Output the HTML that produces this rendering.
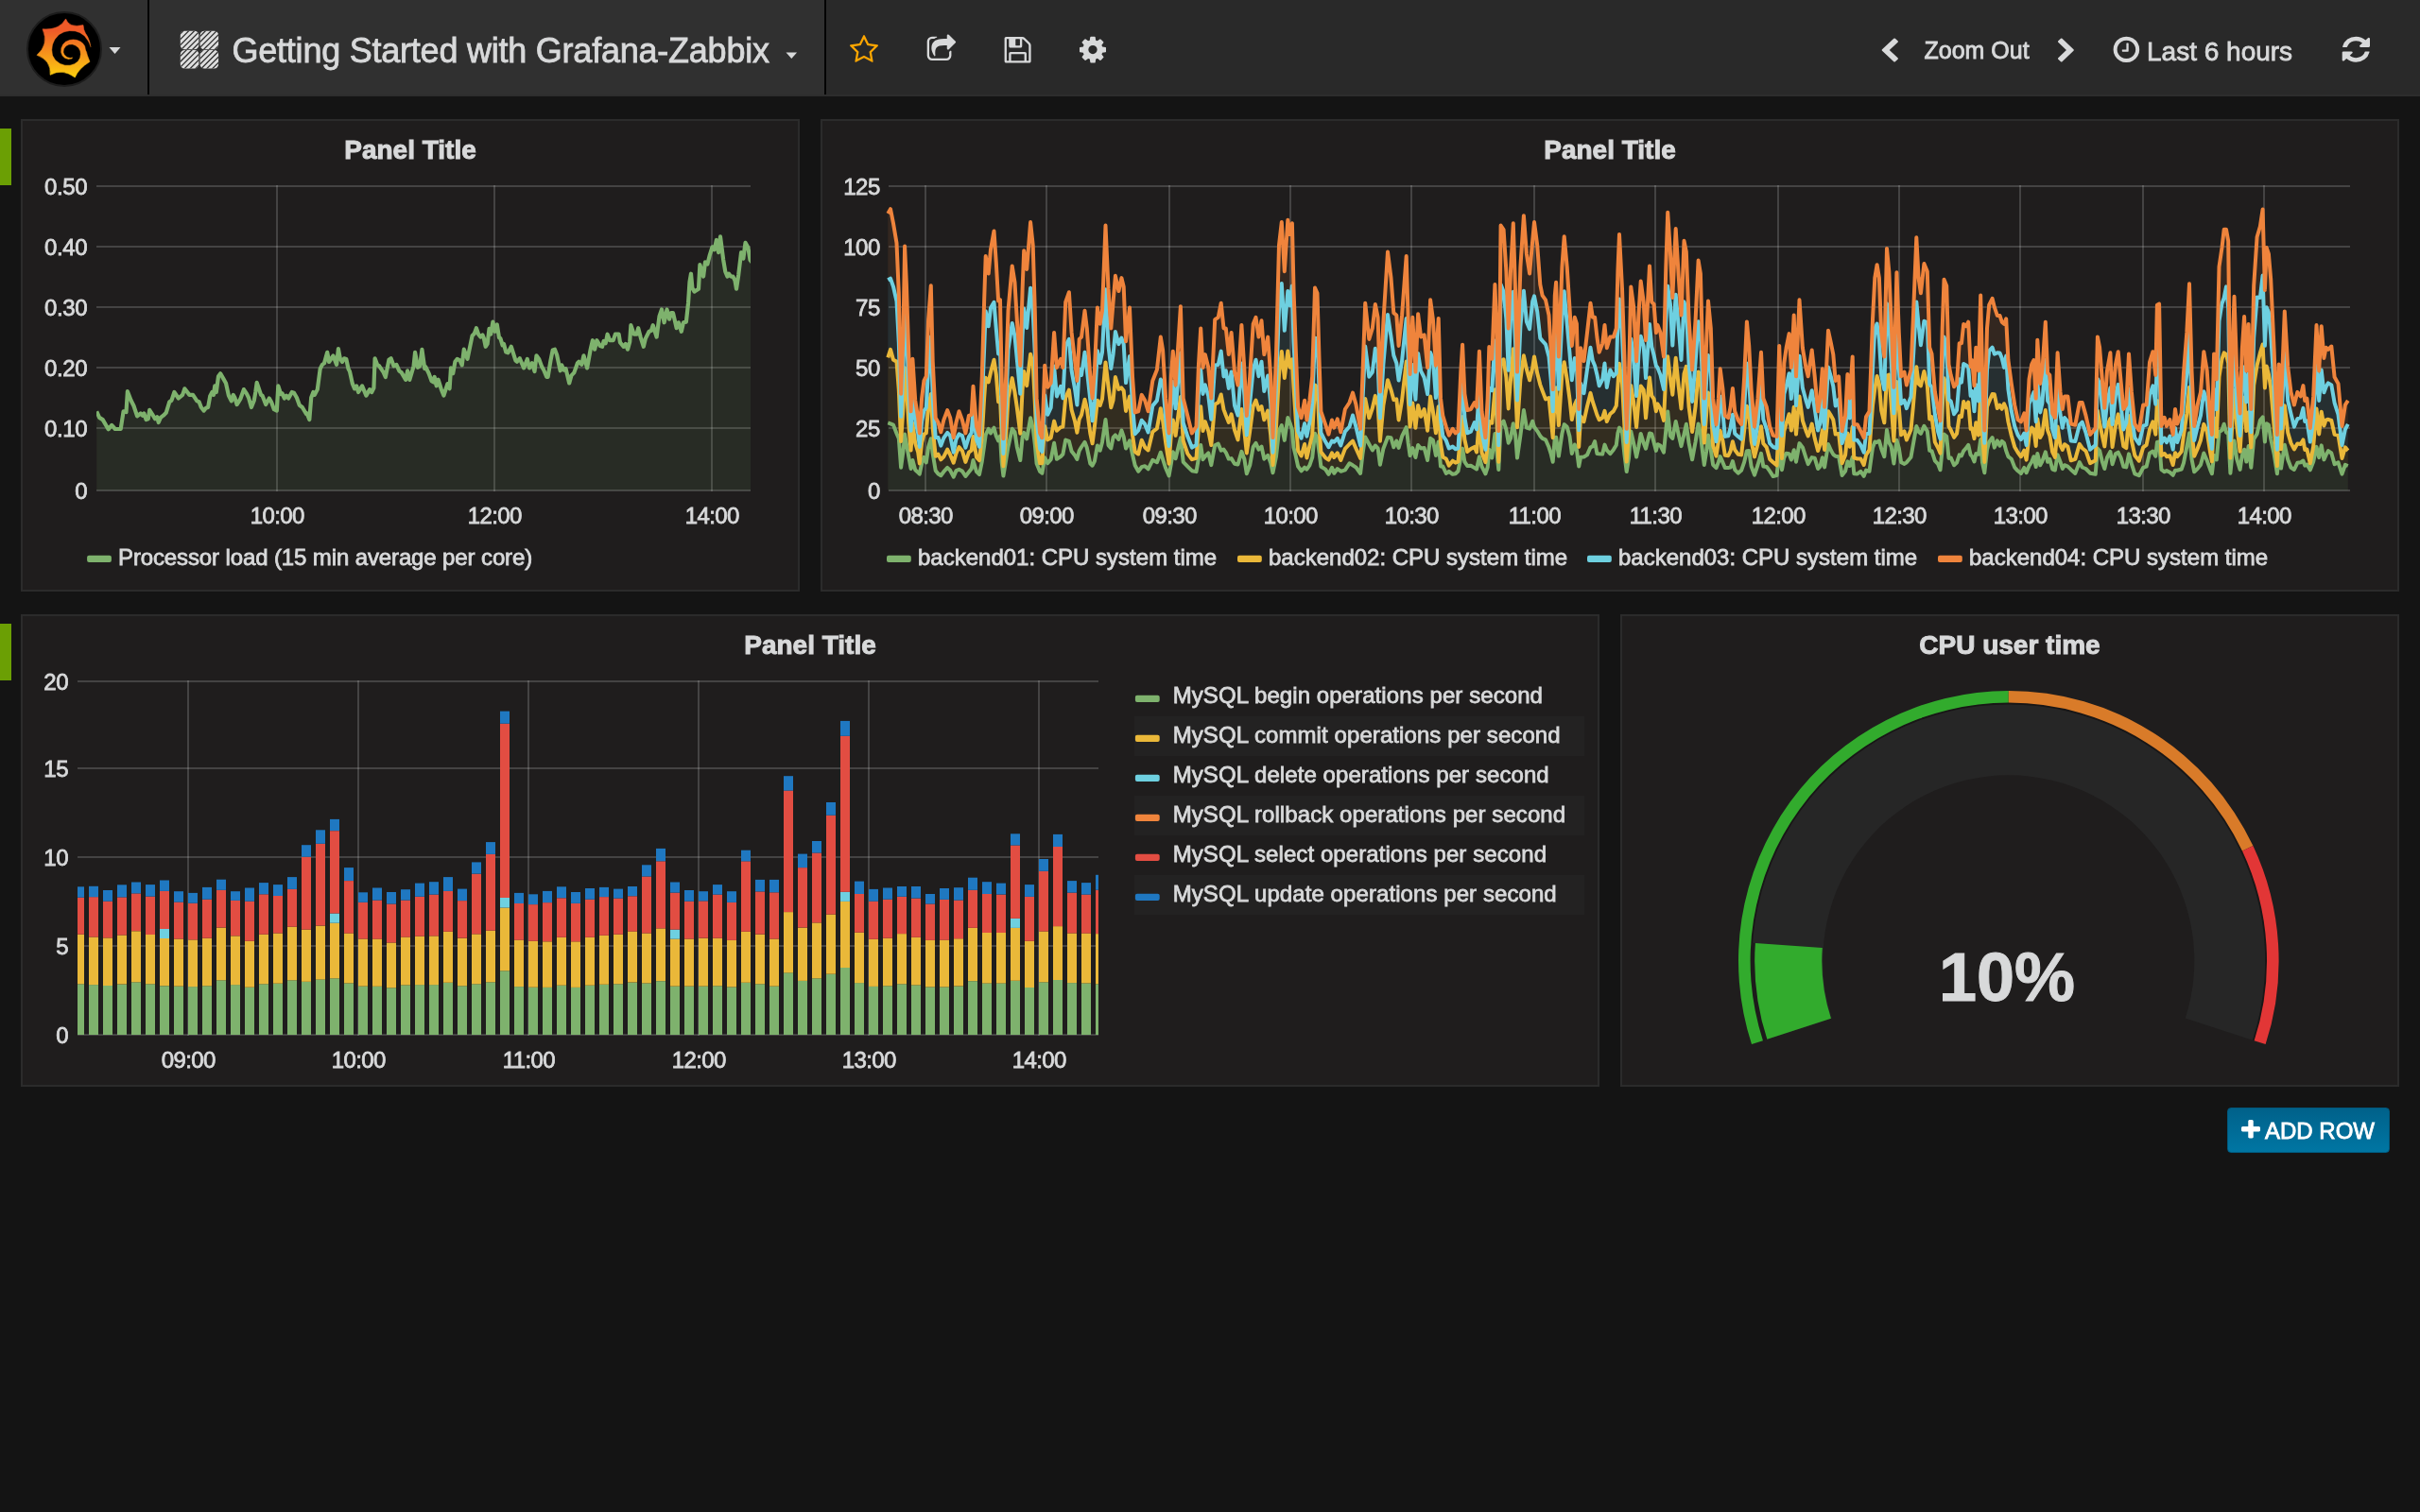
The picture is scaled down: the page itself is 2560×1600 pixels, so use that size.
<!DOCTYPE html><html lang="en"><head><meta charset="utf-8"><title>Grafana - Getting Started with Grafana-Zabbix</title>
<style>
html,body{margin:0;padding:0}
body{width:2560px;height:1600px;background:#141414;overflow:hidden;position:relative;font-family:"Liberation Sans", sans-serif;color:#d8d9da}
.t{position:absolute;white-space:nowrap;line-height:1em;-webkit-text-stroke:0.8px}
#txt{position:absolute;left:0;top:0;width:2560px;height:1600px;will-change:transform}
.ic,.gfx{position:absolute;left:0;top:0;pointer-events:none}
.nav{position:absolute;left:0;top:0;width:2560px;height:100px;background:#292929;border-bottom:2px solid #2d2d2d}
.nav .sec{position:absolute;top:0;height:100px;background:#303030}
.nav .div{position:absolute;top:0;width:2px;height:100px;background:#030303}
.panel{position:absolute;box-sizing:border-box;background:#1f1d1d;border:2px solid #2b2b2b}
.handle{position:absolute;left:0;width:12px;height:60px;background:#6b9f04}
.lrow{position:absolute;left:1200px;width:476px;height:42px}
.lrow.alt{background:#232222}
.btn{position:absolute;left:2356px;top:1172px;width:172px;height:48px;box-sizing:border-box;border-radius:4px;background:linear-gradient(#00618a,#0076a3);border:1px solid #00587c}

</style></head><body>
<div class="nav"><div class="sec" style="left:0;width:156px"></div><div class="div" style="left:156px"></div><div class="sec" style="left:158px;width:714px"></div><div class="div" style="left:872px"></div></div>
<svg class="gfx" width="2560" height="110" viewBox="0 0 2560 110"><defs><linearGradient id="lg" x1="0" y1="0" x2="0" y2="1"><stop offset="0.2" stop-color="#f05a28"/><stop offset="1" stop-color="#fcd00f"/></linearGradient></defs>
<circle cx="68" cy="52" r="39" fill="#000" stroke="#1c1c1c" stroke-width="2"/>
<g transform="translate(24 8) scale(0.05820)">
<path d="M783 205Q838 374 1100 320L1112 400Q1135 470 1180 530Q1225 620 1237 722L1150 762Q1160 850 1220 985Q1015 1112 950 1270Q725 1102 500 1225Q525 965 258 865Q482 672 362 392Q668 418 783 205Z" fill="url(#lg)" stroke="url(#lg)" stroke-width="10" stroke-linejoin="round"/>
<polygon points="1232,722 1205,650 1180,600 1120,520 1040,465 950,435 850,430 750,450 660,500 590,580 550,670 535,770 550,870 600,955 680,1015 770,1045 860,1045 940,1020 1000,975 1035,915 1047,850 1040,790 1010,735 960,695 900,675 840,680 790,705 755,750 745,810 765,860 805,895 860,910 910,900 915,910 890,935 830,945 765,925 715,875 690,810 695,740 725,670 780,615 850,585 920,575 990,585 1050,610 1100,650 1135,700 1150,770 1160,795 1242,738" fill="#000" stroke="#000" stroke-width="6" stroke-linejoin="round"/>
</g>
<path d="M115.5 50 h12 l-6 7 z" fill="#d8d9da"/>
<clipPath id="dsq"><rect x="190.8" y="32.7" width="19.5" height="19.5" rx="4.5"/><rect x="211.6" y="32.7" width="19.5" height="19.5" rx="4.5"/><rect x="190.8" y="53" width="19.5" height="19.5" rx="4.5"/><rect x="211.6" y="53" width="19.5" height="19.5" rx="4.5"/></clipPath>
<g clip-path="url(#dsq)"><rect x="190" y="32" width="42" height="42" fill="#dedede"/>
<path d="M182.90 20L122.90 80" stroke="#2c2c2c" stroke-width="1.25"/>
<path d="M188.80 20L128.80 80" stroke="#2c2c2c" stroke-width="1.25"/>
<path d="M194.70 20L134.70 80" stroke="#2c2c2c" stroke-width="1.25"/>
<path d="M200.60 20L140.60 80" stroke="#2c2c2c" stroke-width="1.25"/>
<path d="M206.50 20L146.50 80" stroke="#2c2c2c" stroke-width="1.25"/>
<path d="M212.40 20L152.40 80" stroke="#2c2c2c" stroke-width="1.25"/>
<path d="M218.30 20L158.30 80" stroke="#2c2c2c" stroke-width="1.25"/>
<path d="M224.20 20L164.20 80" stroke="#2c2c2c" stroke-width="1.25"/>
<path d="M230.10 20L170.10 80" stroke="#2c2c2c" stroke-width="1.25"/>
<path d="M236.00 20L176.00 80" stroke="#2c2c2c" stroke-width="1.25"/>
<path d="M241.90 20L181.90 80" stroke="#2c2c2c" stroke-width="1.25"/>
<path d="M247.80 20L187.80 80" stroke="#2c2c2c" stroke-width="1.25"/>
<path d="M253.70 20L193.70 80" stroke="#2c2c2c" stroke-width="1.25"/>
<path d="M259.60 20L199.60 80" stroke="#2c2c2c" stroke-width="1.25"/>
<path d="M265.50 20L205.50 80" stroke="#2c2c2c" stroke-width="1.25"/>
<path d="M271.40 20L211.40 80" stroke="#2c2c2c" stroke-width="1.25"/>
<path d="M277.30 20L217.30 80" stroke="#2c2c2c" stroke-width="1.25"/>
<path d="M283.20 20L223.20 80" stroke="#2c2c2c" stroke-width="1.25"/>
<path d="M289.10 20L229.10 80" stroke="#2c2c2c" stroke-width="1.25"/>
</g>
<path d="M831.5 55.6 h11.6 l-5.8 6.4 z" fill="#d8d9da"/>
<path fill="#fca600" transform="matrix(0.01803 0 0 -0.01815 899.00 64.29)" d="M1137 532l306 297l-422 62l-189 382l-189 -382l-422 -62l306 -297l-73 -421l378 199l377 -199zM1664 889q0 -22 -26 -48l-363 -354l86 -500q1 -7 1 -20q0 -50 -41 -50q-19 0 -40 12l-449 236l-449 -236q-22 -12 -40 -12q-21 0 -31.500 14.500t-10.500 35.500q0 6 2 20l86 500l-364 354q-25 27 -25 48q0 37 56 46l502 73l225 455q19 41 49 41t49 -41l225 -455l502 -73q56 -9 56 -46z"/>
<path fill="#d8d9da" transform="matrix(0.01827 0 0 -0.01797 980.70 64.00)" d="M1408 547v-259q0 -119 -84.500 -203.500t-203.500 -84.500h-832q-119 0 -203.500 84.500t-84.500 203.500v832q0 119 84.500 203.500t203.500 84.500h255q13 0 22.500 -9.500t9.500 -22.500q0 -27 -26 -32q-77 -26 -133 -60q-10 -4 -16 -4h-112q-66 0 -113 -47t-47 -113v-832q0 -66 47 -113t113 -47h832q66 0 113 47t47 113v214q0 19 18 29q28 13 54 37q16 16 35 8q21 -9 21 -29zM1645 1043l-384 -384q-18 -19 -45 -19q-12 0 -25 5q-39 17 -39 59v192h-160q-323 0 -438 -131q-119 -137 -74 -473q3 -23 -20 -34q-8 -2 -12 -2q-16 0 -26 13q-10 14 -21 31t-39.500 68.500t-49.500 99.500t-38.500 114t-17.500 122q0 49 3.500 91t14 90t28 88t47 81.500t68.500 74t94.500 61.500t124.500 48.500t159.500 30.500t196.500 11h160v192q0 42 39 59q13 5 25 5q26 0 45 -19l384 -384q19 -19 19 -45t-19 -45z"/>
<path fill="#d8d9da" transform="matrix(0.01823 0 0 -0.01790 1062.60 64.21)" d="M384 0h768v384h-768v-384zM1280 0h128v896q0 14 -10 38.500t-20 34.500l-281 281q-10 10 -34 20t-39 10v-416q0 -40 -28 -68t-68 -28h-576q-40 0 -68 28t-28 68v416h-128v-1280h128v416q0 40 28 68t68 28h832q40 0 68 -28t28 -68v-416zM896 928v320q0 13 -9.500 22.500t-22.500 9.500h-192q-13 0 -22.500 -9.500t-9.500 -22.500v-320q0 -13 9.500 -22.500t22.500 -9.500h192q13 0 22.500 9.500t9.500 22.500zM1536 896v-928q0 -40 -28 -68t-68 -28h-1344q-40 0 -68 28t-28 68v1344q0 40 28 68t68 28h928q40 0 88 -20t76 -48l280 -280q28 -28 48 -76t20 -88z"/>
<path fill="#d8d9da" transform="matrix(0.01823 0 0 -0.01797 1142.00 64.10)" d="M1024 640q0 106 -75 181t-181 75t-181 -75t-75 -181t75 -181t181 -75t181 75t75 181zM1536 749v-222q0 -12 -8 -23t-20 -13l-185 -28q-19 -54 -39 -91q35 -50 107 -138q10 -12 10 -25t-9 -23q-27 -37 -99 -108t-94 -71q-12 0 -26 9l-138 108q-44 -23 -91 -38q-16 -136 -29 -186q-7 -28 -36 -28h-222q-14 0 -24.500 8.500t-11.500 21.500l-28 184q-49 16 -90 37l-141 -107q-10 -9 -25 -9q-14 0 -25 11q-126 114 -165 168q-7 10 -7 23q0 12 8 23q15 21 51 66.500t54 70.500q-27 50 -41 99l-183 27q-13 2 -21 12.500t-8 23.500v222q0 12 8 23t19 13l186 28q14 46 39 92q-40 57 -107 138q-10 12 -10 24q0 10 9 23q26 36 98.500 107.500t94.500 71.500q13 0 26 -10l138 -107q44 23 91 38q16 136 29 186q7 28 36 28h222q14 0 24.500 -8.500t11.500 -21.500l28 -184q49 -16 90 -37l142 107q9 9 24 9q13 0 25 -10q129 -119 165 -170q7 -8 7 -22q0 -12 -8 -23q-15 -21 -51 -66.500t-54 -70.500q26 -50 41 -98l183 -28q13 -2 21 -12.500t8 -23.500z"/>
<path fill="#d8d9da" transform="matrix(0.01660 0 0 -0.01563 1988.14 64.01)" d="M1171 1235l-531 -531l531 -531q19 -19 19 -45t-19 -45l-166 -166q-19 -19 -45 -19t-45 19l-742 742q-19 19 -19 45t19 45l742 742q19 19 45 19t45 -19l166 -166q19 -19 19 -45t-19 -45z"/>
<path fill="#d8d9da" transform="matrix(0.01622 0 0 -0.01563 2175.54 64.01)" d="M1107 659l-742 -742q-19 -19 -45 -19t-45 19l-166 166q-19 19 -19 45t19 45l531 531l-531 531q-19 19 -19 45t19 45l166 166q19 19 45 19t45 -19l742 -742q19 -19 19 -45t-19 -45z"/>
<path fill="#d8d9da" transform="matrix(0.01797 0 0 -0.01784 2235.60 63.82)" d="M896 992v-448q0 -14 -9 -23t-23 -9h-320q-14 0 -23 9t-9 23v64q0 14 9 23t23 9h224v352q0 14 9 23t23 9h64q14 0 23 -9t9 -23zM1312 640q0 148 -73 273t-198 198t-273 73t-273 -73t-198 -198t-73 -273t73 -273t198 -198t273 -73t273 73t198 198t73 273zM1536 640q0 -209 -103 -385.500t-279.500 -279.500t-385.500 -103t-385.500 103t-279.500 279.500t-103 385.500t103 385.500t279.500 279.500t385.500 103t385.500 -103t279.500 -279.500t103 -385.500z"/>
<path fill="#d8d9da" transform="matrix(0.01908 0 0 -0.01758 2477.70 63.45)" d="M1511 480q0 -5 -1 -7q-64 -268 -268 -434.500t-478 -166.500q-146 0 -282.500 55t-243.500 157l-129 -129q-19 -19 -45 -19t-45 19t-19 45v448q0 26 19 45t45 19h448q26 0 45 -19t19 -45t-19 -45l-137 -137q71 -66 161 -102t187 -36q134 0 250 65t186 179q11 17 53 117q8 23 30 23h192q13 0 22.500 -9.500t9.500 -22.500zM1536 1280v-448q0 -26 -19 -45t-45 -19h-448q-26 0 -45 19t-19 45t19 45l138 138q-148 137 -349 137q-134 0 -250 -65t-186 -179q-11 -17 -53 -117q-8 -23 -30 -23h-199q-13 0 -22.500 9.500t-9.500 22.500v7q65 268 270 434.500t480 166.500q146 0 284 -55.500t245 -156.500l130 129q19 19 45 19t45 -19t19 -45z"/>
</svg>
<div class="handle" style="top:136px"></div><div class="handle" style="top:660px"></div>
<div class="panel" style="left:22px;top:126px;width:824px;height:500px"></div>
<div class="panel" style="left:868px;top:126px;width:1670px;height:500px"></div>
<div class="panel" style="left:22px;top:650px;width:1670px;height:500px"></div>
<div class="panel" style="left:1714px;top:650px;width:824px;height:500px"></div>
<div class="lrow" style="top:716px"></div>
<div class="lrow alt" style="top:758px"></div>
<div class="lrow" style="top:800px"></div>
<div class="lrow alt" style="top:842px"></div>
<div class="lrow" style="top:884px"></div>
<div class="lrow alt" style="top:926px"></div>
<svg class="gfx" width="2560" height="1600" viewBox="0 0 2560 1600">
<rect x="102" y="196" width="692" height="2" fill="rgba(255,255,255,0.17)"/><rect x="102" y="260" width="692" height="2" fill="rgba(255,255,255,0.17)"/><rect x="102" y="324" width="692" height="2" fill="rgba(255,255,255,0.17)"/><rect x="102" y="388" width="692" height="2" fill="rgba(255,255,255,0.17)"/><rect x="102" y="452" width="692" height="2" fill="rgba(255,255,255,0.17)"/><rect x="102" y="518" width="692" height="2" fill="rgba(255,255,255,0.17)"/><rect x="292" y="196" width="2" height="324" fill="rgba(255,255,255,0.17)"/><rect x="522" y="196" width="2" height="324" fill="rgba(255,255,255,0.17)"/><rect x="752" y="196" width="2" height="324" fill="rgba(255,255,255,0.17)"/>
<clipPath id="c1"><rect x="102" y="177" width="692" height="342"/></clipPath><g clip-path="url(#c1)">
<path d="M102.2 435.3L105.1 441.9L108.7 444.1L114.6 454.3L118.2 449.9L121.8 454.0L127.7 454.0L130.6 435.3L133.5 436.1L134.9 414.2L138.6 423.7L141.5 429.5L145.1 440.4L148.8 437.5L150.9 439.7L152.4 437.5L154.6 444.1L156.8 443.3L158.2 433.9L161.1 438.3L164.0 443.3L166.2 441.2L167.7 447.0L169.9 441.9L172.8 439.7L175.7 436.8L179.3 425.2L181.5 423.7L184.4 415.0L188.8 421.5L193.1 417.9L195.3 411.3L200.4 417.9L204.1 417.9L208.4 424.4L210.6 425.2L212.8 431.0L215.7 434.6L217.9 431.7L220.1 431.0L222.2 419.3L224.4 415.0L225.9 417.9L227.3 408.4L228.8 415.0L231.0 398.2L233.2 395.3L236.1 400.4L239.0 405.5L241.9 418.6L244.8 424.4L246.7 417.9L248.4 420.8L250.6 428.1L254.3 422.2L257.9 412.1L260.8 416.4L263.0 420.8L265.9 431.0L268.8 423.7L270.3 415.0L271.7 404.8L276.1 417.9L277.5 418.6L281.2 428.1L284.8 421.5L287.0 425.2L289.9 433.2L292.8 434.6L294.3 408.4L297.2 417.2L298.6 416.4L300.8 421.5L303.0 418.6L305.2 421.5L308.8 415.0L311.0 415.7L313.9 420.8L316.8 428.8L319.8 431.0L324.1 438.3L324.8 437.5L327.3 444.1L329.2 420.8L331.4 415.0L332.8 417.9L335.8 412.1L338.7 390.2L340.9 385.9L343.0 384.4L346.2 372.8L348.1 383.0L352.5 376.4L356.1 385.9L357.9 369.1L359.8 379.3L362.0 383.0L364.1 379.3L366.3 380.0L368.5 390.2L370.0 393.1L372.9 406.2L375.1 411.3L377.2 408.4L379.1 415.0L383.1 408.4L387.4 418.6L391.1 412.1L393.2 415.0L395.4 410.6L396.6 379.3L399.1 385.9L401.2 387.3L405.6 393.9L407.8 399.0L411.4 380.8L413.6 379.3L416.5 387.3L419.4 385.9L422.3 392.4L424.5 393.9L429.2 401.9L431.1 392.4L433.3 401.9L437.6 387.3L439.1 372.8L442.0 388.8L444.2 387.3L446.4 369.9L449.3 390.2L450.1 387.9L453.7 395.2L456.6 403.2L458.8 404.6L459.6 398.8L461.7 408.3L463.6 401.7L466.8 411.9L469.4 418.5L473.4 406.1L475.6 411.2L477.0 389.4L479.2 395.2L481.4 382.8L483.6 379.9L486.5 381.4L488.7 386.4L490.8 369.7L494.5 379.9L499.6 355.2L501.8 353.0L503.9 347.2L506.1 353.7L508.3 356.6L510.5 354.4L511.9 358.1L513.7 366.8L515.6 363.9L517.5 347.9L519.2 353.7L521.4 340.6L523.6 350.8L525.8 343.5L528.0 357.3L529.4 358.1L531.6 365.3L533.0 363.9L535.2 372.6L537.4 373.3L540.8 366.8L545.4 381.4L546.9 382.8L549.8 379.2L554.1 389.4L557.8 379.9L560.0 389.4L562.9 384.3L565.5 393.0L567.5 376.3L570.2 379.9L573.1 387.9L575.2 391.5L578.2 398.8L579.6 398.8L582.5 381.4L584.7 370.4L586.9 369.7L589.1 375.5L592.7 392.3L594.2 386.4L596.4 391.5L598.5 390.1L602.2 405.4L604.4 397.4L607.3 394.4L610.9 384.3L612.4 382.8L615.3 385.7L617.5 376.3L621.1 389.4L624.7 369.7L626.9 360.2L629.1 369.7L631.3 360.2L634.9 366.1L637.1 366.8L638.6 361.0L640.7 363.2L642.6 353.7L645.1 360.2L648.7 360.2L650.9 353.7L654.6 353.7L656.0 362.4L659.7 366.8L661.8 363.9L664.0 369.7L666.2 361.7L667.4 344.2L670.6 353.7L673.5 353.7L675.2 347.2L677.8 357.3L680.8 366.8L682.9 358.1L686.6 350.8L688.8 350.1L690.7 344.2L694.6 356.6L697.5 334.8L700.0 327.5L702.6 341.3L705.5 327.5L708.1 337.7L709.9 331.1L712.0 331.1L715.7 347.2L717.9 341.3L720.8 350.8L723.0 341.3L725.9 340.6L728.1 320.2L729.5 298.4L731.0 289.7L732.4 304.9L734.6 308.6L739.0 305.7L740.4 280.2L744.1 292.6L746.0 277.3L748.4 279.5L750.6 270.7L753.5 261.3L755.7 264.2L757.9 254.0L760.1 267.1L762.0 250.4L765.2 275.1L767.3 287.5L769.5 292.6L771.0 289.7L773.2 292.6L775.4 292.6L777.5 296.9L779.0 305.7L781.2 291.1L784.1 267.1L786.3 273.7L788.5 256.9L791.4 262.0L793.5 275.1L796.0 278.1L796.0 519L102.2 519Z" fill="#7EB26D" fill-opacity="0.1"/>
<path d="M102.2 435.3L105.1 441.9L108.7 444.1L114.6 454.3L118.2 449.9L121.8 454.0L127.7 454.0L130.6 435.3L133.5 436.1L134.9 414.2L138.6 423.7L141.5 429.5L145.1 440.4L148.8 437.5L150.9 439.7L152.4 437.5L154.6 444.1L156.8 443.3L158.2 433.9L161.1 438.3L164.0 443.3L166.2 441.2L167.7 447.0L169.9 441.9L172.8 439.7L175.7 436.8L179.3 425.2L181.5 423.7L184.4 415.0L188.8 421.5L193.1 417.9L195.3 411.3L200.4 417.9L204.1 417.9L208.4 424.4L210.6 425.2L212.8 431.0L215.7 434.6L217.9 431.7L220.1 431.0L222.2 419.3L224.4 415.0L225.9 417.9L227.3 408.4L228.8 415.0L231.0 398.2L233.2 395.3L236.1 400.4L239.0 405.5L241.9 418.6L244.8 424.4L246.7 417.9L248.4 420.8L250.6 428.1L254.3 422.2L257.9 412.1L260.8 416.4L263.0 420.8L265.9 431.0L268.8 423.7L270.3 415.0L271.7 404.8L276.1 417.9L277.5 418.6L281.2 428.1L284.8 421.5L287.0 425.2L289.9 433.2L292.8 434.6L294.3 408.4L297.2 417.2L298.6 416.4L300.8 421.5L303.0 418.6L305.2 421.5L308.8 415.0L311.0 415.7L313.9 420.8L316.8 428.8L319.8 431.0L324.1 438.3L324.8 437.5L327.3 444.1L329.2 420.8L331.4 415.0L332.8 417.9L335.8 412.1L338.7 390.2L340.9 385.9L343.0 384.4L346.2 372.8L348.1 383.0L352.5 376.4L356.1 385.9L357.9 369.1L359.8 379.3L362.0 383.0L364.1 379.3L366.3 380.0L368.5 390.2L370.0 393.1L372.9 406.2L375.1 411.3L377.2 408.4L379.1 415.0L383.1 408.4L387.4 418.6L391.1 412.1L393.2 415.0L395.4 410.6L396.6 379.3L399.1 385.9L401.2 387.3L405.6 393.9L407.8 399.0L411.4 380.8L413.6 379.3L416.5 387.3L419.4 385.9L422.3 392.4L424.5 393.9L429.2 401.9L431.1 392.4L433.3 401.9L437.6 387.3L439.1 372.8L442.0 388.8L444.2 387.3L446.4 369.9L449.3 390.2L450.1 387.9L453.7 395.2L456.6 403.2L458.8 404.6L459.6 398.8L461.7 408.3L463.6 401.7L466.8 411.9L469.4 418.5L473.4 406.1L475.6 411.2L477.0 389.4L479.2 395.2L481.4 382.8L483.6 379.9L486.5 381.4L488.7 386.4L490.8 369.7L494.5 379.9L499.6 355.2L501.8 353.0L503.9 347.2L506.1 353.7L508.3 356.6L510.5 354.4L511.9 358.1L513.7 366.8L515.6 363.9L517.5 347.9L519.2 353.7L521.4 340.6L523.6 350.8L525.8 343.5L528.0 357.3L529.4 358.1L531.6 365.3L533.0 363.9L535.2 372.6L537.4 373.3L540.8 366.8L545.4 381.4L546.9 382.8L549.8 379.2L554.1 389.4L557.8 379.9L560.0 389.4L562.9 384.3L565.5 393.0L567.5 376.3L570.2 379.9L573.1 387.9L575.2 391.5L578.2 398.8L579.6 398.8L582.5 381.4L584.7 370.4L586.9 369.7L589.1 375.5L592.7 392.3L594.2 386.4L596.4 391.5L598.5 390.1L602.2 405.4L604.4 397.4L607.3 394.4L610.9 384.3L612.4 382.8L615.3 385.7L617.5 376.3L621.1 389.4L624.7 369.7L626.9 360.2L629.1 369.7L631.3 360.2L634.9 366.1L637.1 366.8L638.6 361.0L640.7 363.2L642.6 353.7L645.1 360.2L648.7 360.2L650.9 353.7L654.6 353.7L656.0 362.4L659.7 366.8L661.8 363.9L664.0 369.7L666.2 361.7L667.4 344.2L670.6 353.7L673.5 353.7L675.2 347.2L677.8 357.3L680.8 366.8L682.9 358.1L686.6 350.8L688.8 350.1L690.7 344.2L694.6 356.6L697.5 334.8L700.0 327.5L702.6 341.3L705.5 327.5L708.1 337.7L709.9 331.1L712.0 331.1L715.7 347.2L717.9 341.3L720.8 350.8L723.0 341.3L725.9 340.6L728.1 320.2L729.5 298.4L731.0 289.7L732.4 304.9L734.6 308.6L739.0 305.7L740.4 280.2L744.1 292.6L746.0 277.3L748.4 279.5L750.6 270.7L753.5 261.3L755.7 264.2L757.9 254.0L760.1 267.1L762.0 250.4L765.2 275.1L767.3 287.5L769.5 292.6L771.0 289.7L773.2 292.6L775.4 292.6L777.5 296.9L779.0 305.7L781.2 291.1L784.1 267.1L786.3 273.7L788.5 256.9L791.4 262.0L793.5 275.1L796.0 278.1" fill="none" stroke="#7EB26D" stroke-width="4.2" stroke-linejoin="round"/>
</g>
<rect x="940" y="196" width="1546" height="2" fill="rgba(255,255,255,0.17)"/><rect x="940" y="260" width="1546" height="2" fill="rgba(255,255,255,0.17)"/><rect x="940" y="324" width="1546" height="2" fill="rgba(255,255,255,0.17)"/><rect x="940" y="388" width="1546" height="2" fill="rgba(255,255,255,0.17)"/><rect x="940" y="452" width="1546" height="2" fill="rgba(255,255,255,0.17)"/><rect x="940" y="518" width="1546" height="2" fill="rgba(255,255,255,0.17)"/><rect x="978" y="196" width="2" height="324" fill="rgba(255,255,255,0.17)"/><rect x="1106" y="196" width="2" height="324" fill="rgba(255,255,255,0.17)"/><rect x="1236" y="196" width="2" height="324" fill="rgba(255,255,255,0.17)"/><rect x="1364" y="196" width="2" height="324" fill="rgba(255,255,255,0.17)"/><rect x="1492" y="196" width="2" height="324" fill="rgba(255,255,255,0.17)"/><rect x="1622" y="196" width="2" height="324" fill="rgba(255,255,255,0.17)"/><rect x="1750" y="196" width="2" height="324" fill="rgba(255,255,255,0.17)"/><rect x="1880" y="196" width="2" height="324" fill="rgba(255,255,255,0.17)"/><rect x="2008" y="196" width="2" height="324" fill="rgba(255,255,255,0.17)"/><rect x="2136" y="196" width="2" height="324" fill="rgba(255,255,255,0.17)"/><rect x="2266" y="196" width="2" height="324" fill="rgba(255,255,255,0.17)"/><rect x="2394" y="196" width="2" height="324" fill="rgba(255,255,255,0.17)"/>
<path d="M939.3 447.4L942.0 448.3L945.0 449.6L948.5 458.8L950.8 463.9L953.1 494.7L955.5 476.9L957.1 459.6L958.9 469.6L961.2 483.0L963.6 496.0L965.4 487.0L968.2 497.2L971.2 499.9L972.8 501.7L975.1 490.4L977.4 483.9L979.8 489.5L982.1 473.1L984.8 464.2L986.7 480.0L989.7 498.0L992.5 501.6L995.3 503.2L998.3 499.2L1002.2 494.9L1005.2 497.8L1008.7 504.7L1011.5 498.1L1014.5 496.7L1017.9 498.6L1021.4 504.0L1024.9 499.5L1027.7 496.0L1029.5 487.0L1033.0 499.2L1036.0 502.2L1038.8 488.3L1041.1 472.0L1042.7 460.2L1045.7 453.8L1048.0 458.4L1051.5 452.7L1053.8 461.4L1056.1 466.3L1058.0 461.6L1059.6 488.5L1061.4 503.6L1064.2 486.9L1066.5 472.8L1070.7 453.8L1073.5 457.2L1075.8 472.9L1079.3 487.0L1081.6 462.6L1083.2 457.9L1086.2 464.3L1090.1 442.3L1092.7 453.1L1094.8 470.3L1096.6 490.6L1100.1 499.0L1102.4 500.7L1105.2 484.2L1108.2 490.1L1111.7 486.2L1115.1 468.8L1117.9 485.8L1122.1 483.1L1124.4 480.6L1127.2 465.5L1130.9 466.9L1133.6 477.4L1137.1 481.9L1139.4 485.9L1141.7 477.0L1144.0 473.0L1147.5 467.8L1149.8 473.8L1153.3 490.5L1155.6 492.7L1157.9 488.1L1160.9 471.4L1163.7 476.7L1166.0 467.9L1169.5 444.0L1172.5 471.1L1175.3 474.4L1177.6 462.8L1179.9 460.4L1183.4 464.9L1186.4 455.5L1188.7 462.2L1191.0 474.5L1195.0 466.3L1198.0 481.0L1200.7 492.5L1204.2 498.8L1207.7 494.2L1211.2 493.2L1214.6 496.3L1219.3 486.8L1223.9 489.2L1227.8 478.7L1230.1 486.0L1233.1 495.3L1236.6 503.4L1238.9 490.5L1240.8 478.2L1243.6 485.3L1248.9 463.4L1251.7 488.8L1256.3 493.6L1260.9 498.2L1265.5 499.1L1267.9 485.1L1270.2 470.9L1272.5 486.2L1274.8 483.0L1278.3 479.4L1281.3 492.1L1285.2 471.2L1288.7 469.6L1291.7 476.7L1294.5 475.6L1296.8 478.8L1299.8 485.6L1302.6 485.1L1306.0 490.7L1309.5 491.5L1313.4 477.8L1316.4 486.0L1318.8 501.3L1322.2 492.3L1325.7 472.8L1328.5 468.9L1331.5 475.7L1334.5 472.5L1337.3 485.7L1341.2 481.8L1344.2 489.7L1346.5 500.2L1350.0 483.0L1353.0 455.8L1355.8 450.1L1358.8 465.9L1362.3 442.0L1364.6 447.7L1366.9 455.0L1368.5 473.6L1370.8 482.8L1373.1 493.5L1376.6 498.3L1380.1 494.7L1382.4 496.6L1385.4 492.4L1388.2 484.2L1391.0 458.7L1393.5 463.9L1395.6 479.0L1397.4 493.7L1402.1 496.6L1405.5 501.9L1409.0 494.8L1411.3 500.8L1414.8 496.0L1418.3 498.8L1422.9 497.4L1427.5 490.3L1431.0 492.3L1434.5 494.6L1439.1 501.0L1441.4 480.9L1444.2 462.4L1448.3 470.0L1451.8 476.4L1454.8 471.5L1457.6 474.3L1459.9 491.8L1463.4 474.7L1468.0 462.8L1471.5 463.2L1474.3 473.3L1477.3 466.5L1479.6 473.9L1483.1 461.7L1487.7 452.2L1489.7 469.0L1491.6 482.1L1494.3 474.1L1497.4 484.0L1500.1 471.0L1503.1 474.5L1506.6 474.0L1510.1 487.0L1513.1 463.7L1515.9 465.9L1518.9 482.0L1521.7 467.4L1524.0 493.6L1526.3 493.5L1529.8 501.0L1532.8 498.8L1536.7 501.8L1539.7 501.2L1542.5 498.5L1545.3 484.1L1547.1 474.6L1549.4 488.7L1552.2 493.0L1555.9 492.8L1559.8 495.1L1562.1 496.5L1564.9 483.2L1567.5 493.7L1571.4 501.3L1573.7 494.3L1575.3 475.7L1578.3 484.5L1581.4 458.9L1583.4 477.7L1585.3 497.1L1587.6 448.9L1590.6 445.6L1593.4 454.6L1595.7 468.7L1598.0 463.9L1600.8 448.2L1603.1 460.5L1605.0 484.5L1608.4 460.6L1611.9 434.1L1614.9 452.6L1618.1 453.6L1621.2 445.7L1623.0 451.8L1626.2 456.1L1629.3 461.3L1631.6 463.9L1635.0 465.3L1638.5 473.3L1640.8 480.7L1642.7 488.7L1644.8 463.1L1646.1 462.7L1648.9 482.6L1652.4 458.9L1654.7 449.1L1657.7 451.8L1660.5 461.9L1662.8 480.0L1665.8 470.5L1667.9 475.9L1670.2 493.6L1672.1 483.8L1675.5 483.5L1679.0 481.4L1682.5 473.3L1684.8 472.4L1687.1 467.1L1689.4 480.0L1691.7 480.3L1695.2 480.5L1697.5 470.6L1699.8 476.4L1703.3 480.2L1706.8 475.9L1709.8 471.0L1711.4 458.3L1713.0 452.6L1716.0 457.4L1718.3 479.9L1720.7 499.1L1723.0 484.9L1725.3 456.4L1728.1 468.6L1731.1 483.5L1733.4 472.9L1735.7 458.9L1738.7 468.8L1741.0 474.7L1745.0 458.5L1747.3 459.2L1749.6 468.2L1751.9 476.9L1753.5 470.2L1756.5 471.5L1760.0 478.6L1762.3 455.3L1764.2 435.4L1766.9 461.1L1769.3 463.9L1772.7 446.0L1775.7 460.0L1778.5 472.1L1781.5 459.4L1783.8 448.8L1786.6 468.9L1790.1 486.3L1793.6 467.5L1796.6 448.4L1798.9 458.8L1800.5 473.8L1802.8 491.9L1805.1 477.7L1807.0 460.5L1809.8 476.4L1812.1 491.8L1815.5 495.2L1817.9 488.9L1819.7 483.1L1822.5 489.4L1824.8 495.1L1828.3 495.0L1830.6 494.6L1832.9 488.1L1835.2 497.1L1838.7 500.6L1842.1 497.8L1845.2 488.9L1847.9 477.3L1850.2 477.0L1852.6 493.5L1856.0 502.6L1859.5 492.0L1863.0 479.8L1865.3 493.4L1868.8 493.9L1872.2 498.7L1875.7 504.1L1879.6 503.1L1882.2 477.6L1885.0 497.2L1887.3 484.2L1889.6 479.8L1892.6 480.3L1894.9 486.5L1897.7 476.2L1900.0 488.7L1903.5 469.1L1906.9 473.4L1910.4 484.3L1912.7 491.1L1916.7 484.1L1919.7 484.6L1923.1 496.0L1925.5 493.6L1927.8 484.3L1930.1 494.4L1934.0 470.0L1937.0 476.7L1939.3 480.9L1941.7 482.8L1945.1 483.2L1948.6 503.0L1952.1 498.5L1954.4 488.4L1956.7 493.0L1959.7 483.9L1961.3 501.3L1964.8 501.5L1968.3 498.8L1971.7 503.8L1974.0 497.6L1977.5 498.8L1981.0 473.8L1983.3 467.6L1985.6 467.9L1987.9 466.5L1990.2 475.0L1993.3 483.2L1996.0 455.0L1998.3 468.2L2000.7 472.7L2003.4 490.5L2006.4 465.7L2008.8 474.4L2011.1 489.3L2014.5 490.9L2016.9 489.3L2021.5 483.7L2023.8 470.6L2027.3 450.9L2029.6 456.7L2031.9 458.9L2035.4 450.9L2038.8 456.3L2041.2 476.8L2043.5 477.2L2046.9 487.7L2050.2 491.2L2052.5 497.3L2054.7 474.7L2056.5 459.5L2059.2 461.7L2061.5 484.9L2063.7 484.4L2067.1 492.3L2070.0 489.6L2072.7 481.3L2075.0 482.3L2077.2 477.1L2079.9 474.2L2082.2 470.8L2084.6 481.4L2086.2 482.9L2088.5 488.5L2090.3 480.1L2093.0 480.8L2095.2 465.1L2097.0 489.4L2099.3 500.2L2102.0 476.0L2104.2 467.7L2107.6 463.0L2109.8 473.6L2112.8 466.4L2115.5 471.7L2117.7 466.8L2120.0 468.7L2122.2 477.0L2124.4 483.1L2127.8 485.8L2131.2 494.6L2134.6 498.3L2137.9 500.9L2141.3 494.9L2143.6 500.2L2146.5 493.0L2149.2 488.7L2151.4 483.2L2153.7 494.0L2155.3 480.0L2158.2 492.2L2160.4 488.2L2163.8 478.3L2166.1 488.7L2168.3 485.8L2171.2 496.5L2173.9 497.5L2176.6 481.2L2179.5 488.7L2181.8 496.0L2184.0 492.2L2187.4 493.6L2190.8 496.9L2195.3 500.9L2199.8 489.1L2202.7 494.5L2206.5 496.0L2211.0 500.7L2216.7 501.8L2218.9 474.6L2221.1 476.8L2223.8 488.3L2226.3 496.0L2229.0 484.3L2232.4 477.9L2234.6 491.2L2238.0 480.2L2240.7 478.6L2243.6 484.4L2246.3 493.7L2249.3 494.4L2252.0 480.4L2254.9 490.9L2258.3 501.3L2262.8 503.2L2267.2 494.8L2270.6 493.7L2274.0 479.6L2277.4 477.5L2280.3 482.8L2281.9 468.0L2284.1 467.3L2286.4 496.8L2289.7 499.3L2292.0 498.1L2295.4 499.8L2298.7 502.8L2301.0 497.7L2303.2 497.7L2307.7 496.5L2310.0 489.9L2313.3 472.8L2316.0 458.3L2318.5 485.9L2321.2 499.3L2324.6 496.1L2328.0 491.7L2331.3 479.5L2334.7 487.3L2338.1 496.9L2339.9 501.2L2342.1 481.9L2344.8 486.5L2347.5 457.1L2350.5 455.2L2352.7 448.7L2355.0 457.6L2357.2 458.6L2359.4 500.7L2361.7 478.3L2363.5 466.6L2366.2 485.7L2369.6 496.9L2371.8 481.7L2374.1 475.7L2376.3 488.6L2378.6 472.1L2381.3 494.8L2384.2 464.6L2387.6 459.2L2390.9 444.7L2393.6 441.4L2395.9 467.5L2397.7 448.2L2399.9 449.7L2402.2 464.6L2405.6 480.2L2408.9 501.3L2410.7 480.6L2413.0 495.6L2416.8 470.7L2420.2 486.3L2423.5 494.8L2426.9 497.0L2430.3 489.8L2433.7 489.3L2436.4 487.5L2438.2 492.6L2440.4 491.6L2443.8 497.3L2447.2 488.5L2450.5 472.9L2453.2 484.1L2455.7 471.4L2458.4 486.4L2460.6 481.4L2462.9 477.1L2466.3 479.5L2469.6 491.3L2473.5 489.4L2477.5 501.6L2480.9 491.9L2483.8 493.0L2483.8 519.0L2480.9 519.0L2477.5 519.0L2473.5 519.0L2469.6 519.0L2466.3 519.0L2462.9 519.0L2460.6 519.0L2458.4 519.0L2455.7 519.0L2453.2 519.0L2450.5 519.0L2447.2 519.0L2443.8 519.0L2440.4 519.0L2438.2 519.0L2436.4 519.0L2433.7 519.0L2430.3 519.0L2426.9 519.0L2423.5 519.0L2420.2 519.0L2416.8 519.0L2413.0 519.0L2410.7 519.0L2408.9 519.0L2405.6 519.0L2402.2 519.0L2399.9 519.0L2397.7 519.0L2395.9 519.0L2393.6 519.0L2390.9 519.0L2387.6 519.0L2384.2 519.0L2381.3 519.0L2378.6 519.0L2376.3 519.0L2374.1 519.0L2371.8 519.0L2369.6 519.0L2366.2 519.0L2363.5 519.0L2361.7 519.0L2359.4 519.0L2357.2 519.0L2355.0 519.0L2352.7 519.0L2350.5 519.0L2347.5 519.0L2344.8 519.0L2342.1 519.0L2339.9 519.0L2338.1 519.0L2334.7 519.0L2331.3 519.0L2328.0 519.0L2324.6 519.0L2321.2 519.0L2318.5 519.0L2316.0 519.0L2313.3 519.0L2310.0 519.0L2307.7 519.0L2303.2 519.0L2301.0 519.0L2298.7 519.0L2295.4 519.0L2292.0 519.0L2289.7 519.0L2286.4 519.0L2284.1 519.0L2281.9 519.0L2280.3 519.0L2277.4 519.0L2274.0 519.0L2270.6 519.0L2267.2 519.0L2262.8 519.0L2258.3 519.0L2254.9 519.0L2252.0 519.0L2249.3 519.0L2246.3 519.0L2243.6 519.0L2240.7 519.0L2238.0 519.0L2234.6 519.0L2232.4 519.0L2229.0 519.0L2226.3 519.0L2223.8 519.0L2221.1 519.0L2218.9 519.0L2216.7 519.0L2211.0 519.0L2206.5 519.0L2202.7 519.0L2199.8 519.0L2195.3 519.0L2190.8 519.0L2187.4 519.0L2184.0 519.0L2181.8 519.0L2179.5 519.0L2176.6 519.0L2173.9 519.0L2171.2 519.0L2168.3 519.0L2166.1 519.0L2163.8 519.0L2160.4 519.0L2158.2 519.0L2155.3 519.0L2153.7 519.0L2151.4 519.0L2149.2 519.0L2146.5 519.0L2143.6 519.0L2141.3 519.0L2137.9 519.0L2134.6 519.0L2131.2 519.0L2127.8 519.0L2124.4 519.0L2122.2 519.0L2120.0 519.0L2117.7 519.0L2115.5 519.0L2112.8 519.0L2109.8 519.0L2107.6 519.0L2104.2 519.0L2102.0 519.0L2099.3 519.0L2097.0 519.0L2095.2 519.0L2093.0 519.0L2090.3 519.0L2088.5 519.0L2086.2 519.0L2084.6 519.0L2082.2 519.0L2079.9 519.0L2077.2 519.0L2075.0 519.0L2072.7 519.0L2070.0 519.0L2067.1 519.0L2063.7 519.0L2061.5 519.0L2059.2 519.0L2056.5 519.0L2054.7 519.0L2052.5 519.0L2050.2 519.0L2046.9 519.0L2043.5 519.0L2041.2 519.0L2038.8 519.0L2035.4 519.0L2031.9 519.0L2029.6 519.0L2027.3 519.0L2023.8 519.0L2021.5 519.0L2016.9 519.0L2014.5 519.0L2011.1 519.0L2008.8 519.0L2006.4 519.0L2003.4 519.0L2000.7 519.0L1998.3 519.0L1996.0 519.0L1993.3 519.0L1990.2 519.0L1987.9 519.0L1985.6 519.0L1983.3 519.0L1981.0 519.0L1977.5 519.0L1974.0 519.0L1971.7 519.0L1968.3 519.0L1964.8 519.0L1961.3 519.0L1959.7 519.0L1956.7 519.0L1954.4 519.0L1952.1 519.0L1948.6 519.0L1945.1 519.0L1941.7 519.0L1939.3 519.0L1937.0 519.0L1934.0 519.0L1930.1 519.0L1927.8 519.0L1925.5 519.0L1923.1 519.0L1919.7 519.0L1916.7 519.0L1912.7 519.0L1910.4 519.0L1906.9 519.0L1903.5 519.0L1900.0 519.0L1897.7 519.0L1894.9 519.0L1892.6 519.0L1889.6 519.0L1887.3 519.0L1885.0 519.0L1882.2 519.0L1879.6 519.0L1875.7 519.0L1872.2 519.0L1868.8 519.0L1865.3 519.0L1863.0 519.0L1859.5 519.0L1856.0 519.0L1852.6 519.0L1850.2 519.0L1847.9 519.0L1845.2 519.0L1842.1 519.0L1838.7 519.0L1835.2 519.0L1832.9 519.0L1830.6 519.0L1828.3 519.0L1824.8 519.0L1822.5 519.0L1819.7 519.0L1817.9 519.0L1815.5 519.0L1812.1 519.0L1809.8 519.0L1807.0 519.0L1805.1 519.0L1802.8 519.0L1800.5 519.0L1798.9 519.0L1796.6 519.0L1793.6 519.0L1790.1 519.0L1786.6 519.0L1783.8 519.0L1781.5 519.0L1778.5 519.0L1775.7 519.0L1772.7 519.0L1769.3 519.0L1766.9 519.0L1764.2 519.0L1762.3 519.0L1760.0 519.0L1756.5 519.0L1753.5 519.0L1751.9 519.0L1749.6 519.0L1747.3 519.0L1745.0 519.0L1741.0 519.0L1738.7 519.0L1735.7 519.0L1733.4 519.0L1731.1 519.0L1728.1 519.0L1725.3 519.0L1723.0 519.0L1720.7 519.0L1718.3 519.0L1716.0 519.0L1713.0 519.0L1711.4 519.0L1709.8 519.0L1706.8 519.0L1703.3 519.0L1699.8 519.0L1697.5 519.0L1695.2 519.0L1691.7 519.0L1689.4 519.0L1687.1 519.0L1684.8 519.0L1682.5 519.0L1679.0 519.0L1675.5 519.0L1672.1 519.0L1670.2 519.0L1667.9 519.0L1665.8 519.0L1662.8 519.0L1660.5 519.0L1657.7 519.0L1654.7 519.0L1652.4 519.0L1648.9 519.0L1646.1 519.0L1644.8 519.0L1642.7 519.0L1640.8 519.0L1638.5 519.0L1635.0 519.0L1631.6 519.0L1629.3 519.0L1626.2 519.0L1623.0 519.0L1621.2 519.0L1618.1 519.0L1614.9 519.0L1611.9 519.0L1608.4 519.0L1605.0 519.0L1603.1 519.0L1600.8 519.0L1598.0 519.0L1595.7 519.0L1593.4 519.0L1590.6 519.0L1587.6 519.0L1585.3 519.0L1583.4 519.0L1581.4 519.0L1578.3 519.0L1575.3 519.0L1573.7 519.0L1571.4 519.0L1567.5 519.0L1564.9 519.0L1562.1 519.0L1559.8 519.0L1555.9 519.0L1552.2 519.0L1549.4 519.0L1547.1 519.0L1545.3 519.0L1542.5 519.0L1539.7 519.0L1536.7 519.0L1532.8 519.0L1529.8 519.0L1526.3 519.0L1524.0 519.0L1521.7 519.0L1518.9 519.0L1515.9 519.0L1513.1 519.0L1510.1 519.0L1506.6 519.0L1503.1 519.0L1500.1 519.0L1497.4 519.0L1494.3 519.0L1491.6 519.0L1489.7 519.0L1487.7 519.0L1483.1 519.0L1479.6 519.0L1477.3 519.0L1474.3 519.0L1471.5 519.0L1468.0 519.0L1463.4 519.0L1459.9 519.0L1457.6 519.0L1454.8 519.0L1451.8 519.0L1448.3 519.0L1444.2 519.0L1441.4 519.0L1439.1 519.0L1434.5 519.0L1431.0 519.0L1427.5 519.0L1422.9 519.0L1418.3 519.0L1414.8 519.0L1411.3 519.0L1409.0 519.0L1405.5 519.0L1402.1 519.0L1397.4 519.0L1395.6 519.0L1393.5 519.0L1391.0 519.0L1388.2 519.0L1385.4 519.0L1382.4 519.0L1380.1 519.0L1376.6 519.0L1373.1 519.0L1370.8 519.0L1368.5 519.0L1366.9 519.0L1364.6 519.0L1362.3 519.0L1358.8 519.0L1355.8 519.0L1353.0 519.0L1350.0 519.0L1346.5 519.0L1344.2 519.0L1341.2 519.0L1337.3 519.0L1334.5 519.0L1331.5 519.0L1328.5 519.0L1325.7 519.0L1322.2 519.0L1318.8 519.0L1316.4 519.0L1313.4 519.0L1309.5 519.0L1306.0 519.0L1302.6 519.0L1299.8 519.0L1296.8 519.0L1294.5 519.0L1291.7 519.0L1288.7 519.0L1285.2 519.0L1281.3 519.0L1278.3 519.0L1274.8 519.0L1272.5 519.0L1270.2 519.0L1267.9 519.0L1265.5 519.0L1260.9 519.0L1256.3 519.0L1251.7 519.0L1248.9 519.0L1243.6 519.0L1240.8 519.0L1238.9 519.0L1236.6 519.0L1233.1 519.0L1230.1 519.0L1227.8 519.0L1223.9 519.0L1219.3 519.0L1214.6 519.0L1211.2 519.0L1207.7 519.0L1204.2 519.0L1200.7 519.0L1198.0 519.0L1195.0 519.0L1191.0 519.0L1188.7 519.0L1186.4 519.0L1183.4 519.0L1179.9 519.0L1177.6 519.0L1175.3 519.0L1172.5 519.0L1169.5 519.0L1166.0 519.0L1163.7 519.0L1160.9 519.0L1157.9 519.0L1155.6 519.0L1153.3 519.0L1149.8 519.0L1147.5 519.0L1144.0 519.0L1141.7 519.0L1139.4 519.0L1137.1 519.0L1133.6 519.0L1130.9 519.0L1127.2 519.0L1124.4 519.0L1122.1 519.0L1117.9 519.0L1115.1 519.0L1111.7 519.0L1108.2 519.0L1105.2 519.0L1102.4 519.0L1100.1 519.0L1096.6 519.0L1094.8 519.0L1092.7 519.0L1090.1 519.0L1086.2 519.0L1083.2 519.0L1081.6 519.0L1079.3 519.0L1075.8 519.0L1073.5 519.0L1070.7 519.0L1066.5 519.0L1064.2 519.0L1061.4 519.0L1059.6 519.0L1058.0 519.0L1056.1 519.0L1053.8 519.0L1051.5 519.0L1048.0 519.0L1045.7 519.0L1042.7 519.0L1041.1 519.0L1038.8 519.0L1036.0 519.0L1033.0 519.0L1029.5 519.0L1027.7 519.0L1024.9 519.0L1021.4 519.0L1017.9 519.0L1014.5 519.0L1011.5 519.0L1008.7 519.0L1005.2 519.0L1002.2 519.0L998.3 519.0L995.3 519.0L992.5 519.0L989.7 519.0L986.7 519.0L984.8 519.0L982.1 519.0L979.8 519.0L977.4 519.0L975.1 519.0L972.8 519.0L971.2 519.0L968.2 519.0L965.4 519.0L963.6 519.0L961.2 519.0L958.9 519.0L957.1 519.0L955.5 519.0L953.1 519.0L950.8 519.0L948.5 519.0L945.0 519.0L942.0 519.0L939.3 519.0Z" fill="#7EB26D" fill-opacity="0.1"/>
<path d="M939.3 378.4L942.0 369.9L945.0 380.8L948.5 382.6L950.8 412.4L953.1 467.1L955.5 430.5L957.1 389.2L958.9 409.7L961.2 447.8L963.6 476.6L965.4 447.7L968.2 469.0L971.2 478.7L972.8 490.4L975.1 468.6L977.4 459.5L979.8 458.3L982.1 430.4L984.8 417.0L986.7 453.1L989.7 482.8L992.5 480.7L995.3 486.3L998.3 483.3L1002.2 475.6L1005.2 481.3L1008.7 489.6L1011.5 479.7L1014.5 473.1L1017.9 477.0L1021.4 488.9L1024.9 478.6L1027.7 476.7L1029.5 462.0L1033.0 483.9L1036.0 487.3L1038.8 461.4L1041.1 421.9L1042.7 399.8L1045.7 404.4L1048.0 394.1L1051.5 380.8L1053.8 396.2L1056.1 425.2L1058.0 420.9L1059.6 457.7L1061.4 493.3L1064.2 460.9L1066.5 421.0L1070.7 400.1L1073.5 415.1L1075.8 431.3L1079.3 458.7L1081.6 412.0L1083.2 393.0L1086.2 408.1L1090.1 374.8L1092.7 385.0L1094.8 426.0L1096.6 469.2L1100.1 490.3L1102.4 490.2L1105.2 450.9L1108.2 465.4L1111.7 463.2L1115.1 445.6L1117.9 455.7L1122.1 452.1L1124.4 451.6L1127.2 420.6L1130.9 412.7L1133.6 433.7L1137.1 446.0L1139.4 457.8L1141.7 443.6L1144.0 439.1L1147.5 422.8L1149.8 432.3L1153.3 458.5L1155.6 469.3L1157.9 451.6L1160.9 423.7L1163.7 429.0L1166.0 422.1L1169.5 383.4L1172.5 409.0L1175.3 431.2L1177.6 423.4L1179.9 398.9L1183.4 411.9L1186.4 410.4L1188.7 413.5L1191.0 434.9L1195.0 419.5L1198.0 460.2L1200.7 478.0L1204.2 480.5L1207.7 465.7L1211.2 473.4L1214.6 476.5L1219.3 457.0L1223.9 453.4L1227.8 432.2L1230.1 445.2L1233.1 468.3L1236.6 490.7L1238.9 459.1L1240.8 444.4L1243.6 460.9L1248.9 420.0L1251.7 466.4L1256.3 480.1L1260.9 486.2L1265.5 484.8L1267.9 453.2L1270.2 430.2L1272.5 456.0L1274.8 446.1L1278.3 456.2L1281.3 471.0L1285.2 427.7L1288.7 426.0L1291.7 417.5L1294.5 433.4L1296.8 439.5L1299.8 446.9L1302.6 438.3L1306.0 455.0L1309.5 465.4L1313.4 433.0L1316.4 456.9L1318.8 479.4L1322.2 456.3L1325.7 429.8L1328.5 423.5L1331.5 433.6L1334.5 430.1L1337.3 444.3L1341.2 434.6L1344.2 460.6L1346.5 492.1L1350.0 451.6L1353.0 396.3L1355.8 372.0L1358.8 400.0L1362.3 371.6L1364.6 388.7L1366.9 380.2L1368.5 410.0L1370.8 444.6L1373.1 476.7L1376.6 482.5L1380.1 470.0L1382.4 484.5L1385.4 471.6L1388.2 460.2L1391.0 407.4L1393.5 410.1L1395.6 452.7L1397.4 478.3L1402.1 484.3L1405.5 486.7L1409.0 479.4L1411.3 484.0L1414.8 479.3L1418.3 487.0L1422.9 474.9L1427.5 470.0L1431.0 466.6L1434.5 474.8L1439.1 485.0L1441.4 460.5L1444.2 421.9L1448.3 442.3L1451.8 432.0L1454.8 418.9L1457.6 429.4L1459.9 466.7L1463.4 428.8L1468.0 402.2L1471.5 412.6L1474.3 423.1L1477.3 422.4L1479.6 444.4L1483.1 423.4L1487.7 382.6L1489.7 421.8L1491.6 451.6L1494.3 426.6L1497.4 452.8L1500.1 429.1L1503.1 440.8L1506.6 433.1L1510.1 455.7L1513.1 419.4L1515.9 435.4L1518.9 458.2L1521.7 430.2L1524.0 469.0L1526.3 483.7L1529.8 485.5L1532.8 492.6L1536.7 487.7L1539.7 489.7L1542.5 488.5L1545.3 456.9L1547.1 441.1L1549.4 465.3L1552.2 478.0L1555.9 475.0L1559.8 472.9L1562.1 478.5L1564.9 442.5L1567.5 479.1L1571.4 489.1L1573.7 471.4L1575.3 445.9L1578.3 447.7L1581.4 412.3L1583.4 443.5L1585.3 488.7L1587.6 382.1L1590.6 380.3L1593.4 399.5L1595.7 432.4L1598.0 402.0L1600.8 369.3L1603.1 410.6L1605.0 452.3L1608.4 401.4L1611.9 376.3L1614.9 390.6L1618.1 402.3L1621.2 389.4L1623.0 377.4L1626.2 394.8L1629.3 407.1L1631.6 413.4L1635.0 422.4L1638.5 421.1L1640.8 443.7L1642.7 463.2L1644.8 417.9L1646.1 410.2L1648.9 450.1L1652.4 394.9L1654.7 383.2L1657.7 401.6L1660.5 422.4L1662.8 444.1L1665.8 428.3L1667.9 423.6L1670.2 472.9L1672.1 440.6L1675.5 446.2L1679.0 430.0L1682.5 415.9L1684.8 424.9L1687.1 431.8L1689.4 439.0L1691.7 444.2L1695.2 442.1L1697.5 434.8L1699.8 446.0L1703.3 438.0L1706.8 435.1L1709.8 429.4L1711.4 408.1L1713.0 384.8L1716.0 405.5L1718.3 448.7L1720.7 488.6L1723.0 459.1L1725.3 407.9L1728.1 425.0L1731.1 452.1L1733.4 424.3L1735.7 408.5L1738.7 412.7L1741.0 442.3L1745.0 399.5L1747.3 418.9L1749.6 422.2L1751.9 435.2L1753.5 427.4L1756.5 432.5L1760.0 444.9L1762.3 396.1L1764.2 377.2L1766.9 400.5L1769.3 417.7L1772.7 378.8L1775.7 408.7L1778.5 432.4L1781.5 395.6L1783.8 387.9L1786.6 430.6L1790.1 457.0L1793.6 430.1L1796.6 393.5L1798.9 396.5L1800.5 436.6L1802.8 468.6L1805.1 438.7L1807.0 415.6L1809.8 428.4L1812.1 471.4L1815.5 482.7L1817.9 467.1L1819.7 455.7L1822.5 466.7L1824.8 481.8L1828.3 482.2L1830.6 477.4L1832.9 467.3L1835.2 476.0L1838.7 480.7L1842.1 481.4L1845.2 455.0L1847.9 429.8L1850.2 437.4L1852.6 466.5L1856.0 483.4L1859.5 469.6L1863.0 451.2L1865.3 469.3L1868.8 473.4L1872.2 486.1L1875.7 489.3L1879.6 492.5L1882.2 441.3L1885.0 485.1L1887.3 456.3L1889.6 448.1L1892.6 438.2L1894.9 455.4L1897.7 430.8L1900.0 459.6L1903.5 419.5L1906.9 445.1L1910.4 455.7L1912.7 461.5L1916.7 448.6L1919.7 463.8L1923.1 477.0L1925.5 470.1L1927.8 455.2L1930.1 476.1L1934.0 435.2L1937.0 439.9L1939.3 444.3L1941.7 459.6L1945.1 458.9L1948.6 490.3L1952.1 481.5L1954.4 458.5L1956.7 472.8L1959.7 451.6L1961.3 484.3L1964.8 485.5L1968.3 485.4L1971.7 492.0L1974.0 481.5L1977.5 476.2L1981.0 429.3L1983.3 411.6L1985.6 397.9L1987.9 406.4L1990.2 434.4L1993.3 447.3L1996.0 397.7L1998.3 396.7L2000.7 428.4L2003.4 466.6L2006.4 404.1L2008.8 431.0L2011.1 460.3L2014.5 456.4L2016.9 465.5L2021.5 454.7L2023.8 430.6L2027.3 388.2L2029.6 406.1L2031.9 408.3L2035.4 393.0L2038.8 407.6L2041.2 443.4L2043.5 441.1L2046.9 467.9L2050.2 474.1L2052.5 479.6L2054.7 432.5L2056.5 400.3L2059.2 407.8L2061.5 451.3L2063.7 455.1L2067.1 462.8L2070.0 458.9L2072.7 440.2L2075.0 441.0L2077.2 425.1L2079.9 431.3L2082.2 425.5L2084.6 453.8L2086.2 453.4L2088.5 464.1L2090.3 447.2L2093.0 460.5L2095.2 414.2L2097.0 460.0L2099.3 488.9L2102.0 430.6L2104.2 424.9L2107.6 417.0L2109.8 417.3L2112.8 432.0L2115.5 428.7L2117.7 432.8L2120.0 427.2L2122.2 432.2L2124.4 446.4L2127.8 461.0L2131.2 472.9L2134.6 478.7L2137.9 483.2L2141.3 476.7L2143.6 486.6L2146.5 462.3L2149.2 452.5L2151.4 454.6L2153.7 471.9L2155.3 443.3L2158.2 463.1L2160.4 459.0L2163.8 434.0L2166.1 455.2L2168.3 461.0L2171.2 478.4L2173.9 483.9L2176.6 451.4L2179.5 471.3L2181.8 475.9L2184.0 470.2L2187.4 472.7L2190.8 487.3L2195.3 485.9L2199.8 469.9L2202.7 474.2L2206.5 477.2L2211.0 490.1L2216.7 487.2L2218.9 434.5L2221.1 447.4L2223.8 460.8L2226.3 472.4L2229.0 450.6L2232.4 443.0L2234.6 473.0L2238.0 449.8L2240.7 438.4L2243.6 454.9L2246.3 472.2L2249.3 474.2L2252.0 440.1L2254.9 466.0L2258.3 481.9L2262.8 487.7L2267.2 473.3L2270.6 470.8L2274.0 454.5L2277.4 446.3L2280.3 459.6L2281.9 424.1L2284.1 424.6L2286.4 482.0L2289.7 480.0L2292.0 483.2L2295.4 482.3L2298.7 492.0L2301.0 479.2L2303.2 483.2L2307.7 477.7L2310.0 460.6L2313.3 438.0L2316.0 409.8L2318.5 454.9L2321.2 482.8L2324.6 475.0L2328.0 465.7L2331.3 448.9L2334.7 456.6L2338.1 478.7L2339.9 488.4L2342.1 442.2L2344.8 462.3L2347.5 398.6L2350.5 379.8L2352.7 373.4L2355.0 375.1L2357.2 384.4L2359.4 484.6L2361.7 440.8L2363.5 413.0L2366.2 450.5L2369.6 477.8L2371.8 442.8L2374.1 420.4L2376.3 456.1L2378.6 436.3L2381.3 473.5L2384.2 407.8L2387.6 386.6L2390.9 373.4L2393.6 364.5L2395.9 410.5L2397.7 387.5L2399.9 395.9L2402.2 410.3L2405.6 451.2L2408.9 493.1L2410.7 451.4L2413.0 475.3L2416.8 429.3L2420.2 457.6L2423.5 468.9L2426.9 475.4L2430.3 469.6L2433.7 470.1L2436.4 465.4L2438.2 476.0L2440.4 475.5L2443.8 490.3L2447.2 472.4L2450.5 432.5L2453.2 459.4L2455.7 435.7L2458.4 450.5L2460.6 444.4L2462.9 443.8L2466.3 445.0L2469.6 459.9L2473.5 460.6L2477.5 485.0L2480.9 473.4L2483.8 476.9L2483.8 493.0L2480.9 491.9L2477.5 501.6L2473.5 489.4L2469.6 491.3L2466.3 479.5L2462.9 477.1L2460.6 481.4L2458.4 486.4L2455.7 471.4L2453.2 484.1L2450.5 472.9L2447.2 488.5L2443.8 497.3L2440.4 491.6L2438.2 492.6L2436.4 487.5L2433.7 489.3L2430.3 489.8L2426.9 497.0L2423.5 494.8L2420.2 486.3L2416.8 470.7L2413.0 495.6L2410.7 480.6L2408.9 501.3L2405.6 480.2L2402.2 464.6L2399.9 449.7L2397.7 448.2L2395.9 467.5L2393.6 441.4L2390.9 444.7L2387.6 459.2L2384.2 464.6L2381.3 494.8L2378.6 472.1L2376.3 488.6L2374.1 475.7L2371.8 481.7L2369.6 496.9L2366.2 485.7L2363.5 466.6L2361.7 478.3L2359.4 500.7L2357.2 458.6L2355.0 457.6L2352.7 448.7L2350.5 455.2L2347.5 457.1L2344.8 486.5L2342.1 481.9L2339.9 501.2L2338.1 496.9L2334.7 487.3L2331.3 479.5L2328.0 491.7L2324.6 496.1L2321.2 499.3L2318.5 485.9L2316.0 458.3L2313.3 472.8L2310.0 489.9L2307.7 496.5L2303.2 497.7L2301.0 497.7L2298.7 502.8L2295.4 499.8L2292.0 498.1L2289.7 499.3L2286.4 496.8L2284.1 467.3L2281.9 468.0L2280.3 482.8L2277.4 477.5L2274.0 479.6L2270.6 493.7L2267.2 494.8L2262.8 503.2L2258.3 501.3L2254.9 490.9L2252.0 480.4L2249.3 494.4L2246.3 493.7L2243.6 484.4L2240.7 478.6L2238.0 480.2L2234.6 491.2L2232.4 477.9L2229.0 484.3L2226.3 496.0L2223.8 488.3L2221.1 476.8L2218.9 474.6L2216.7 501.8L2211.0 500.7L2206.5 496.0L2202.7 494.5L2199.8 489.1L2195.3 500.9L2190.8 496.9L2187.4 493.6L2184.0 492.2L2181.8 496.0L2179.5 488.7L2176.6 481.2L2173.9 497.5L2171.2 496.5L2168.3 485.8L2166.1 488.7L2163.8 478.3L2160.4 488.2L2158.2 492.2L2155.3 480.0L2153.7 494.0L2151.4 483.2L2149.2 488.7L2146.5 493.0L2143.6 500.2L2141.3 494.9L2137.9 500.9L2134.6 498.3L2131.2 494.6L2127.8 485.8L2124.4 483.1L2122.2 477.0L2120.0 468.7L2117.7 466.8L2115.5 471.7L2112.8 466.4L2109.8 473.6L2107.6 463.0L2104.2 467.7L2102.0 476.0L2099.3 500.2L2097.0 489.4L2095.2 465.1L2093.0 480.8L2090.3 480.1L2088.5 488.5L2086.2 482.9L2084.6 481.4L2082.2 470.8L2079.9 474.2L2077.2 477.1L2075.0 482.3L2072.7 481.3L2070.0 489.6L2067.1 492.3L2063.7 484.4L2061.5 484.9L2059.2 461.7L2056.5 459.5L2054.7 474.7L2052.5 497.3L2050.2 491.2L2046.9 487.7L2043.5 477.2L2041.2 476.8L2038.8 456.3L2035.4 450.9L2031.9 458.9L2029.6 456.7L2027.3 450.9L2023.8 470.6L2021.5 483.7L2016.9 489.3L2014.5 490.9L2011.1 489.3L2008.8 474.4L2006.4 465.7L2003.4 490.5L2000.7 472.7L1998.3 468.2L1996.0 455.0L1993.3 483.2L1990.2 475.0L1987.9 466.5L1985.6 467.9L1983.3 467.6L1981.0 473.8L1977.5 498.8L1974.0 497.6L1971.7 503.8L1968.3 498.8L1964.8 501.5L1961.3 501.3L1959.7 483.9L1956.7 493.0L1954.4 488.4L1952.1 498.5L1948.6 503.0L1945.1 483.2L1941.7 482.8L1939.3 480.9L1937.0 476.7L1934.0 470.0L1930.1 494.4L1927.8 484.3L1925.5 493.6L1923.1 496.0L1919.7 484.6L1916.7 484.1L1912.7 491.1L1910.4 484.3L1906.9 473.4L1903.5 469.1L1900.0 488.7L1897.7 476.2L1894.9 486.5L1892.6 480.3L1889.6 479.8L1887.3 484.2L1885.0 497.2L1882.2 477.6L1879.6 503.1L1875.7 504.1L1872.2 498.7L1868.8 493.9L1865.3 493.4L1863.0 479.8L1859.5 492.0L1856.0 502.6L1852.6 493.5L1850.2 477.0L1847.9 477.3L1845.2 488.9L1842.1 497.8L1838.7 500.6L1835.2 497.1L1832.9 488.1L1830.6 494.6L1828.3 495.0L1824.8 495.1L1822.5 489.4L1819.7 483.1L1817.9 488.9L1815.5 495.2L1812.1 491.8L1809.8 476.4L1807.0 460.5L1805.1 477.7L1802.8 491.9L1800.5 473.8L1798.9 458.8L1796.6 448.4L1793.6 467.5L1790.1 486.3L1786.6 468.9L1783.8 448.8L1781.5 459.4L1778.5 472.1L1775.7 460.0L1772.7 446.0L1769.3 463.9L1766.9 461.1L1764.2 435.4L1762.3 455.3L1760.0 478.6L1756.5 471.5L1753.5 470.2L1751.9 476.9L1749.6 468.2L1747.3 459.2L1745.0 458.5L1741.0 474.7L1738.7 468.8L1735.7 458.9L1733.4 472.9L1731.1 483.5L1728.1 468.6L1725.3 456.4L1723.0 484.9L1720.7 499.1L1718.3 479.9L1716.0 457.4L1713.0 452.6L1711.4 458.3L1709.8 471.0L1706.8 475.9L1703.3 480.2L1699.8 476.4L1697.5 470.6L1695.2 480.5L1691.7 480.3L1689.4 480.0L1687.1 467.1L1684.8 472.4L1682.5 473.3L1679.0 481.4L1675.5 483.5L1672.1 483.8L1670.2 493.6L1667.9 475.9L1665.8 470.5L1662.8 480.0L1660.5 461.9L1657.7 451.8L1654.7 449.1L1652.4 458.9L1648.9 482.6L1646.1 462.7L1644.8 463.1L1642.7 488.7L1640.8 480.7L1638.5 473.3L1635.0 465.3L1631.6 463.9L1629.3 461.3L1626.2 456.1L1623.0 451.8L1621.2 445.7L1618.1 453.6L1614.9 452.6L1611.9 434.1L1608.4 460.6L1605.0 484.5L1603.1 460.5L1600.8 448.2L1598.0 463.9L1595.7 468.7L1593.4 454.6L1590.6 445.6L1587.6 448.9L1585.3 497.1L1583.4 477.7L1581.4 458.9L1578.3 484.5L1575.3 475.7L1573.7 494.3L1571.4 501.3L1567.5 493.7L1564.9 483.2L1562.1 496.5L1559.8 495.1L1555.9 492.8L1552.2 493.0L1549.4 488.7L1547.1 474.6L1545.3 484.1L1542.5 498.5L1539.7 501.2L1536.7 501.8L1532.8 498.8L1529.8 501.0L1526.3 493.5L1524.0 493.6L1521.7 467.4L1518.9 482.0L1515.9 465.9L1513.1 463.7L1510.1 487.0L1506.6 474.0L1503.1 474.5L1500.1 471.0L1497.4 484.0L1494.3 474.1L1491.6 482.1L1489.7 469.0L1487.7 452.2L1483.1 461.7L1479.6 473.9L1477.3 466.5L1474.3 473.3L1471.5 463.2L1468.0 462.8L1463.4 474.7L1459.9 491.8L1457.6 474.3L1454.8 471.5L1451.8 476.4L1448.3 470.0L1444.2 462.4L1441.4 480.9L1439.1 501.0L1434.5 494.6L1431.0 492.3L1427.5 490.3L1422.9 497.4L1418.3 498.8L1414.8 496.0L1411.3 500.8L1409.0 494.8L1405.5 501.9L1402.1 496.6L1397.4 493.7L1395.6 479.0L1393.5 463.9L1391.0 458.7L1388.2 484.2L1385.4 492.4L1382.4 496.6L1380.1 494.7L1376.6 498.3L1373.1 493.5L1370.8 482.8L1368.5 473.6L1366.9 455.0L1364.6 447.7L1362.3 442.0L1358.8 465.9L1355.8 450.1L1353.0 455.8L1350.0 483.0L1346.5 500.2L1344.2 489.7L1341.2 481.8L1337.3 485.7L1334.5 472.5L1331.5 475.7L1328.5 468.9L1325.7 472.8L1322.2 492.3L1318.8 501.3L1316.4 486.0L1313.4 477.8L1309.5 491.5L1306.0 490.7L1302.6 485.1L1299.8 485.6L1296.8 478.8L1294.5 475.6L1291.7 476.7L1288.7 469.6L1285.2 471.2L1281.3 492.1L1278.3 479.4L1274.8 483.0L1272.5 486.2L1270.2 470.9L1267.9 485.1L1265.5 499.1L1260.9 498.2L1256.3 493.6L1251.7 488.8L1248.9 463.4L1243.6 485.3L1240.8 478.2L1238.9 490.5L1236.6 503.4L1233.1 495.3L1230.1 486.0L1227.8 478.7L1223.9 489.2L1219.3 486.8L1214.6 496.3L1211.2 493.2L1207.7 494.2L1204.2 498.8L1200.7 492.5L1198.0 481.0L1195.0 466.3L1191.0 474.5L1188.7 462.2L1186.4 455.5L1183.4 464.9L1179.9 460.4L1177.6 462.8L1175.3 474.4L1172.5 471.1L1169.5 444.0L1166.0 467.9L1163.7 476.7L1160.9 471.4L1157.9 488.1L1155.6 492.7L1153.3 490.5L1149.8 473.8L1147.5 467.8L1144.0 473.0L1141.7 477.0L1139.4 485.9L1137.1 481.9L1133.6 477.4L1130.9 466.9L1127.2 465.5L1124.4 480.6L1122.1 483.1L1117.9 485.8L1115.1 468.8L1111.7 486.2L1108.2 490.1L1105.2 484.2L1102.4 500.7L1100.1 499.0L1096.6 490.6L1094.8 470.3L1092.7 453.1L1090.1 442.3L1086.2 464.3L1083.2 457.9L1081.6 462.6L1079.3 487.0L1075.8 472.9L1073.5 457.2L1070.7 453.8L1066.5 472.8L1064.2 486.9L1061.4 503.6L1059.6 488.5L1058.0 461.6L1056.1 466.3L1053.8 461.4L1051.5 452.7L1048.0 458.4L1045.7 453.8L1042.7 460.2L1041.1 472.0L1038.8 488.3L1036.0 502.2L1033.0 499.2L1029.5 487.0L1027.7 496.0L1024.9 499.5L1021.4 504.0L1017.9 498.6L1014.5 496.7L1011.5 498.1L1008.7 504.7L1005.2 497.8L1002.2 494.9L998.3 499.2L995.3 503.2L992.5 501.6L989.7 498.0L986.7 480.0L984.8 464.2L982.1 473.1L979.8 489.5L977.4 483.9L975.1 490.4L972.8 501.7L971.2 499.9L968.2 497.2L965.4 487.0L963.6 496.0L961.2 483.0L958.9 469.6L957.1 459.6L955.5 476.9L953.1 494.7L950.8 463.9L948.5 458.8L945.0 449.6L942.0 448.3L939.3 447.4Z" fill="#EAB839" fill-opacity="0.1"/>
<path d="M939.3 296.3L942.0 294.7L945.0 303.3L948.5 318.7L950.8 362.3L953.1 440.8L955.5 390.4L957.1 329.9L958.9 352.2L961.2 407.9L963.6 455.7L965.4 411.9L968.2 444.9L971.2 458.6L972.8 472.9L975.1 446.1L977.4 434.6L979.8 431.5L982.1 390.4L984.8 356.2L986.7 421.5L989.7 462.9L992.5 462.9L995.3 471.6L998.3 463.5L1002.2 457.9L1005.2 461.1L1008.7 478.6L1011.5 464.7L1014.5 459.4L1017.9 461.1L1021.4 473.7L1024.9 462.4L1027.7 458.0L1029.5 434.4L1033.0 465.3L1036.0 472.8L1038.8 425.2L1041.1 370.3L1042.7 329.3L1045.7 345.3L1048.0 325.8L1051.5 319.8L1053.8 348.0L1056.1 374.4L1058.0 367.8L1059.6 431.2L1061.4 480.0L1064.2 429.0L1066.5 369.9L1070.7 342.0L1073.5 355.7L1075.8 379.9L1079.3 416.7L1081.6 355.4L1083.2 326.5L1086.2 347.0L1090.1 304.8L1092.7 330.1L1094.8 374.0L1096.6 445.1L1100.1 475.0L1102.4 477.9L1105.2 418.3L1108.2 438.8L1111.7 431.3L1115.1 387.6L1117.9 419.4L1122.1 408.8L1124.4 421.4L1127.2 366.0L1130.9 358.8L1133.6 392.3L1137.1 412.0L1139.4 428.6L1141.7 390.7L1144.0 397.0L1147.5 372.8L1149.8 391.1L1153.3 423.0L1155.6 445.2L1157.9 424.4L1160.9 371.2L1163.7 384.2L1166.0 372.9L1169.5 306.3L1172.5 366.1L1175.3 389.9L1177.6 375.0L1179.9 351.0L1183.4 364.1L1186.4 357.6L1188.7 364.2L1191.0 405.1L1195.0 376.9L1198.0 428.9L1200.7 459.2L1204.2 455.5L1207.7 444.7L1211.2 448.9L1214.6 457.4L1219.3 429.4L1223.9 423.9L1227.8 401.5L1230.1 405.1L1233.1 442.5L1236.6 472.0L1238.9 429.8L1240.8 404.1L1243.6 432.3L1248.9 373.6L1251.7 447.3L1256.3 461.8L1260.9 473.6L1265.5 471.0L1267.9 416.7L1270.2 391.3L1272.5 416.9L1274.8 407.2L1278.3 418.9L1281.3 443.8L1285.2 386.4L1288.7 385.9L1291.7 371.6L1294.5 398.4L1296.8 392.2L1299.8 410.9L1302.6 393.5L1306.0 429.0L1309.5 439.5L1313.4 384.5L1316.4 418.5L1318.8 460.3L1322.2 426.2L1325.7 391.1L1328.5 380.7L1331.5 398.2L1334.5 382.7L1337.3 414.1L1341.2 397.5L1344.2 427.2L1346.5 478.7L1350.0 407.6L1353.0 327.2L1355.8 300.0L1358.8 349.8L1362.3 307.9L1364.6 323.3L1366.9 302.5L1368.5 361.6L1370.8 408.9L1373.1 456.2L1376.6 463.7L1380.1 448.1L1382.4 461.7L1385.4 446.9L1388.2 426.4L1391.0 357.7L1393.5 358.2L1395.6 414.1L1397.4 458.0L1402.1 467.3L1405.5 473.2L1409.0 466.5L1411.3 467.8L1414.8 463.8L1418.3 471.4L1422.9 456.7L1427.5 451.5L1431.0 439.5L1434.5 452.0L1439.1 471.6L1441.4 425.7L1444.2 366.4L1448.3 398.7L1451.8 393.8L1454.8 368.8L1457.6 385.2L1459.9 442.5L1463.4 385.2L1468.0 333.0L1471.5 356.2L1474.3 376.0L1477.3 384.3L1479.6 402.6L1483.1 381.7L1487.7 336.9L1489.7 378.6L1491.6 428.1L1494.3 386.1L1497.4 422.8L1500.1 373.9L1503.1 392.7L1506.6 399.5L1510.1 417.1L1513.1 373.1L1515.9 380.2L1518.9 421.1L1521.7 376.3L1524.0 443.6L1526.3 461.0L1529.8 466.2L1532.8 474.5L1536.7 472.6L1539.7 475.3L1542.5 474.4L1545.3 428.5L1547.1 399.4L1549.4 441.9L1552.2 458.3L1555.9 456.7L1559.8 447.1L1562.1 454.3L1564.9 409.8L1567.5 457.8L1571.4 475.8L1573.7 443.0L1575.3 410.6L1578.3 413.1L1581.4 360.5L1583.4 390.2L1585.3 471.1L1587.6 300.9L1590.6 308.7L1593.4 337.9L1595.7 391.8L1598.0 338.3L1600.8 308.8L1603.1 363.8L1605.0 423.4L1608.4 345.3L1611.9 307.7L1614.9 340.5L1618.1 348.1L1621.2 318.8L1623.0 313.3L1626.2 329.6L1629.3 357.9L1631.6 360.6L1635.0 364.3L1638.5 377.4L1640.8 402.9L1642.7 435.3L1644.8 363.4L1646.1 349.6L1648.9 411.7L1652.4 337.9L1654.7 308.2L1657.7 342.2L1660.5 373.8L1662.8 402.2L1665.8 379.1L1667.9 385.1L1670.2 455.1L1672.1 405.8L1675.5 416.2L1679.0 390.8L1682.5 367.8L1684.8 381.5L1687.1 387.0L1689.4 396.4L1691.7 408.2L1695.2 401.5L1697.5 384.6L1699.8 410.0L1703.3 391.5L1706.8 398.2L1709.8 394.6L1711.4 341.1L1713.0 316.4L1716.0 356.2L1718.3 407.2L1720.7 468.0L1723.0 424.4L1725.3 358.4L1728.1 376.0L1731.1 419.0L1733.4 375.5L1735.7 355.7L1738.7 366.2L1741.0 400.1L1745.0 343.0L1747.3 367.0L1749.6 376.0L1751.9 387.1L1753.5 389.1L1756.5 396.9L1760.0 412.0L1762.3 339.8L1764.2 302.8L1766.9 321.7L1769.3 365.6L1772.7 311.7L1775.7 345.4L1778.5 380.9L1781.5 319.2L1783.8 327.5L1786.6 384.5L1790.1 424.9L1793.6 383.0L1796.6 340.2L1798.9 352.0L1800.5 393.6L1802.8 448.9L1805.1 403.2L1807.0 376.0L1809.8 392.5L1812.1 449.0L1815.5 467.2L1817.9 445.4L1819.7 419.6L1822.5 436.7L1824.8 461.9L1828.3 461.2L1830.6 452.4L1832.9 438.7L1835.2 458.7L1838.7 461.9L1842.1 464.6L1845.2 431.1L1847.9 384.4L1850.2 405.2L1852.6 439.6L1856.0 469.9L1859.5 447.7L1863.0 404.1L1865.3 443.7L1868.8 453.8L1872.2 469.2L1875.7 473.0L1879.6 474.3L1882.2 400.9L1885.0 461.0L1887.3 416.9L1889.6 409.2L1892.6 395.2L1894.9 422.0L1897.7 375.9L1900.0 429.1L1903.5 376.8L1906.9 410.6L1910.4 423.6L1912.7 430.9L1916.7 413.3L1919.7 432.8L1923.1 455.4L1925.5 447.6L1927.8 422.2L1930.1 453.4L1934.0 388.6L1937.0 399.2L1939.3 408.7L1941.7 429.5L1945.1 422.7L1948.6 469.1L1952.1 458.9L1954.4 421.5L1956.7 442.6L1959.7 413.3L1961.3 465.6L1964.8 465.8L1968.3 470.8L1971.7 478.8L1974.0 459.2L1977.5 458.8L1981.0 390.3L1983.3 348.0L1985.6 342.6L1987.9 359.1L1990.2 397.1L1993.3 412.1L1996.0 321.2L1998.3 342.5L2000.7 382.7L2003.4 437.3L2006.4 338.8L2008.8 389.5L2011.1 427.2L2014.5 423.6L2016.9 432.1L2021.5 419.6L2023.8 381.0L2027.3 319.4L2029.6 344.0L2031.9 365.3L2035.4 339.8L2038.8 341.4L2041.2 406.6L2043.5 409.6L2046.9 438.7L2050.2 457.1L2052.5 464.5L2054.7 395.1L2056.5 356.6L2059.2 365.4L2061.5 422.8L2063.7 424.6L2067.1 438.2L2070.0 434.1L2072.7 401.3L2075.0 404.6L2077.2 384.9L2079.9 386.4L2082.2 388.5L2084.6 418.8L2086.2 413.9L2088.5 435.3L2090.3 407.3L2093.0 424.5L2095.2 368.1L2097.0 423.5L2099.3 468.8L2102.0 391.8L2104.2 371.3L2107.6 367.6L2109.8 374.7L2112.8 373.2L2115.5 373.5L2117.7 379.1L2120.0 388.9L2122.2 376.5L2124.4 411.9L2127.8 435.2L2131.2 451.0L2134.6 460.4L2137.9 465.1L2141.3 458.5L2143.6 471.1L2146.5 427.2L2149.2 421.2L2151.4 415.1L2153.7 446.2L2155.3 404.2L2158.2 436.4L2160.4 426.5L2163.8 380.7L2166.1 424.1L2168.3 427.3L2171.2 454.5L2173.9 463.2L2176.6 406.4L2179.5 438.4L2181.8 452.8L2184.0 442.0L2187.4 446.0L2190.8 466.4L2195.3 466.9L2199.8 449.6L2202.7 446.6L2206.5 457.8L2211.0 475.8L2216.7 471.0L2218.9 400.9L2221.1 405.5L2223.8 430.0L2226.3 451.6L2229.0 426.1L2232.4 410.3L2234.6 449.1L2238.0 417.7L2240.7 406.9L2243.6 428.6L2246.3 454.5L2249.3 447.1L2252.0 411.2L2254.9 439.3L2258.3 463.2L2262.8 469.7L2267.2 450.6L2270.6 449.6L2274.0 417.9L2277.4 408.3L2280.3 427.7L2281.9 376.6L2284.1 369.4L2286.4 469.1L2289.7 463.5L2292.0 468.1L2295.4 461.6L2298.7 475.6L2301.0 452.9L2303.2 468.0L2307.7 455.1L2310.0 425.3L2313.3 396.1L2316.0 351.4L2318.5 427.3L2321.2 466.0L2324.6 451.8L2328.0 439.5L2331.3 414.2L2334.7 425.2L2338.1 465.0L2339.9 475.0L2342.1 412.1L2344.8 433.2L2347.5 339.6L2350.5 321.3L2352.7 315.2L2355.0 303.4L2357.2 325.7L2359.4 466.0L2361.7 402.7L2363.5 358.3L2366.2 425.8L2369.6 461.1L2371.8 409.8L2374.1 388.3L2376.3 425.4L2378.6 395.6L2381.3 457.3L2384.2 357.4L2387.6 314.6L2390.9 315.0L2393.6 291.6L2395.9 365.8L2397.7 325.2L2399.9 330.4L2402.2 354.6L2405.6 408.8L2408.9 475.7L2410.7 416.3L2413.0 453.6L2416.8 373.3L2420.2 423.7L2423.5 437.9L2426.9 451.6L2430.3 443.2L2433.7 442.2L2436.4 431.9L2438.2 446.1L2440.4 445.2L2443.8 467.6L2447.2 444.8L2450.5 383.6L2453.2 423.9L2455.7 391.6L2458.4 415.3L2460.6 409.2L2462.9 405.4L2466.3 407.4L2469.6 426.3L2473.5 438.7L2477.5 471.0L2480.9 454.2L2483.8 448.9L2483.8 476.9L2480.9 473.4L2477.5 485.0L2473.5 460.6L2469.6 459.9L2466.3 445.0L2462.9 443.8L2460.6 444.4L2458.4 450.5L2455.7 435.7L2453.2 459.4L2450.5 432.5L2447.2 472.4L2443.8 490.3L2440.4 475.5L2438.2 476.0L2436.4 465.4L2433.7 470.1L2430.3 469.6L2426.9 475.4L2423.5 468.9L2420.2 457.6L2416.8 429.3L2413.0 475.3L2410.7 451.4L2408.9 493.1L2405.6 451.2L2402.2 410.3L2399.9 395.9L2397.7 387.5L2395.9 410.5L2393.6 364.5L2390.9 373.4L2387.6 386.6L2384.2 407.8L2381.3 473.5L2378.6 436.3L2376.3 456.1L2374.1 420.4L2371.8 442.8L2369.6 477.8L2366.2 450.5L2363.5 413.0L2361.7 440.8L2359.4 484.6L2357.2 384.4L2355.0 375.1L2352.7 373.4L2350.5 379.8L2347.5 398.6L2344.8 462.3L2342.1 442.2L2339.9 488.4L2338.1 478.7L2334.7 456.6L2331.3 448.9L2328.0 465.7L2324.6 475.0L2321.2 482.8L2318.5 454.9L2316.0 409.8L2313.3 438.0L2310.0 460.6L2307.7 477.7L2303.2 483.2L2301.0 479.2L2298.7 492.0L2295.4 482.3L2292.0 483.2L2289.7 480.0L2286.4 482.0L2284.1 424.6L2281.9 424.1L2280.3 459.6L2277.4 446.3L2274.0 454.5L2270.6 470.8L2267.2 473.3L2262.8 487.7L2258.3 481.9L2254.9 466.0L2252.0 440.1L2249.3 474.2L2246.3 472.2L2243.6 454.9L2240.7 438.4L2238.0 449.8L2234.6 473.0L2232.4 443.0L2229.0 450.6L2226.3 472.4L2223.8 460.8L2221.1 447.4L2218.9 434.5L2216.7 487.2L2211.0 490.1L2206.5 477.2L2202.7 474.2L2199.8 469.9L2195.3 485.9L2190.8 487.3L2187.4 472.7L2184.0 470.2L2181.8 475.9L2179.5 471.3L2176.6 451.4L2173.9 483.9L2171.2 478.4L2168.3 461.0L2166.1 455.2L2163.8 434.0L2160.4 459.0L2158.2 463.1L2155.3 443.3L2153.7 471.9L2151.4 454.6L2149.2 452.5L2146.5 462.3L2143.6 486.6L2141.3 476.7L2137.9 483.2L2134.6 478.7L2131.2 472.9L2127.8 461.0L2124.4 446.4L2122.2 432.2L2120.0 427.2L2117.7 432.8L2115.5 428.7L2112.8 432.0L2109.8 417.3L2107.6 417.0L2104.2 424.9L2102.0 430.6L2099.3 488.9L2097.0 460.0L2095.2 414.2L2093.0 460.5L2090.3 447.2L2088.5 464.1L2086.2 453.4L2084.6 453.8L2082.2 425.5L2079.9 431.3L2077.2 425.1L2075.0 441.0L2072.7 440.2L2070.0 458.9L2067.1 462.8L2063.7 455.1L2061.5 451.3L2059.2 407.8L2056.5 400.3L2054.7 432.5L2052.5 479.6L2050.2 474.1L2046.9 467.9L2043.5 441.1L2041.2 443.4L2038.8 407.6L2035.4 393.0L2031.9 408.3L2029.6 406.1L2027.3 388.2L2023.8 430.6L2021.5 454.7L2016.9 465.5L2014.5 456.4L2011.1 460.3L2008.8 431.0L2006.4 404.1L2003.4 466.6L2000.7 428.4L1998.3 396.7L1996.0 397.7L1993.3 447.3L1990.2 434.4L1987.9 406.4L1985.6 397.9L1983.3 411.6L1981.0 429.3L1977.5 476.2L1974.0 481.5L1971.7 492.0L1968.3 485.4L1964.8 485.5L1961.3 484.3L1959.7 451.6L1956.7 472.8L1954.4 458.5L1952.1 481.5L1948.6 490.3L1945.1 458.9L1941.7 459.6L1939.3 444.3L1937.0 439.9L1934.0 435.2L1930.1 476.1L1927.8 455.2L1925.5 470.1L1923.1 477.0L1919.7 463.8L1916.7 448.6L1912.7 461.5L1910.4 455.7L1906.9 445.1L1903.5 419.5L1900.0 459.6L1897.7 430.8L1894.9 455.4L1892.6 438.2L1889.6 448.1L1887.3 456.3L1885.0 485.1L1882.2 441.3L1879.6 492.5L1875.7 489.3L1872.2 486.1L1868.8 473.4L1865.3 469.3L1863.0 451.2L1859.5 469.6L1856.0 483.4L1852.6 466.5L1850.2 437.4L1847.9 429.8L1845.2 455.0L1842.1 481.4L1838.7 480.7L1835.2 476.0L1832.9 467.3L1830.6 477.4L1828.3 482.2L1824.8 481.8L1822.5 466.7L1819.7 455.7L1817.9 467.1L1815.5 482.7L1812.1 471.4L1809.8 428.4L1807.0 415.6L1805.1 438.7L1802.8 468.6L1800.5 436.6L1798.9 396.5L1796.6 393.5L1793.6 430.1L1790.1 457.0L1786.6 430.6L1783.8 387.9L1781.5 395.6L1778.5 432.4L1775.7 408.7L1772.7 378.8L1769.3 417.7L1766.9 400.5L1764.2 377.2L1762.3 396.1L1760.0 444.9L1756.5 432.5L1753.5 427.4L1751.9 435.2L1749.6 422.2L1747.3 418.9L1745.0 399.5L1741.0 442.3L1738.7 412.7L1735.7 408.5L1733.4 424.3L1731.1 452.1L1728.1 425.0L1725.3 407.9L1723.0 459.1L1720.7 488.6L1718.3 448.7L1716.0 405.5L1713.0 384.8L1711.4 408.1L1709.8 429.4L1706.8 435.1L1703.3 438.0L1699.8 446.0L1697.5 434.8L1695.2 442.1L1691.7 444.2L1689.4 439.0L1687.1 431.8L1684.8 424.9L1682.5 415.9L1679.0 430.0L1675.5 446.2L1672.1 440.6L1670.2 472.9L1667.9 423.6L1665.8 428.3L1662.8 444.1L1660.5 422.4L1657.7 401.6L1654.7 383.2L1652.4 394.9L1648.9 450.1L1646.1 410.2L1644.8 417.9L1642.7 463.2L1640.8 443.7L1638.5 421.1L1635.0 422.4L1631.6 413.4L1629.3 407.1L1626.2 394.8L1623.0 377.4L1621.2 389.4L1618.1 402.3L1614.9 390.6L1611.9 376.3L1608.4 401.4L1605.0 452.3L1603.1 410.6L1600.8 369.3L1598.0 402.0L1595.7 432.4L1593.4 399.5L1590.6 380.3L1587.6 382.1L1585.3 488.7L1583.4 443.5L1581.4 412.3L1578.3 447.7L1575.3 445.9L1573.7 471.4L1571.4 489.1L1567.5 479.1L1564.9 442.5L1562.1 478.5L1559.8 472.9L1555.9 475.0L1552.2 478.0L1549.4 465.3L1547.1 441.1L1545.3 456.9L1542.5 488.5L1539.7 489.7L1536.7 487.7L1532.8 492.6L1529.8 485.5L1526.3 483.7L1524.0 469.0L1521.7 430.2L1518.9 458.2L1515.9 435.4L1513.1 419.4L1510.1 455.7L1506.6 433.1L1503.1 440.8L1500.1 429.1L1497.4 452.8L1494.3 426.6L1491.6 451.6L1489.7 421.8L1487.7 382.6L1483.1 423.4L1479.6 444.4L1477.3 422.4L1474.3 423.1L1471.5 412.6L1468.0 402.2L1463.4 428.8L1459.9 466.7L1457.6 429.4L1454.8 418.9L1451.8 432.0L1448.3 442.3L1444.2 421.9L1441.4 460.5L1439.1 485.0L1434.5 474.8L1431.0 466.6L1427.5 470.0L1422.9 474.9L1418.3 487.0L1414.8 479.3L1411.3 484.0L1409.0 479.4L1405.5 486.7L1402.1 484.3L1397.4 478.3L1395.6 452.7L1393.5 410.1L1391.0 407.4L1388.2 460.2L1385.4 471.6L1382.4 484.5L1380.1 470.0L1376.6 482.5L1373.1 476.7L1370.8 444.6L1368.5 410.0L1366.9 380.2L1364.6 388.7L1362.3 371.6L1358.8 400.0L1355.8 372.0L1353.0 396.3L1350.0 451.6L1346.5 492.1L1344.2 460.6L1341.2 434.6L1337.3 444.3L1334.5 430.1L1331.5 433.6L1328.5 423.5L1325.7 429.8L1322.2 456.3L1318.8 479.4L1316.4 456.9L1313.4 433.0L1309.5 465.4L1306.0 455.0L1302.6 438.3L1299.8 446.9L1296.8 439.5L1294.5 433.4L1291.7 417.5L1288.7 426.0L1285.2 427.7L1281.3 471.0L1278.3 456.2L1274.8 446.1L1272.5 456.0L1270.2 430.2L1267.9 453.2L1265.5 484.8L1260.9 486.2L1256.3 480.1L1251.7 466.4L1248.9 420.0L1243.6 460.9L1240.8 444.4L1238.9 459.1L1236.6 490.7L1233.1 468.3L1230.1 445.2L1227.8 432.2L1223.9 453.4L1219.3 457.0L1214.6 476.5L1211.2 473.4L1207.7 465.7L1204.2 480.5L1200.7 478.0L1198.0 460.2L1195.0 419.5L1191.0 434.9L1188.7 413.5L1186.4 410.4L1183.4 411.9L1179.9 398.9L1177.6 423.4L1175.3 431.2L1172.5 409.0L1169.5 383.4L1166.0 422.1L1163.7 429.0L1160.9 423.7L1157.9 451.6L1155.6 469.3L1153.3 458.5L1149.8 432.3L1147.5 422.8L1144.0 439.1L1141.7 443.6L1139.4 457.8L1137.1 446.0L1133.6 433.7L1130.9 412.7L1127.2 420.6L1124.4 451.6L1122.1 452.1L1117.9 455.7L1115.1 445.6L1111.7 463.2L1108.2 465.4L1105.2 450.9L1102.4 490.2L1100.1 490.3L1096.6 469.2L1094.8 426.0L1092.7 385.0L1090.1 374.8L1086.2 408.1L1083.2 393.0L1081.6 412.0L1079.3 458.7L1075.8 431.3L1073.5 415.1L1070.7 400.1L1066.5 421.0L1064.2 460.9L1061.4 493.3L1059.6 457.7L1058.0 420.9L1056.1 425.2L1053.8 396.2L1051.5 380.8L1048.0 394.1L1045.7 404.4L1042.7 399.8L1041.1 421.9L1038.8 461.4L1036.0 487.3L1033.0 483.9L1029.5 462.0L1027.7 476.7L1024.9 478.6L1021.4 488.9L1017.9 477.0L1014.5 473.1L1011.5 479.7L1008.7 489.6L1005.2 481.3L1002.2 475.6L998.3 483.3L995.3 486.3L992.5 480.7L989.7 482.8L986.7 453.1L984.8 417.0L982.1 430.4L979.8 458.3L977.4 459.5L975.1 468.6L972.8 490.4L971.2 478.7L968.2 469.0L965.4 447.7L963.6 476.6L961.2 447.8L958.9 409.7L957.1 389.2L955.5 430.5L953.1 467.1L950.8 412.4L948.5 382.6L945.0 380.8L942.0 369.9L939.3 378.4Z" fill="#6ED0E0" fill-opacity="0.1"/>
<path d="M939.3 225.9L942.0 221.2L945.0 236.3L948.5 257.1L950.8 310.3L953.1 416.8L955.5 352.0L957.1 260.6L958.9 301.1L961.2 372.8L963.6 435.3L965.4 379.8L968.2 423.7L971.2 442.2L972.8 458.4L975.1 421.4L977.4 402.9L979.8 398.3L982.1 338.1L984.8 302.2L986.7 382.1L989.7 442.2L992.5 446.9L995.3 457.3L998.3 444.5L1002.2 434.1L1005.2 442.2L1008.7 463.1L1011.5 446.9L1014.5 435.3L1017.9 444.5L1021.4 458.4L1024.9 439.9L1027.7 438.8L1029.5 408.7L1033.0 451.5L1036.0 460.7L1038.8 398.3L1041.1 319.6L1042.7 271.0L1045.7 289.5L1048.0 264.0L1051.5 244.4L1053.8 277.9L1056.1 318.4L1058.0 317.3L1059.6 398.3L1061.4 464.2L1064.2 398.3L1066.5 328.8L1070.7 281.4L1073.5 298.8L1075.8 338.1L1079.3 386.7L1081.6 305.7L1083.2 265.2L1086.2 284.9L1090.1 235.1L1092.7 259.4L1094.8 328.8L1096.6 421.4L1100.1 458.4L1102.4 463.1L1105.2 386.7L1108.2 409.8L1111.7 405.2L1115.1 352.0L1117.9 389.0L1122.1 379.8L1124.4 389.0L1127.2 319.6L1130.9 309.2L1133.6 352.0L1137.1 382.1L1139.4 402.9L1141.7 358.9L1144.0 356.6L1147.5 328.8L1149.8 347.4L1153.3 398.3L1155.6 421.4L1157.9 391.3L1160.9 325.4L1163.7 342.7L1166.0 328.8L1169.5 238.6L1172.5 305.7L1175.3 347.4L1177.6 319.6L1179.9 291.8L1183.4 308.0L1186.4 294.1L1188.7 303.4L1191.0 361.2L1195.0 325.4L1198.0 398.3L1200.7 436.4L1204.2 435.3L1207.7 417.9L1211.2 423.7L1214.6 435.3L1219.3 402.9L1223.9 391.3L1227.8 356.6L1230.1 370.5L1233.1 421.4L1236.6 458.4L1238.9 398.3L1240.8 371.7L1243.6 407.5L1248.9 324.2L1251.7 421.4L1256.3 439.9L1260.9 458.4L1265.5 451.5L1267.9 386.7L1270.2 347.4L1272.5 389.0L1274.8 375.1L1278.3 389.0L1281.3 421.4L1285.2 338.1L1288.7 335.8L1291.7 320.7L1294.5 347.4L1296.8 347.4L1299.8 375.1L1302.6 352.0L1306.0 393.6L1309.5 407.5L1313.4 343.9L1316.4 391.3L1318.8 439.9L1322.2 398.3L1325.7 342.7L1328.5 335.8L1331.5 356.6L1334.5 339.3L1337.3 375.1L1341.2 356.6L1344.2 398.3L1346.5 463.1L1350.0 375.1L1353.0 259.4L1355.8 235.1L1358.8 287.2L1362.3 232.8L1364.6 247.9L1366.9 236.3L1368.5 305.7L1370.8 370.5L1373.1 430.7L1376.6 442.2L1380.1 423.7L1382.4 444.5L1385.4 423.7L1388.2 398.3L1391.0 304.5L1393.5 310.3L1395.6 382.1L1397.4 435.3L1402.1 449.2L1405.5 459.6L1409.0 444.5L1411.3 452.6L1414.8 443.4L1418.3 457.3L1422.9 433.0L1427.5 426.0L1431.0 415.6L1434.5 428.3L1439.1 453.8L1441.4 398.3L1444.2 320.7L1448.3 358.9L1451.8 347.4L1454.8 321.9L1457.6 335.8L1459.9 414.5L1463.4 340.4L1468.0 266.4L1471.5 294.1L1474.3 331.2L1477.3 333.5L1479.6 365.9L1483.1 333.5L1487.7 271.0L1489.7 338.1L1491.6 396.0L1494.3 335.8L1497.4 393.6L1500.1 332.3L1503.1 356.6L1506.6 354.3L1510.1 389.0L1513.1 317.3L1515.9 338.1L1518.9 386.7L1521.7 336.9L1524.0 421.4L1526.3 439.9L1529.8 451.5L1532.8 460.7L1536.7 453.8L1539.7 458.4L1542.5 456.1L1545.3 393.6L1547.1 364.7L1549.4 416.8L1552.2 434.1L1555.9 433.0L1559.8 426.0L1562.1 430.7L1564.9 371.7L1567.5 435.3L1571.4 463.1L1573.7 421.4L1575.3 367.0L1578.3 379.8L1581.4 301.1L1583.4 352.0L1585.3 456.1L1587.6 238.6L1590.6 243.2L1593.4 287.2L1595.7 347.4L1598.0 287.2L1600.8 236.3L1603.1 310.3L1605.0 393.6L1608.4 282.6L1611.9 228.2L1614.9 268.7L1618.1 289.5L1621.2 254.8L1623.0 235.1L1626.2 259.4L1629.3 301.1L1631.6 312.6L1635.0 317.3L1638.5 333.5L1640.8 370.5L1642.7 412.1L1644.8 312.6L1646.1 298.8L1648.9 377.4L1652.4 282.6L1654.7 250.2L1657.7 282.6L1660.5 326.5L1662.8 365.9L1665.8 335.8L1667.9 342.7L1670.2 433.0L1672.1 368.2L1675.5 382.1L1679.0 352.0L1682.5 320.7L1684.8 335.8L1687.1 335.8L1689.4 356.6L1691.7 372.8L1695.2 363.6L1697.5 343.9L1699.8 368.2L1703.3 356.6L1706.8 356.6L1709.8 347.4L1711.4 287.2L1713.0 247.9L1716.0 305.7L1718.3 375.1L1720.7 453.8L1723.0 398.3L1725.3 303.4L1728.1 324.2L1731.1 382.1L1733.4 333.5L1735.7 297.6L1738.7 319.6L1741.0 360.1L1745.0 281.4L1747.3 319.6L1749.6 321.9L1751.9 352.0L1753.5 343.9L1756.5 352.0L1760.0 377.4L1762.3 282.6L1764.2 224.7L1766.9 266.4L1769.3 315.0L1772.7 242.1L1775.7 291.8L1778.5 333.5L1781.5 254.8L1783.8 266.4L1786.6 338.1L1790.1 391.3L1793.6 338.1L1796.6 275.6L1798.9 289.5L1800.5 352.0L1802.8 421.4L1805.1 363.6L1807.0 318.4L1809.8 347.4L1812.1 421.4L1815.5 449.2L1817.9 421.4L1819.7 390.2L1822.5 412.1L1824.8 439.9L1828.3 442.2L1830.6 430.7L1832.9 411.0L1835.2 435.3L1838.7 444.5L1842.1 449.2L1845.2 398.3L1847.9 340.4L1850.2 365.9L1852.6 412.1L1856.0 451.5L1859.5 421.4L1863.0 372.8L1865.3 421.4L1868.8 430.7L1872.2 451.5L1875.7 460.7L1879.6 461.9L1882.2 365.9L1885.0 444.5L1887.3 384.4L1889.6 368.2L1892.6 353.1L1894.9 389.0L1897.7 333.5L1900.0 398.3L1903.5 317.3L1906.9 368.2L1910.4 389.0L1912.7 398.3L1916.7 370.5L1919.7 398.3L1923.1 435.3L1925.5 421.4L1927.8 390.2L1930.1 430.7L1934.0 349.7L1937.0 363.6L1939.3 375.1L1941.7 402.9L1945.1 398.3L1948.6 456.1L1952.1 439.9L1954.4 396.0L1956.7 421.4L1959.7 377.4L1961.3 449.2L1964.8 449.2L1968.3 456.1L1971.7 463.1L1974.0 441.1L1977.5 435.3L1981.0 338.1L1983.3 294.1L1985.6 280.2L1987.9 294.1L1990.2 352.0L1993.3 377.4L1996.0 262.9L1998.3 287.2L2000.7 340.4L2003.4 409.8L2006.4 288.3L2008.8 352.0L2011.1 398.3L2014.5 393.6L2016.9 407.5L2021.5 391.3L2023.8 338.1L2027.3 251.3L2029.6 294.1L2031.9 310.3L2035.4 279.1L2038.8 287.2L2041.2 367.7L2043.5 374.4L2046.9 414.9L2050.2 432.9L2052.5 445.2L2054.7 347.4L2056.5 295.7L2059.2 302.4L2061.5 385.6L2063.7 396.9L2067.1 409.3L2070.0 405.9L2072.7 363.2L2075.0 363.2L2077.2 342.9L2079.9 345.2L2082.2 340.7L2084.6 387.9L2086.2 381.1L2088.5 408.1L2090.3 367.7L2093.0 392.4L2095.2 312.6L2097.0 392.4L2099.3 455.4L2102.0 347.4L2104.2 322.7L2107.6 315.9L2109.8 324.9L2112.8 333.9L2115.5 333.9L2117.7 340.7L2120.0 342.9L2122.2 337.3L2124.4 381.1L2127.8 405.9L2131.2 428.4L2134.6 444.1L2137.9 446.4L2141.3 437.4L2143.6 455.4L2146.5 401.4L2149.2 385.6L2151.4 381.1L2153.7 421.6L2155.3 359.8L2158.2 405.9L2160.4 392.4L2163.8 340.7L2166.1 394.6L2168.3 396.9L2171.2 437.4L2173.9 441.9L2176.6 373.3L2179.5 414.9L2181.8 432.9L2184.0 419.4L2187.4 419.4L2190.8 448.6L2195.3 449.7L2199.8 426.1L2202.7 426.1L2206.5 439.6L2211.0 459.9L2216.7 453.1L2218.9 356.4L2221.1 367.7L2223.8 401.4L2226.3 431.7L2229.0 392.4L2232.4 373.3L2234.6 426.1L2238.0 385.6L2240.7 372.2L2243.6 403.6L2246.3 432.9L2249.3 428.4L2252.0 374.4L2254.9 414.9L2258.3 448.6L2262.8 455.4L2267.2 428.4L2270.6 428.4L2274.0 383.4L2277.4 372.2L2280.3 396.9L2281.9 322.7L2284.1 321.6L2286.4 450.9L2289.7 441.9L2292.0 450.9L2295.4 444.1L2298.7 459.9L2301.0 432.9L2303.2 448.6L2307.7 437.4L2310.0 394.6L2313.3 351.9L2316.0 300.2L2318.5 392.4L2321.2 450.9L2324.6 428.4L2328.0 414.9L2331.3 372.2L2334.7 392.4L2338.1 444.1L2339.9 459.9L2342.1 374.4L2344.8 401.4L2347.5 282.2L2350.5 262.0L2352.7 242.8L2355.0 242.8L2357.2 255.2L2359.4 450.9L2361.7 369.9L2363.5 313.7L2366.2 392.4L2369.6 437.4L2371.8 369.9L2374.1 335.0L2376.3 392.4L2378.6 342.9L2381.3 432.9L2384.2 302.4L2387.6 250.7L2390.9 239.5L2393.6 221.5L2395.9 306.9L2397.7 262.0L2399.9 268.7L2402.2 295.7L2405.6 369.9L2408.9 459.9L2410.7 385.6L2413.0 428.4L2416.8 329.4L2420.2 387.9L2423.5 414.9L2426.9 428.4L2430.3 414.9L2433.7 419.4L2436.4 408.1L2438.2 423.9L2440.4 421.6L2443.8 453.1L2447.2 419.4L2450.5 344.0L2453.2 392.4L2455.7 345.2L2458.4 378.9L2460.6 367.7L2462.9 369.9L2466.3 366.5L2469.6 399.1L2473.5 405.9L2477.5 450.9L2480.9 428.4L2483.8 423.9L2483.8 448.9L2480.9 454.2L2477.5 471.0L2473.5 438.7L2469.6 426.3L2466.3 407.4L2462.9 405.4L2460.6 409.2L2458.4 415.3L2455.7 391.6L2453.2 423.9L2450.5 383.6L2447.2 444.8L2443.8 467.6L2440.4 445.2L2438.2 446.1L2436.4 431.9L2433.7 442.2L2430.3 443.2L2426.9 451.6L2423.5 437.9L2420.2 423.7L2416.8 373.3L2413.0 453.6L2410.7 416.3L2408.9 475.7L2405.6 408.8L2402.2 354.6L2399.9 330.4L2397.7 325.2L2395.9 365.8L2393.6 291.6L2390.9 315.0L2387.6 314.6L2384.2 357.4L2381.3 457.3L2378.6 395.6L2376.3 425.4L2374.1 388.3L2371.8 409.8L2369.6 461.1L2366.2 425.8L2363.5 358.3L2361.7 402.7L2359.4 466.0L2357.2 325.7L2355.0 303.4L2352.7 315.2L2350.5 321.3L2347.5 339.6L2344.8 433.2L2342.1 412.1L2339.9 475.0L2338.1 465.0L2334.7 425.2L2331.3 414.2L2328.0 439.5L2324.6 451.8L2321.2 466.0L2318.5 427.3L2316.0 351.4L2313.3 396.1L2310.0 425.3L2307.7 455.1L2303.2 468.0L2301.0 452.9L2298.7 475.6L2295.4 461.6L2292.0 468.1L2289.7 463.5L2286.4 469.1L2284.1 369.4L2281.9 376.6L2280.3 427.7L2277.4 408.3L2274.0 417.9L2270.6 449.6L2267.2 450.6L2262.8 469.7L2258.3 463.2L2254.9 439.3L2252.0 411.2L2249.3 447.1L2246.3 454.5L2243.6 428.6L2240.7 406.9L2238.0 417.7L2234.6 449.1L2232.4 410.3L2229.0 426.1L2226.3 451.6L2223.8 430.0L2221.1 405.5L2218.9 400.9L2216.7 471.0L2211.0 475.8L2206.5 457.8L2202.7 446.6L2199.8 449.6L2195.3 466.9L2190.8 466.4L2187.4 446.0L2184.0 442.0L2181.8 452.8L2179.5 438.4L2176.6 406.4L2173.9 463.2L2171.2 454.5L2168.3 427.3L2166.1 424.1L2163.8 380.7L2160.4 426.5L2158.2 436.4L2155.3 404.2L2153.7 446.2L2151.4 415.1L2149.2 421.2L2146.5 427.2L2143.6 471.1L2141.3 458.5L2137.9 465.1L2134.6 460.4L2131.2 451.0L2127.8 435.2L2124.4 411.9L2122.2 376.5L2120.0 388.9L2117.7 379.1L2115.5 373.5L2112.8 373.2L2109.8 374.7L2107.6 367.6L2104.2 371.3L2102.0 391.8L2099.3 468.8L2097.0 423.5L2095.2 368.1L2093.0 424.5L2090.3 407.3L2088.5 435.3L2086.2 413.9L2084.6 418.8L2082.2 388.5L2079.9 386.4L2077.2 384.9L2075.0 404.6L2072.7 401.3L2070.0 434.1L2067.1 438.2L2063.7 424.6L2061.5 422.8L2059.2 365.4L2056.5 356.6L2054.7 395.1L2052.5 464.5L2050.2 457.1L2046.9 438.7L2043.5 409.6L2041.2 406.6L2038.8 341.4L2035.4 339.8L2031.9 365.3L2029.6 344.0L2027.3 319.4L2023.8 381.0L2021.5 419.6L2016.9 432.1L2014.5 423.6L2011.1 427.2L2008.8 389.5L2006.4 338.8L2003.4 437.3L2000.7 382.7L1998.3 342.5L1996.0 321.2L1993.3 412.1L1990.2 397.1L1987.9 359.1L1985.6 342.6L1983.3 348.0L1981.0 390.3L1977.5 458.8L1974.0 459.2L1971.7 478.8L1968.3 470.8L1964.8 465.8L1961.3 465.6L1959.7 413.3L1956.7 442.6L1954.4 421.5L1952.1 458.9L1948.6 469.1L1945.1 422.7L1941.7 429.5L1939.3 408.7L1937.0 399.2L1934.0 388.6L1930.1 453.4L1927.8 422.2L1925.5 447.6L1923.1 455.4L1919.7 432.8L1916.7 413.3L1912.7 430.9L1910.4 423.6L1906.9 410.6L1903.5 376.8L1900.0 429.1L1897.7 375.9L1894.9 422.0L1892.6 395.2L1889.6 409.2L1887.3 416.9L1885.0 461.0L1882.2 400.9L1879.6 474.3L1875.7 473.0L1872.2 469.2L1868.8 453.8L1865.3 443.7L1863.0 404.1L1859.5 447.7L1856.0 469.9L1852.6 439.6L1850.2 405.2L1847.9 384.4L1845.2 431.1L1842.1 464.6L1838.7 461.9L1835.2 458.7L1832.9 438.7L1830.6 452.4L1828.3 461.2L1824.8 461.9L1822.5 436.7L1819.7 419.6L1817.9 445.4L1815.5 467.2L1812.1 449.0L1809.8 392.5L1807.0 376.0L1805.1 403.2L1802.8 448.9L1800.5 393.6L1798.9 352.0L1796.6 340.2L1793.6 383.0L1790.1 424.9L1786.6 384.5L1783.8 327.5L1781.5 319.2L1778.5 380.9L1775.7 345.4L1772.7 311.7L1769.3 365.6L1766.9 321.7L1764.2 302.8L1762.3 339.8L1760.0 412.0L1756.5 396.9L1753.5 389.1L1751.9 387.1L1749.6 376.0L1747.3 367.0L1745.0 343.0L1741.0 400.1L1738.7 366.2L1735.7 355.7L1733.4 375.5L1731.1 419.0L1728.1 376.0L1725.3 358.4L1723.0 424.4L1720.7 468.0L1718.3 407.2L1716.0 356.2L1713.0 316.4L1711.4 341.1L1709.8 394.6L1706.8 398.2L1703.3 391.5L1699.8 410.0L1697.5 384.6L1695.2 401.5L1691.7 408.2L1689.4 396.4L1687.1 387.0L1684.8 381.5L1682.5 367.8L1679.0 390.8L1675.5 416.2L1672.1 405.8L1670.2 455.1L1667.9 385.1L1665.8 379.1L1662.8 402.2L1660.5 373.8L1657.7 342.2L1654.7 308.2L1652.4 337.9L1648.9 411.7L1646.1 349.6L1644.8 363.4L1642.7 435.3L1640.8 402.9L1638.5 377.4L1635.0 364.3L1631.6 360.6L1629.3 357.9L1626.2 329.6L1623.0 313.3L1621.2 318.8L1618.1 348.1L1614.9 340.5L1611.9 307.7L1608.4 345.3L1605.0 423.4L1603.1 363.8L1600.8 308.8L1598.0 338.3L1595.7 391.8L1593.4 337.9L1590.6 308.7L1587.6 300.9L1585.3 471.1L1583.4 390.2L1581.4 360.5L1578.3 413.1L1575.3 410.6L1573.7 443.0L1571.4 475.8L1567.5 457.8L1564.9 409.8L1562.1 454.3L1559.8 447.1L1555.9 456.7L1552.2 458.3L1549.4 441.9L1547.1 399.4L1545.3 428.5L1542.5 474.4L1539.7 475.3L1536.7 472.6L1532.8 474.5L1529.8 466.2L1526.3 461.0L1524.0 443.6L1521.7 376.3L1518.9 421.1L1515.9 380.2L1513.1 373.1L1510.1 417.1L1506.6 399.5L1503.1 392.7L1500.1 373.9L1497.4 422.8L1494.3 386.1L1491.6 428.1L1489.7 378.6L1487.7 336.9L1483.1 381.7L1479.6 402.6L1477.3 384.3L1474.3 376.0L1471.5 356.2L1468.0 333.0L1463.4 385.2L1459.9 442.5L1457.6 385.2L1454.8 368.8L1451.8 393.8L1448.3 398.7L1444.2 366.4L1441.4 425.7L1439.1 471.6L1434.5 452.0L1431.0 439.5L1427.5 451.5L1422.9 456.7L1418.3 471.4L1414.8 463.8L1411.3 467.8L1409.0 466.5L1405.5 473.2L1402.1 467.3L1397.4 458.0L1395.6 414.1L1393.5 358.2L1391.0 357.7L1388.2 426.4L1385.4 446.9L1382.4 461.7L1380.1 448.1L1376.6 463.7L1373.1 456.2L1370.8 408.9L1368.5 361.6L1366.9 302.5L1364.6 323.3L1362.3 307.9L1358.8 349.8L1355.8 300.0L1353.0 327.2L1350.0 407.6L1346.5 478.7L1344.2 427.2L1341.2 397.5L1337.3 414.1L1334.5 382.7L1331.5 398.2L1328.5 380.7L1325.7 391.1L1322.2 426.2L1318.8 460.3L1316.4 418.5L1313.4 384.5L1309.5 439.5L1306.0 429.0L1302.6 393.5L1299.8 410.9L1296.8 392.2L1294.5 398.4L1291.7 371.6L1288.7 385.9L1285.2 386.4L1281.3 443.8L1278.3 418.9L1274.8 407.2L1272.5 416.9L1270.2 391.3L1267.9 416.7L1265.5 471.0L1260.9 473.6L1256.3 461.8L1251.7 447.3L1248.9 373.6L1243.6 432.3L1240.8 404.1L1238.9 429.8L1236.6 472.0L1233.1 442.5L1230.1 405.1L1227.8 401.5L1223.9 423.9L1219.3 429.4L1214.6 457.4L1211.2 448.9L1207.7 444.7L1204.2 455.5L1200.7 459.2L1198.0 428.9L1195.0 376.9L1191.0 405.1L1188.7 364.2L1186.4 357.6L1183.4 364.1L1179.9 351.0L1177.6 375.0L1175.3 389.9L1172.5 366.1L1169.5 306.3L1166.0 372.9L1163.7 384.2L1160.9 371.2L1157.9 424.4L1155.6 445.2L1153.3 423.0L1149.8 391.1L1147.5 372.8L1144.0 397.0L1141.7 390.7L1139.4 428.6L1137.1 412.0L1133.6 392.3L1130.9 358.8L1127.2 366.0L1124.4 421.4L1122.1 408.8L1117.9 419.4L1115.1 387.6L1111.7 431.3L1108.2 438.8L1105.2 418.3L1102.4 477.9L1100.1 475.0L1096.6 445.1L1094.8 374.0L1092.7 330.1L1090.1 304.8L1086.2 347.0L1083.2 326.5L1081.6 355.4L1079.3 416.7L1075.8 379.9L1073.5 355.7L1070.7 342.0L1066.5 369.9L1064.2 429.0L1061.4 480.0L1059.6 431.2L1058.0 367.8L1056.1 374.4L1053.8 348.0L1051.5 319.8L1048.0 325.8L1045.7 345.3L1042.7 329.3L1041.1 370.3L1038.8 425.2L1036.0 472.8L1033.0 465.3L1029.5 434.4L1027.7 458.0L1024.9 462.4L1021.4 473.7L1017.9 461.1L1014.5 459.4L1011.5 464.7L1008.7 478.6L1005.2 461.1L1002.2 457.9L998.3 463.5L995.3 471.6L992.5 462.9L989.7 462.9L986.7 421.5L984.8 356.2L982.1 390.4L979.8 431.5L977.4 434.6L975.1 446.1L972.8 472.9L971.2 458.6L968.2 444.9L965.4 411.9L963.6 455.7L961.2 407.9L958.9 352.2L957.1 329.9L955.5 390.4L953.1 440.8L950.8 362.3L948.5 318.7L945.0 303.3L942.0 294.7L939.3 296.3Z" fill="#EF843C" fill-opacity="0.1"/>
<path d="M939.3 447.4L942.0 448.3L945.0 449.6L948.5 458.8L950.8 463.9L953.1 494.7L955.5 476.9L957.1 459.6L958.9 469.6L961.2 483.0L963.6 496.0L965.4 487.0L968.2 497.2L971.2 499.9L972.8 501.7L975.1 490.4L977.4 483.9L979.8 489.5L982.1 473.1L984.8 464.2L986.7 480.0L989.7 498.0L992.5 501.6L995.3 503.2L998.3 499.2L1002.2 494.9L1005.2 497.8L1008.7 504.7L1011.5 498.1L1014.5 496.7L1017.9 498.6L1021.4 504.0L1024.9 499.5L1027.7 496.0L1029.5 487.0L1033.0 499.2L1036.0 502.2L1038.8 488.3L1041.1 472.0L1042.7 460.2L1045.7 453.8L1048.0 458.4L1051.5 452.7L1053.8 461.4L1056.1 466.3L1058.0 461.6L1059.6 488.5L1061.4 503.6L1064.2 486.9L1066.5 472.8L1070.7 453.8L1073.5 457.2L1075.8 472.9L1079.3 487.0L1081.6 462.6L1083.2 457.9L1086.2 464.3L1090.1 442.3L1092.7 453.1L1094.8 470.3L1096.6 490.6L1100.1 499.0L1102.4 500.7L1105.2 484.2L1108.2 490.1L1111.7 486.2L1115.1 468.8L1117.9 485.8L1122.1 483.1L1124.4 480.6L1127.2 465.5L1130.9 466.9L1133.6 477.4L1137.1 481.9L1139.4 485.9L1141.7 477.0L1144.0 473.0L1147.5 467.8L1149.8 473.8L1153.3 490.5L1155.6 492.7L1157.9 488.1L1160.9 471.4L1163.7 476.7L1166.0 467.9L1169.5 444.0L1172.5 471.1L1175.3 474.4L1177.6 462.8L1179.9 460.4L1183.4 464.9L1186.4 455.5L1188.7 462.2L1191.0 474.5L1195.0 466.3L1198.0 481.0L1200.7 492.5L1204.2 498.8L1207.7 494.2L1211.2 493.2L1214.6 496.3L1219.3 486.8L1223.9 489.2L1227.8 478.7L1230.1 486.0L1233.1 495.3L1236.6 503.4L1238.9 490.5L1240.8 478.2L1243.6 485.3L1248.9 463.4L1251.7 488.8L1256.3 493.6L1260.9 498.2L1265.5 499.1L1267.9 485.1L1270.2 470.9L1272.5 486.2L1274.8 483.0L1278.3 479.4L1281.3 492.1L1285.2 471.2L1288.7 469.6L1291.7 476.7L1294.5 475.6L1296.8 478.8L1299.8 485.6L1302.6 485.1L1306.0 490.7L1309.5 491.5L1313.4 477.8L1316.4 486.0L1318.8 501.3L1322.2 492.3L1325.7 472.8L1328.5 468.9L1331.5 475.7L1334.5 472.5L1337.3 485.7L1341.2 481.8L1344.2 489.7L1346.5 500.2L1350.0 483.0L1353.0 455.8L1355.8 450.1L1358.8 465.9L1362.3 442.0L1364.6 447.7L1366.9 455.0L1368.5 473.6L1370.8 482.8L1373.1 493.5L1376.6 498.3L1380.1 494.7L1382.4 496.6L1385.4 492.4L1388.2 484.2L1391.0 458.7L1393.5 463.9L1395.6 479.0L1397.4 493.7L1402.1 496.6L1405.5 501.9L1409.0 494.8L1411.3 500.8L1414.8 496.0L1418.3 498.8L1422.9 497.4L1427.5 490.3L1431.0 492.3L1434.5 494.6L1439.1 501.0L1441.4 480.9L1444.2 462.4L1448.3 470.0L1451.8 476.4L1454.8 471.5L1457.6 474.3L1459.9 491.8L1463.4 474.7L1468.0 462.8L1471.5 463.2L1474.3 473.3L1477.3 466.5L1479.6 473.9L1483.1 461.7L1487.7 452.2L1489.7 469.0L1491.6 482.1L1494.3 474.1L1497.4 484.0L1500.1 471.0L1503.1 474.5L1506.6 474.0L1510.1 487.0L1513.1 463.7L1515.9 465.9L1518.9 482.0L1521.7 467.4L1524.0 493.6L1526.3 493.5L1529.8 501.0L1532.8 498.8L1536.7 501.8L1539.7 501.2L1542.5 498.5L1545.3 484.1L1547.1 474.6L1549.4 488.7L1552.2 493.0L1555.9 492.8L1559.8 495.1L1562.1 496.5L1564.9 483.2L1567.5 493.7L1571.4 501.3L1573.7 494.3L1575.3 475.7L1578.3 484.5L1581.4 458.9L1583.4 477.7L1585.3 497.1L1587.6 448.9L1590.6 445.6L1593.4 454.6L1595.7 468.7L1598.0 463.9L1600.8 448.2L1603.1 460.5L1605.0 484.5L1608.4 460.6L1611.9 434.1L1614.9 452.6L1618.1 453.6L1621.2 445.7L1623.0 451.8L1626.2 456.1L1629.3 461.3L1631.6 463.9L1635.0 465.3L1638.5 473.3L1640.8 480.7L1642.7 488.7L1644.8 463.1L1646.1 462.7L1648.9 482.6L1652.4 458.9L1654.7 449.1L1657.7 451.8L1660.5 461.9L1662.8 480.0L1665.8 470.5L1667.9 475.9L1670.2 493.6L1672.1 483.8L1675.5 483.5L1679.0 481.4L1682.5 473.3L1684.8 472.4L1687.1 467.1L1689.4 480.0L1691.7 480.3L1695.2 480.5L1697.5 470.6L1699.8 476.4L1703.3 480.2L1706.8 475.9L1709.8 471.0L1711.4 458.3L1713.0 452.6L1716.0 457.4L1718.3 479.9L1720.7 499.1L1723.0 484.9L1725.3 456.4L1728.1 468.6L1731.1 483.5L1733.4 472.9L1735.7 458.9L1738.7 468.8L1741.0 474.7L1745.0 458.5L1747.3 459.2L1749.6 468.2L1751.9 476.9L1753.5 470.2L1756.5 471.5L1760.0 478.6L1762.3 455.3L1764.2 435.4L1766.9 461.1L1769.3 463.9L1772.7 446.0L1775.7 460.0L1778.5 472.1L1781.5 459.4L1783.8 448.8L1786.6 468.9L1790.1 486.3L1793.6 467.5L1796.6 448.4L1798.9 458.8L1800.5 473.8L1802.8 491.9L1805.1 477.7L1807.0 460.5L1809.8 476.4L1812.1 491.8L1815.5 495.2L1817.9 488.9L1819.7 483.1L1822.5 489.4L1824.8 495.1L1828.3 495.0L1830.6 494.6L1832.9 488.1L1835.2 497.1L1838.7 500.6L1842.1 497.8L1845.2 488.9L1847.9 477.3L1850.2 477.0L1852.6 493.5L1856.0 502.6L1859.5 492.0L1863.0 479.8L1865.3 493.4L1868.8 493.9L1872.2 498.7L1875.7 504.1L1879.6 503.1L1882.2 477.6L1885.0 497.2L1887.3 484.2L1889.6 479.8L1892.6 480.3L1894.9 486.5L1897.7 476.2L1900.0 488.7L1903.5 469.1L1906.9 473.4L1910.4 484.3L1912.7 491.1L1916.7 484.1L1919.7 484.6L1923.1 496.0L1925.5 493.6L1927.8 484.3L1930.1 494.4L1934.0 470.0L1937.0 476.7L1939.3 480.9L1941.7 482.8L1945.1 483.2L1948.6 503.0L1952.1 498.5L1954.4 488.4L1956.7 493.0L1959.7 483.9L1961.3 501.3L1964.8 501.5L1968.3 498.8L1971.7 503.8L1974.0 497.6L1977.5 498.8L1981.0 473.8L1983.3 467.6L1985.6 467.9L1987.9 466.5L1990.2 475.0L1993.3 483.2L1996.0 455.0L1998.3 468.2L2000.7 472.7L2003.4 490.5L2006.4 465.7L2008.8 474.4L2011.1 489.3L2014.5 490.9L2016.9 489.3L2021.5 483.7L2023.8 470.6L2027.3 450.9L2029.6 456.7L2031.9 458.9L2035.4 450.9L2038.8 456.3L2041.2 476.8L2043.5 477.2L2046.9 487.7L2050.2 491.2L2052.5 497.3L2054.7 474.7L2056.5 459.5L2059.2 461.7L2061.5 484.9L2063.7 484.4L2067.1 492.3L2070.0 489.6L2072.7 481.3L2075.0 482.3L2077.2 477.1L2079.9 474.2L2082.2 470.8L2084.6 481.4L2086.2 482.9L2088.5 488.5L2090.3 480.1L2093.0 480.8L2095.2 465.1L2097.0 489.4L2099.3 500.2L2102.0 476.0L2104.2 467.7L2107.6 463.0L2109.8 473.6L2112.8 466.4L2115.5 471.7L2117.7 466.8L2120.0 468.7L2122.2 477.0L2124.4 483.1L2127.8 485.8L2131.2 494.6L2134.6 498.3L2137.9 500.9L2141.3 494.9L2143.6 500.2L2146.5 493.0L2149.2 488.7L2151.4 483.2L2153.7 494.0L2155.3 480.0L2158.2 492.2L2160.4 488.2L2163.8 478.3L2166.1 488.7L2168.3 485.8L2171.2 496.5L2173.9 497.5L2176.6 481.2L2179.5 488.7L2181.8 496.0L2184.0 492.2L2187.4 493.6L2190.8 496.9L2195.3 500.9L2199.8 489.1L2202.7 494.5L2206.5 496.0L2211.0 500.7L2216.7 501.8L2218.9 474.6L2221.1 476.8L2223.8 488.3L2226.3 496.0L2229.0 484.3L2232.4 477.9L2234.6 491.2L2238.0 480.2L2240.7 478.6L2243.6 484.4L2246.3 493.7L2249.3 494.4L2252.0 480.4L2254.9 490.9L2258.3 501.3L2262.8 503.2L2267.2 494.8L2270.6 493.7L2274.0 479.6L2277.4 477.5L2280.3 482.8L2281.9 468.0L2284.1 467.3L2286.4 496.8L2289.7 499.3L2292.0 498.1L2295.4 499.8L2298.7 502.8L2301.0 497.7L2303.2 497.7L2307.7 496.5L2310.0 489.9L2313.3 472.8L2316.0 458.3L2318.5 485.9L2321.2 499.3L2324.6 496.1L2328.0 491.7L2331.3 479.5L2334.7 487.3L2338.1 496.9L2339.9 501.2L2342.1 481.9L2344.8 486.5L2347.5 457.1L2350.5 455.2L2352.7 448.7L2355.0 457.6L2357.2 458.6L2359.4 500.7L2361.7 478.3L2363.5 466.6L2366.2 485.7L2369.6 496.9L2371.8 481.7L2374.1 475.7L2376.3 488.6L2378.6 472.1L2381.3 494.8L2384.2 464.6L2387.6 459.2L2390.9 444.7L2393.6 441.4L2395.9 467.5L2397.7 448.2L2399.9 449.7L2402.2 464.6L2405.6 480.2L2408.9 501.3L2410.7 480.6L2413.0 495.6L2416.8 470.7L2420.2 486.3L2423.5 494.8L2426.9 497.0L2430.3 489.8L2433.7 489.3L2436.4 487.5L2438.2 492.6L2440.4 491.6L2443.8 497.3L2447.2 488.5L2450.5 472.9L2453.2 484.1L2455.7 471.4L2458.4 486.4L2460.6 481.4L2462.9 477.1L2466.3 479.5L2469.6 491.3L2473.5 489.4L2477.5 501.6L2480.9 491.9L2483.8 493.0" fill="none" stroke="#7EB26D" stroke-width="4" stroke-linejoin="round"/>
<path d="M939.3 378.4L942.0 369.9L945.0 380.8L948.5 382.6L950.8 412.4L953.1 467.1L955.5 430.5L957.1 389.2L958.9 409.7L961.2 447.8L963.6 476.6L965.4 447.7L968.2 469.0L971.2 478.7L972.8 490.4L975.1 468.6L977.4 459.5L979.8 458.3L982.1 430.4L984.8 417.0L986.7 453.1L989.7 482.8L992.5 480.7L995.3 486.3L998.3 483.3L1002.2 475.6L1005.2 481.3L1008.7 489.6L1011.5 479.7L1014.5 473.1L1017.9 477.0L1021.4 488.9L1024.9 478.6L1027.7 476.7L1029.5 462.0L1033.0 483.9L1036.0 487.3L1038.8 461.4L1041.1 421.9L1042.7 399.8L1045.7 404.4L1048.0 394.1L1051.5 380.8L1053.8 396.2L1056.1 425.2L1058.0 420.9L1059.6 457.7L1061.4 493.3L1064.2 460.9L1066.5 421.0L1070.7 400.1L1073.5 415.1L1075.8 431.3L1079.3 458.7L1081.6 412.0L1083.2 393.0L1086.2 408.1L1090.1 374.8L1092.7 385.0L1094.8 426.0L1096.6 469.2L1100.1 490.3L1102.4 490.2L1105.2 450.9L1108.2 465.4L1111.7 463.2L1115.1 445.6L1117.9 455.7L1122.1 452.1L1124.4 451.6L1127.2 420.6L1130.9 412.7L1133.6 433.7L1137.1 446.0L1139.4 457.8L1141.7 443.6L1144.0 439.1L1147.5 422.8L1149.8 432.3L1153.3 458.5L1155.6 469.3L1157.9 451.6L1160.9 423.7L1163.7 429.0L1166.0 422.1L1169.5 383.4L1172.5 409.0L1175.3 431.2L1177.6 423.4L1179.9 398.9L1183.4 411.9L1186.4 410.4L1188.7 413.5L1191.0 434.9L1195.0 419.5L1198.0 460.2L1200.7 478.0L1204.2 480.5L1207.7 465.7L1211.2 473.4L1214.6 476.5L1219.3 457.0L1223.9 453.4L1227.8 432.2L1230.1 445.2L1233.1 468.3L1236.6 490.7L1238.9 459.1L1240.8 444.4L1243.6 460.9L1248.9 420.0L1251.7 466.4L1256.3 480.1L1260.9 486.2L1265.5 484.8L1267.9 453.2L1270.2 430.2L1272.5 456.0L1274.8 446.1L1278.3 456.2L1281.3 471.0L1285.2 427.7L1288.7 426.0L1291.7 417.5L1294.5 433.4L1296.8 439.5L1299.8 446.9L1302.6 438.3L1306.0 455.0L1309.5 465.4L1313.4 433.0L1316.4 456.9L1318.8 479.4L1322.2 456.3L1325.7 429.8L1328.5 423.5L1331.5 433.6L1334.5 430.1L1337.3 444.3L1341.2 434.6L1344.2 460.6L1346.5 492.1L1350.0 451.6L1353.0 396.3L1355.8 372.0L1358.8 400.0L1362.3 371.6L1364.6 388.7L1366.9 380.2L1368.5 410.0L1370.8 444.6L1373.1 476.7L1376.6 482.5L1380.1 470.0L1382.4 484.5L1385.4 471.6L1388.2 460.2L1391.0 407.4L1393.5 410.1L1395.6 452.7L1397.4 478.3L1402.1 484.3L1405.5 486.7L1409.0 479.4L1411.3 484.0L1414.8 479.3L1418.3 487.0L1422.9 474.9L1427.5 470.0L1431.0 466.6L1434.5 474.8L1439.1 485.0L1441.4 460.5L1444.2 421.9L1448.3 442.3L1451.8 432.0L1454.8 418.9L1457.6 429.4L1459.9 466.7L1463.4 428.8L1468.0 402.2L1471.5 412.6L1474.3 423.1L1477.3 422.4L1479.6 444.4L1483.1 423.4L1487.7 382.6L1489.7 421.8L1491.6 451.6L1494.3 426.6L1497.4 452.8L1500.1 429.1L1503.1 440.8L1506.6 433.1L1510.1 455.7L1513.1 419.4L1515.9 435.4L1518.9 458.2L1521.7 430.2L1524.0 469.0L1526.3 483.7L1529.8 485.5L1532.8 492.6L1536.7 487.7L1539.7 489.7L1542.5 488.5L1545.3 456.9L1547.1 441.1L1549.4 465.3L1552.2 478.0L1555.9 475.0L1559.8 472.9L1562.1 478.5L1564.9 442.5L1567.5 479.1L1571.4 489.1L1573.7 471.4L1575.3 445.9L1578.3 447.7L1581.4 412.3L1583.4 443.5L1585.3 488.7L1587.6 382.1L1590.6 380.3L1593.4 399.5L1595.7 432.4L1598.0 402.0L1600.8 369.3L1603.1 410.6L1605.0 452.3L1608.4 401.4L1611.9 376.3L1614.9 390.6L1618.1 402.3L1621.2 389.4L1623.0 377.4L1626.2 394.8L1629.3 407.1L1631.6 413.4L1635.0 422.4L1638.5 421.1L1640.8 443.7L1642.7 463.2L1644.8 417.9L1646.1 410.2L1648.9 450.1L1652.4 394.9L1654.7 383.2L1657.7 401.6L1660.5 422.4L1662.8 444.1L1665.8 428.3L1667.9 423.6L1670.2 472.9L1672.1 440.6L1675.5 446.2L1679.0 430.0L1682.5 415.9L1684.8 424.9L1687.1 431.8L1689.4 439.0L1691.7 444.2L1695.2 442.1L1697.5 434.8L1699.8 446.0L1703.3 438.0L1706.8 435.1L1709.8 429.4L1711.4 408.1L1713.0 384.8L1716.0 405.5L1718.3 448.7L1720.7 488.6L1723.0 459.1L1725.3 407.9L1728.1 425.0L1731.1 452.1L1733.4 424.3L1735.7 408.5L1738.7 412.7L1741.0 442.3L1745.0 399.5L1747.3 418.9L1749.6 422.2L1751.9 435.2L1753.5 427.4L1756.5 432.5L1760.0 444.9L1762.3 396.1L1764.2 377.2L1766.9 400.5L1769.3 417.7L1772.7 378.8L1775.7 408.7L1778.5 432.4L1781.5 395.6L1783.8 387.9L1786.6 430.6L1790.1 457.0L1793.6 430.1L1796.6 393.5L1798.9 396.5L1800.5 436.6L1802.8 468.6L1805.1 438.7L1807.0 415.6L1809.8 428.4L1812.1 471.4L1815.5 482.7L1817.9 467.1L1819.7 455.7L1822.5 466.7L1824.8 481.8L1828.3 482.2L1830.6 477.4L1832.9 467.3L1835.2 476.0L1838.7 480.7L1842.1 481.4L1845.2 455.0L1847.9 429.8L1850.2 437.4L1852.6 466.5L1856.0 483.4L1859.5 469.6L1863.0 451.2L1865.3 469.3L1868.8 473.4L1872.2 486.1L1875.7 489.3L1879.6 492.5L1882.2 441.3L1885.0 485.1L1887.3 456.3L1889.6 448.1L1892.6 438.2L1894.9 455.4L1897.7 430.8L1900.0 459.6L1903.5 419.5L1906.9 445.1L1910.4 455.7L1912.7 461.5L1916.7 448.6L1919.7 463.8L1923.1 477.0L1925.5 470.1L1927.8 455.2L1930.1 476.1L1934.0 435.2L1937.0 439.9L1939.3 444.3L1941.7 459.6L1945.1 458.9L1948.6 490.3L1952.1 481.5L1954.4 458.5L1956.7 472.8L1959.7 451.6L1961.3 484.3L1964.8 485.5L1968.3 485.4L1971.7 492.0L1974.0 481.5L1977.5 476.2L1981.0 429.3L1983.3 411.6L1985.6 397.9L1987.9 406.4L1990.2 434.4L1993.3 447.3L1996.0 397.7L1998.3 396.7L2000.7 428.4L2003.4 466.6L2006.4 404.1L2008.8 431.0L2011.1 460.3L2014.5 456.4L2016.9 465.5L2021.5 454.7L2023.8 430.6L2027.3 388.2L2029.6 406.1L2031.9 408.3L2035.4 393.0L2038.8 407.6L2041.2 443.4L2043.5 441.1L2046.9 467.9L2050.2 474.1L2052.5 479.6L2054.7 432.5L2056.5 400.3L2059.2 407.8L2061.5 451.3L2063.7 455.1L2067.1 462.8L2070.0 458.9L2072.7 440.2L2075.0 441.0L2077.2 425.1L2079.9 431.3L2082.2 425.5L2084.6 453.8L2086.2 453.4L2088.5 464.1L2090.3 447.2L2093.0 460.5L2095.2 414.2L2097.0 460.0L2099.3 488.9L2102.0 430.6L2104.2 424.9L2107.6 417.0L2109.8 417.3L2112.8 432.0L2115.5 428.7L2117.7 432.8L2120.0 427.2L2122.2 432.2L2124.4 446.4L2127.8 461.0L2131.2 472.9L2134.6 478.7L2137.9 483.2L2141.3 476.7L2143.6 486.6L2146.5 462.3L2149.2 452.5L2151.4 454.6L2153.7 471.9L2155.3 443.3L2158.2 463.1L2160.4 459.0L2163.8 434.0L2166.1 455.2L2168.3 461.0L2171.2 478.4L2173.9 483.9L2176.6 451.4L2179.5 471.3L2181.8 475.9L2184.0 470.2L2187.4 472.7L2190.8 487.3L2195.3 485.9L2199.8 469.9L2202.7 474.2L2206.5 477.2L2211.0 490.1L2216.7 487.2L2218.9 434.5L2221.1 447.4L2223.8 460.8L2226.3 472.4L2229.0 450.6L2232.4 443.0L2234.6 473.0L2238.0 449.8L2240.7 438.4L2243.6 454.9L2246.3 472.2L2249.3 474.2L2252.0 440.1L2254.9 466.0L2258.3 481.9L2262.8 487.7L2267.2 473.3L2270.6 470.8L2274.0 454.5L2277.4 446.3L2280.3 459.6L2281.9 424.1L2284.1 424.6L2286.4 482.0L2289.7 480.0L2292.0 483.2L2295.4 482.3L2298.7 492.0L2301.0 479.2L2303.2 483.2L2307.7 477.7L2310.0 460.6L2313.3 438.0L2316.0 409.8L2318.5 454.9L2321.2 482.8L2324.6 475.0L2328.0 465.7L2331.3 448.9L2334.7 456.6L2338.1 478.7L2339.9 488.4L2342.1 442.2L2344.8 462.3L2347.5 398.6L2350.5 379.8L2352.7 373.4L2355.0 375.1L2357.2 384.4L2359.4 484.6L2361.7 440.8L2363.5 413.0L2366.2 450.5L2369.6 477.8L2371.8 442.8L2374.1 420.4L2376.3 456.1L2378.6 436.3L2381.3 473.5L2384.2 407.8L2387.6 386.6L2390.9 373.4L2393.6 364.5L2395.9 410.5L2397.7 387.5L2399.9 395.9L2402.2 410.3L2405.6 451.2L2408.9 493.1L2410.7 451.4L2413.0 475.3L2416.8 429.3L2420.2 457.6L2423.5 468.9L2426.9 475.4L2430.3 469.6L2433.7 470.1L2436.4 465.4L2438.2 476.0L2440.4 475.5L2443.8 490.3L2447.2 472.4L2450.5 432.5L2453.2 459.4L2455.7 435.7L2458.4 450.5L2460.6 444.4L2462.9 443.8L2466.3 445.0L2469.6 459.9L2473.5 460.6L2477.5 485.0L2480.9 473.4L2483.8 476.9" fill="none" stroke="#EAB839" stroke-width="4" stroke-linejoin="round"/>
<path d="M939.3 296.3L942.0 294.7L945.0 303.3L948.5 318.7L950.8 362.3L953.1 440.8L955.5 390.4L957.1 329.9L958.9 352.2L961.2 407.9L963.6 455.7L965.4 411.9L968.2 444.9L971.2 458.6L972.8 472.9L975.1 446.1L977.4 434.6L979.8 431.5L982.1 390.4L984.8 356.2L986.7 421.5L989.7 462.9L992.5 462.9L995.3 471.6L998.3 463.5L1002.2 457.9L1005.2 461.1L1008.7 478.6L1011.5 464.7L1014.5 459.4L1017.9 461.1L1021.4 473.7L1024.9 462.4L1027.7 458.0L1029.5 434.4L1033.0 465.3L1036.0 472.8L1038.8 425.2L1041.1 370.3L1042.7 329.3L1045.7 345.3L1048.0 325.8L1051.5 319.8L1053.8 348.0L1056.1 374.4L1058.0 367.8L1059.6 431.2L1061.4 480.0L1064.2 429.0L1066.5 369.9L1070.7 342.0L1073.5 355.7L1075.8 379.9L1079.3 416.7L1081.6 355.4L1083.2 326.5L1086.2 347.0L1090.1 304.8L1092.7 330.1L1094.8 374.0L1096.6 445.1L1100.1 475.0L1102.4 477.9L1105.2 418.3L1108.2 438.8L1111.7 431.3L1115.1 387.6L1117.9 419.4L1122.1 408.8L1124.4 421.4L1127.2 366.0L1130.9 358.8L1133.6 392.3L1137.1 412.0L1139.4 428.6L1141.7 390.7L1144.0 397.0L1147.5 372.8L1149.8 391.1L1153.3 423.0L1155.6 445.2L1157.9 424.4L1160.9 371.2L1163.7 384.2L1166.0 372.9L1169.5 306.3L1172.5 366.1L1175.3 389.9L1177.6 375.0L1179.9 351.0L1183.4 364.1L1186.4 357.6L1188.7 364.2L1191.0 405.1L1195.0 376.9L1198.0 428.9L1200.7 459.2L1204.2 455.5L1207.7 444.7L1211.2 448.9L1214.6 457.4L1219.3 429.4L1223.9 423.9L1227.8 401.5L1230.1 405.1L1233.1 442.5L1236.6 472.0L1238.9 429.8L1240.8 404.1L1243.6 432.3L1248.9 373.6L1251.7 447.3L1256.3 461.8L1260.9 473.6L1265.5 471.0L1267.9 416.7L1270.2 391.3L1272.5 416.9L1274.8 407.2L1278.3 418.9L1281.3 443.8L1285.2 386.4L1288.7 385.9L1291.7 371.6L1294.5 398.4L1296.8 392.2L1299.8 410.9L1302.6 393.5L1306.0 429.0L1309.5 439.5L1313.4 384.5L1316.4 418.5L1318.8 460.3L1322.2 426.2L1325.7 391.1L1328.5 380.7L1331.5 398.2L1334.5 382.7L1337.3 414.1L1341.2 397.5L1344.2 427.2L1346.5 478.7L1350.0 407.6L1353.0 327.2L1355.8 300.0L1358.8 349.8L1362.3 307.9L1364.6 323.3L1366.9 302.5L1368.5 361.6L1370.8 408.9L1373.1 456.2L1376.6 463.7L1380.1 448.1L1382.4 461.7L1385.4 446.9L1388.2 426.4L1391.0 357.7L1393.5 358.2L1395.6 414.1L1397.4 458.0L1402.1 467.3L1405.5 473.2L1409.0 466.5L1411.3 467.8L1414.8 463.8L1418.3 471.4L1422.9 456.7L1427.5 451.5L1431.0 439.5L1434.5 452.0L1439.1 471.6L1441.4 425.7L1444.2 366.4L1448.3 398.7L1451.8 393.8L1454.8 368.8L1457.6 385.2L1459.9 442.5L1463.4 385.2L1468.0 333.0L1471.5 356.2L1474.3 376.0L1477.3 384.3L1479.6 402.6L1483.1 381.7L1487.7 336.9L1489.7 378.6L1491.6 428.1L1494.3 386.1L1497.4 422.8L1500.1 373.9L1503.1 392.7L1506.6 399.5L1510.1 417.1L1513.1 373.1L1515.9 380.2L1518.9 421.1L1521.7 376.3L1524.0 443.6L1526.3 461.0L1529.8 466.2L1532.8 474.5L1536.7 472.6L1539.7 475.3L1542.5 474.4L1545.3 428.5L1547.1 399.4L1549.4 441.9L1552.2 458.3L1555.9 456.7L1559.8 447.1L1562.1 454.3L1564.9 409.8L1567.5 457.8L1571.4 475.8L1573.7 443.0L1575.3 410.6L1578.3 413.1L1581.4 360.5L1583.4 390.2L1585.3 471.1L1587.6 300.9L1590.6 308.7L1593.4 337.9L1595.7 391.8L1598.0 338.3L1600.8 308.8L1603.1 363.8L1605.0 423.4L1608.4 345.3L1611.9 307.7L1614.9 340.5L1618.1 348.1L1621.2 318.8L1623.0 313.3L1626.2 329.6L1629.3 357.9L1631.6 360.6L1635.0 364.3L1638.5 377.4L1640.8 402.9L1642.7 435.3L1644.8 363.4L1646.1 349.6L1648.9 411.7L1652.4 337.9L1654.7 308.2L1657.7 342.2L1660.5 373.8L1662.8 402.2L1665.8 379.1L1667.9 385.1L1670.2 455.1L1672.1 405.8L1675.5 416.2L1679.0 390.8L1682.5 367.8L1684.8 381.5L1687.1 387.0L1689.4 396.4L1691.7 408.2L1695.2 401.5L1697.5 384.6L1699.8 410.0L1703.3 391.5L1706.8 398.2L1709.8 394.6L1711.4 341.1L1713.0 316.4L1716.0 356.2L1718.3 407.2L1720.7 468.0L1723.0 424.4L1725.3 358.4L1728.1 376.0L1731.1 419.0L1733.4 375.5L1735.7 355.7L1738.7 366.2L1741.0 400.1L1745.0 343.0L1747.3 367.0L1749.6 376.0L1751.9 387.1L1753.5 389.1L1756.5 396.9L1760.0 412.0L1762.3 339.8L1764.2 302.8L1766.9 321.7L1769.3 365.6L1772.7 311.7L1775.7 345.4L1778.5 380.9L1781.5 319.2L1783.8 327.5L1786.6 384.5L1790.1 424.9L1793.6 383.0L1796.6 340.2L1798.9 352.0L1800.5 393.6L1802.8 448.9L1805.1 403.2L1807.0 376.0L1809.8 392.5L1812.1 449.0L1815.5 467.2L1817.9 445.4L1819.7 419.6L1822.5 436.7L1824.8 461.9L1828.3 461.2L1830.6 452.4L1832.9 438.7L1835.2 458.7L1838.7 461.9L1842.1 464.6L1845.2 431.1L1847.9 384.4L1850.2 405.2L1852.6 439.6L1856.0 469.9L1859.5 447.7L1863.0 404.1L1865.3 443.7L1868.8 453.8L1872.2 469.2L1875.7 473.0L1879.6 474.3L1882.2 400.9L1885.0 461.0L1887.3 416.9L1889.6 409.2L1892.6 395.2L1894.9 422.0L1897.7 375.9L1900.0 429.1L1903.5 376.8L1906.9 410.6L1910.4 423.6L1912.7 430.9L1916.7 413.3L1919.7 432.8L1923.1 455.4L1925.5 447.6L1927.8 422.2L1930.1 453.4L1934.0 388.6L1937.0 399.2L1939.3 408.7L1941.7 429.5L1945.1 422.7L1948.6 469.1L1952.1 458.9L1954.4 421.5L1956.7 442.6L1959.7 413.3L1961.3 465.6L1964.8 465.8L1968.3 470.8L1971.7 478.8L1974.0 459.2L1977.5 458.8L1981.0 390.3L1983.3 348.0L1985.6 342.6L1987.9 359.1L1990.2 397.1L1993.3 412.1L1996.0 321.2L1998.3 342.5L2000.7 382.7L2003.4 437.3L2006.4 338.8L2008.8 389.5L2011.1 427.2L2014.5 423.6L2016.9 432.1L2021.5 419.6L2023.8 381.0L2027.3 319.4L2029.6 344.0L2031.9 365.3L2035.4 339.8L2038.8 341.4L2041.2 406.6L2043.5 409.6L2046.9 438.7L2050.2 457.1L2052.5 464.5L2054.7 395.1L2056.5 356.6L2059.2 365.4L2061.5 422.8L2063.7 424.6L2067.1 438.2L2070.0 434.1L2072.7 401.3L2075.0 404.6L2077.2 384.9L2079.9 386.4L2082.2 388.5L2084.6 418.8L2086.2 413.9L2088.5 435.3L2090.3 407.3L2093.0 424.5L2095.2 368.1L2097.0 423.5L2099.3 468.8L2102.0 391.8L2104.2 371.3L2107.6 367.6L2109.8 374.7L2112.8 373.2L2115.5 373.5L2117.7 379.1L2120.0 388.9L2122.2 376.5L2124.4 411.9L2127.8 435.2L2131.2 451.0L2134.6 460.4L2137.9 465.1L2141.3 458.5L2143.6 471.1L2146.5 427.2L2149.2 421.2L2151.4 415.1L2153.7 446.2L2155.3 404.2L2158.2 436.4L2160.4 426.5L2163.8 380.7L2166.1 424.1L2168.3 427.3L2171.2 454.5L2173.9 463.2L2176.6 406.4L2179.5 438.4L2181.8 452.8L2184.0 442.0L2187.4 446.0L2190.8 466.4L2195.3 466.9L2199.8 449.6L2202.7 446.6L2206.5 457.8L2211.0 475.8L2216.7 471.0L2218.9 400.9L2221.1 405.5L2223.8 430.0L2226.3 451.6L2229.0 426.1L2232.4 410.3L2234.6 449.1L2238.0 417.7L2240.7 406.9L2243.6 428.6L2246.3 454.5L2249.3 447.1L2252.0 411.2L2254.9 439.3L2258.3 463.2L2262.8 469.7L2267.2 450.6L2270.6 449.6L2274.0 417.9L2277.4 408.3L2280.3 427.7L2281.9 376.6L2284.1 369.4L2286.4 469.1L2289.7 463.5L2292.0 468.1L2295.4 461.6L2298.7 475.6L2301.0 452.9L2303.2 468.0L2307.7 455.1L2310.0 425.3L2313.3 396.1L2316.0 351.4L2318.5 427.3L2321.2 466.0L2324.6 451.8L2328.0 439.5L2331.3 414.2L2334.7 425.2L2338.1 465.0L2339.9 475.0L2342.1 412.1L2344.8 433.2L2347.5 339.6L2350.5 321.3L2352.7 315.2L2355.0 303.4L2357.2 325.7L2359.4 466.0L2361.7 402.7L2363.5 358.3L2366.2 425.8L2369.6 461.1L2371.8 409.8L2374.1 388.3L2376.3 425.4L2378.6 395.6L2381.3 457.3L2384.2 357.4L2387.6 314.6L2390.9 315.0L2393.6 291.6L2395.9 365.8L2397.7 325.2L2399.9 330.4L2402.2 354.6L2405.6 408.8L2408.9 475.7L2410.7 416.3L2413.0 453.6L2416.8 373.3L2420.2 423.7L2423.5 437.9L2426.9 451.6L2430.3 443.2L2433.7 442.2L2436.4 431.9L2438.2 446.1L2440.4 445.2L2443.8 467.6L2447.2 444.8L2450.5 383.6L2453.2 423.9L2455.7 391.6L2458.4 415.3L2460.6 409.2L2462.9 405.4L2466.3 407.4L2469.6 426.3L2473.5 438.7L2477.5 471.0L2480.9 454.2L2483.8 448.9" fill="none" stroke="#6ED0E0" stroke-width="4" stroke-linejoin="round"/>
<path d="M939.3 225.9L942.0 221.2L945.0 236.3L948.5 257.1L950.8 310.3L953.1 416.8L955.5 352.0L957.1 260.6L958.9 301.1L961.2 372.8L963.6 435.3L965.4 379.8L968.2 423.7L971.2 442.2L972.8 458.4L975.1 421.4L977.4 402.9L979.8 398.3L982.1 338.1L984.8 302.2L986.7 382.1L989.7 442.2L992.5 446.9L995.3 457.3L998.3 444.5L1002.2 434.1L1005.2 442.2L1008.7 463.1L1011.5 446.9L1014.5 435.3L1017.9 444.5L1021.4 458.4L1024.9 439.9L1027.7 438.8L1029.5 408.7L1033.0 451.5L1036.0 460.7L1038.8 398.3L1041.1 319.6L1042.7 271.0L1045.7 289.5L1048.0 264.0L1051.5 244.4L1053.8 277.9L1056.1 318.4L1058.0 317.3L1059.6 398.3L1061.4 464.2L1064.2 398.3L1066.5 328.8L1070.7 281.4L1073.5 298.8L1075.8 338.1L1079.3 386.7L1081.6 305.7L1083.2 265.2L1086.2 284.9L1090.1 235.1L1092.7 259.4L1094.8 328.8L1096.6 421.4L1100.1 458.4L1102.4 463.1L1105.2 386.7L1108.2 409.8L1111.7 405.2L1115.1 352.0L1117.9 389.0L1122.1 379.8L1124.4 389.0L1127.2 319.6L1130.9 309.2L1133.6 352.0L1137.1 382.1L1139.4 402.9L1141.7 358.9L1144.0 356.6L1147.5 328.8L1149.8 347.4L1153.3 398.3L1155.6 421.4L1157.9 391.3L1160.9 325.4L1163.7 342.7L1166.0 328.8L1169.5 238.6L1172.5 305.7L1175.3 347.4L1177.6 319.6L1179.9 291.8L1183.4 308.0L1186.4 294.1L1188.7 303.4L1191.0 361.2L1195.0 325.4L1198.0 398.3L1200.7 436.4L1204.2 435.3L1207.7 417.9L1211.2 423.7L1214.6 435.3L1219.3 402.9L1223.9 391.3L1227.8 356.6L1230.1 370.5L1233.1 421.4L1236.6 458.4L1238.9 398.3L1240.8 371.7L1243.6 407.5L1248.9 324.2L1251.7 421.4L1256.3 439.9L1260.9 458.4L1265.5 451.5L1267.9 386.7L1270.2 347.4L1272.5 389.0L1274.8 375.1L1278.3 389.0L1281.3 421.4L1285.2 338.1L1288.7 335.8L1291.7 320.7L1294.5 347.4L1296.8 347.4L1299.8 375.1L1302.6 352.0L1306.0 393.6L1309.5 407.5L1313.4 343.9L1316.4 391.3L1318.8 439.9L1322.2 398.3L1325.7 342.7L1328.5 335.8L1331.5 356.6L1334.5 339.3L1337.3 375.1L1341.2 356.6L1344.2 398.3L1346.5 463.1L1350.0 375.1L1353.0 259.4L1355.8 235.1L1358.8 287.2L1362.3 232.8L1364.6 247.9L1366.9 236.3L1368.5 305.7L1370.8 370.5L1373.1 430.7L1376.6 442.2L1380.1 423.7L1382.4 444.5L1385.4 423.7L1388.2 398.3L1391.0 304.5L1393.5 310.3L1395.6 382.1L1397.4 435.3L1402.1 449.2L1405.5 459.6L1409.0 444.5L1411.3 452.6L1414.8 443.4L1418.3 457.3L1422.9 433.0L1427.5 426.0L1431.0 415.6L1434.5 428.3L1439.1 453.8L1441.4 398.3L1444.2 320.7L1448.3 358.9L1451.8 347.4L1454.8 321.9L1457.6 335.8L1459.9 414.5L1463.4 340.4L1468.0 266.4L1471.5 294.1L1474.3 331.2L1477.3 333.5L1479.6 365.9L1483.1 333.5L1487.7 271.0L1489.7 338.1L1491.6 396.0L1494.3 335.8L1497.4 393.6L1500.1 332.3L1503.1 356.6L1506.6 354.3L1510.1 389.0L1513.1 317.3L1515.9 338.1L1518.9 386.7L1521.7 336.9L1524.0 421.4L1526.3 439.9L1529.8 451.5L1532.8 460.7L1536.7 453.8L1539.7 458.4L1542.5 456.1L1545.3 393.6L1547.1 364.7L1549.4 416.8L1552.2 434.1L1555.9 433.0L1559.8 426.0L1562.1 430.7L1564.9 371.7L1567.5 435.3L1571.4 463.1L1573.7 421.4L1575.3 367.0L1578.3 379.8L1581.4 301.1L1583.4 352.0L1585.3 456.1L1587.6 238.6L1590.6 243.2L1593.4 287.2L1595.7 347.4L1598.0 287.2L1600.8 236.3L1603.1 310.3L1605.0 393.6L1608.4 282.6L1611.9 228.2L1614.9 268.7L1618.1 289.5L1621.2 254.8L1623.0 235.1L1626.2 259.4L1629.3 301.1L1631.6 312.6L1635.0 317.3L1638.5 333.5L1640.8 370.5L1642.7 412.1L1644.8 312.6L1646.1 298.8L1648.9 377.4L1652.4 282.6L1654.7 250.2L1657.7 282.6L1660.5 326.5L1662.8 365.9L1665.8 335.8L1667.9 342.7L1670.2 433.0L1672.1 368.2L1675.5 382.1L1679.0 352.0L1682.5 320.7L1684.8 335.8L1687.1 335.8L1689.4 356.6L1691.7 372.8L1695.2 363.6L1697.5 343.9L1699.8 368.2L1703.3 356.6L1706.8 356.6L1709.8 347.4L1711.4 287.2L1713.0 247.9L1716.0 305.7L1718.3 375.1L1720.7 453.8L1723.0 398.3L1725.3 303.4L1728.1 324.2L1731.1 382.1L1733.4 333.5L1735.7 297.6L1738.7 319.6L1741.0 360.1L1745.0 281.4L1747.3 319.6L1749.6 321.9L1751.9 352.0L1753.5 343.9L1756.5 352.0L1760.0 377.4L1762.3 282.6L1764.2 224.7L1766.9 266.4L1769.3 315.0L1772.7 242.1L1775.7 291.8L1778.5 333.5L1781.5 254.8L1783.8 266.4L1786.6 338.1L1790.1 391.3L1793.6 338.1L1796.6 275.6L1798.9 289.5L1800.5 352.0L1802.8 421.4L1805.1 363.6L1807.0 318.4L1809.8 347.4L1812.1 421.4L1815.5 449.2L1817.9 421.4L1819.7 390.2L1822.5 412.1L1824.8 439.9L1828.3 442.2L1830.6 430.7L1832.9 411.0L1835.2 435.3L1838.7 444.5L1842.1 449.2L1845.2 398.3L1847.9 340.4L1850.2 365.9L1852.6 412.1L1856.0 451.5L1859.5 421.4L1863.0 372.8L1865.3 421.4L1868.8 430.7L1872.2 451.5L1875.7 460.7L1879.6 461.9L1882.2 365.9L1885.0 444.5L1887.3 384.4L1889.6 368.2L1892.6 353.1L1894.9 389.0L1897.7 333.5L1900.0 398.3L1903.5 317.3L1906.9 368.2L1910.4 389.0L1912.7 398.3L1916.7 370.5L1919.7 398.3L1923.1 435.3L1925.5 421.4L1927.8 390.2L1930.1 430.7L1934.0 349.7L1937.0 363.6L1939.3 375.1L1941.7 402.9L1945.1 398.3L1948.6 456.1L1952.1 439.9L1954.4 396.0L1956.7 421.4L1959.7 377.4L1961.3 449.2L1964.8 449.2L1968.3 456.1L1971.7 463.1L1974.0 441.1L1977.5 435.3L1981.0 338.1L1983.3 294.1L1985.6 280.2L1987.9 294.1L1990.2 352.0L1993.3 377.4L1996.0 262.9L1998.3 287.2L2000.7 340.4L2003.4 409.8L2006.4 288.3L2008.8 352.0L2011.1 398.3L2014.5 393.6L2016.9 407.5L2021.5 391.3L2023.8 338.1L2027.3 251.3L2029.6 294.1L2031.9 310.3L2035.4 279.1L2038.8 287.2L2041.2 367.7L2043.5 374.4L2046.9 414.9L2050.2 432.9L2052.5 445.2L2054.7 347.4L2056.5 295.7L2059.2 302.4L2061.5 385.6L2063.7 396.9L2067.1 409.3L2070.0 405.9L2072.7 363.2L2075.0 363.2L2077.2 342.9L2079.9 345.2L2082.2 340.7L2084.6 387.9L2086.2 381.1L2088.5 408.1L2090.3 367.7L2093.0 392.4L2095.2 312.6L2097.0 392.4L2099.3 455.4L2102.0 347.4L2104.2 322.7L2107.6 315.9L2109.8 324.9L2112.8 333.9L2115.5 333.9L2117.7 340.7L2120.0 342.9L2122.2 337.3L2124.4 381.1L2127.8 405.9L2131.2 428.4L2134.6 444.1L2137.9 446.4L2141.3 437.4L2143.6 455.4L2146.5 401.4L2149.2 385.6L2151.4 381.1L2153.7 421.6L2155.3 359.8L2158.2 405.9L2160.4 392.4L2163.8 340.7L2166.1 394.6L2168.3 396.9L2171.2 437.4L2173.9 441.9L2176.6 373.3L2179.5 414.9L2181.8 432.9L2184.0 419.4L2187.4 419.4L2190.8 448.6L2195.3 449.7L2199.8 426.1L2202.7 426.1L2206.5 439.6L2211.0 459.9L2216.7 453.1L2218.9 356.4L2221.1 367.7L2223.8 401.4L2226.3 431.7L2229.0 392.4L2232.4 373.3L2234.6 426.1L2238.0 385.6L2240.7 372.2L2243.6 403.6L2246.3 432.9L2249.3 428.4L2252.0 374.4L2254.9 414.9L2258.3 448.6L2262.8 455.4L2267.2 428.4L2270.6 428.4L2274.0 383.4L2277.4 372.2L2280.3 396.9L2281.9 322.7L2284.1 321.6L2286.4 450.9L2289.7 441.9L2292.0 450.9L2295.4 444.1L2298.7 459.9L2301.0 432.9L2303.2 448.6L2307.7 437.4L2310.0 394.6L2313.3 351.9L2316.0 300.2L2318.5 392.4L2321.2 450.9L2324.6 428.4L2328.0 414.9L2331.3 372.2L2334.7 392.4L2338.1 444.1L2339.9 459.9L2342.1 374.4L2344.8 401.4L2347.5 282.2L2350.5 262.0L2352.7 242.8L2355.0 242.8L2357.2 255.2L2359.4 450.9L2361.7 369.9L2363.5 313.7L2366.2 392.4L2369.6 437.4L2371.8 369.9L2374.1 335.0L2376.3 392.4L2378.6 342.9L2381.3 432.9L2384.2 302.4L2387.6 250.7L2390.9 239.5L2393.6 221.5L2395.9 306.9L2397.7 262.0L2399.9 268.7L2402.2 295.7L2405.6 369.9L2408.9 459.9L2410.7 385.6L2413.0 428.4L2416.8 329.4L2420.2 387.9L2423.5 414.9L2426.9 428.4L2430.3 414.9L2433.7 419.4L2436.4 408.1L2438.2 423.9L2440.4 421.6L2443.8 453.1L2447.2 419.4L2450.5 344.0L2453.2 392.4L2455.7 345.2L2458.4 378.9L2460.6 367.7L2462.9 369.9L2466.3 366.5L2469.6 399.1L2473.5 405.9L2477.5 450.9L2480.9 428.4L2483.8 423.9" fill="none" stroke="#EF843C" stroke-width="4" stroke-linejoin="round"/>
<rect x="82" y="720" width="1080" height="2" fill="rgba(255,255,255,0.17)"/><rect x="82" y="812" width="1080" height="2" fill="rgba(255,255,255,0.17)"/><rect x="82" y="906" width="1080" height="2" fill="rgba(255,255,255,0.17)"/><rect x="82" y="1000" width="1080" height="2" fill="rgba(255,255,255,0.17)"/><rect x="82" y="1094" width="1080" height="2" fill="rgba(255,255,255,0.17)"/><rect x="198" y="720" width="2" height="376" fill="rgba(255,255,255,0.17)"/><rect x="378" y="720" width="2" height="376" fill="rgba(255,255,255,0.17)"/><rect x="558" y="720" width="2" height="376" fill="rgba(255,255,255,0.17)"/><rect x="738" y="720" width="2" height="376" fill="rgba(255,255,255,0.17)"/><rect x="918" y="720" width="2" height="376" fill="rgba(255,255,255,0.17)"/><rect x="1098" y="720" width="2" height="376" fill="rgba(255,255,255,0.17)"/>
<clipPath id="c3"><rect x="82" y="716" width="1080" height="379"/></clipPath><g clip-path="url(#c3)">
<rect x="79" y="1041.3" width="10" height="53.7" fill="#7EB26D"/>
<rect x="79" y="988.7" width="10" height="52.6" fill="#EAB839"/>
<rect x="79" y="949.7" width="10" height="39.0" fill="#E24D42"/>
<rect x="79" y="938.3" width="10" height="11.4" fill="#1F78C1"/>
<rect x="94" y="1042.1" width="10" height="52.9" fill="#7EB26D"/>
<rect x="94" y="991.5" width="10" height="50.6" fill="#EAB839"/>
<rect x="94" y="949.1" width="10" height="42.4" fill="#E24D42"/>
<rect x="94" y="937.8" width="10" height="11.4" fill="#1F78C1"/>
<rect x="109" y="1043.0" width="10" height="52.0" fill="#7EB26D"/>
<rect x="109" y="992.4" width="10" height="50.6" fill="#EAB839"/>
<rect x="109" y="953.7" width="10" height="38.7" fill="#E24D42"/>
<rect x="109" y="942.0" width="10" height="11.7" fill="#1F78C1"/>
<rect x="124" y="1041.6" width="10" height="53.4" fill="#7EB26D"/>
<rect x="124" y="989.5" width="10" height="52.0" fill="#EAB839"/>
<rect x="124" y="949.4" width="10" height="40.1" fill="#E24D42"/>
<rect x="124" y="936.3" width="10" height="13.1" fill="#1F78C1"/>
<rect x="139" y="1039.3" width="10" height="55.7" fill="#7EB26D"/>
<rect x="139" y="985.3" width="10" height="54.0" fill="#EAB839"/>
<rect x="139" y="945.4" width="10" height="39.8" fill="#E24D42"/>
<rect x="139" y="933.5" width="10" height="11.9" fill="#1F78C1"/>
<rect x="154" y="1041.3" width="10" height="53.7" fill="#7EB26D"/>
<rect x="154" y="989.0" width="10" height="52.3" fill="#EAB839"/>
<rect x="154" y="948.6" width="10" height="40.4" fill="#E24D42"/>
<rect x="154" y="936.1" width="10" height="12.5" fill="#1F78C1"/>
<rect x="169" y="1043.3" width="10" height="51.7" fill="#7EB26D"/>
<rect x="169" y="992.9" width="10" height="50.3" fill="#EAB839"/>
<rect x="169" y="983.0" width="10" height="10.0" fill="#6ED0E0"/>
<rect x="169" y="942.9" width="10" height="40.1" fill="#E24D42"/>
<rect x="169" y="931.5" width="10" height="11.4" fill="#1F78C1"/>
<rect x="184" y="1043.6" width="10" height="51.4" fill="#7EB26D"/>
<rect x="184" y="993.5" width="10" height="50.1" fill="#EAB839"/>
<rect x="184" y="954.5" width="10" height="39.0" fill="#E24D42"/>
<rect x="184" y="943.2" width="10" height="11.4" fill="#1F78C1"/>
<rect x="199" y="1044.1" width="10" height="50.9" fill="#7EB26D"/>
<rect x="199" y="994.4" width="10" height="49.8" fill="#EAB839"/>
<rect x="199" y="955.7" width="10" height="38.7" fill="#E24D42"/>
<rect x="199" y="944.9" width="10" height="10.8" fill="#1F78C1"/>
<rect x="214" y="1043.3" width="10" height="51.7" fill="#7EB26D"/>
<rect x="214" y="992.7" width="10" height="50.6" fill="#EAB839"/>
<rect x="214" y="951.7" width="10" height="41.0" fill="#E24D42"/>
<rect x="214" y="938.9" width="10" height="12.8" fill="#1F78C1"/>
<rect x="229" y="1037.3" width="10" height="57.7" fill="#7EB26D"/>
<rect x="229" y="981.6" width="10" height="55.7" fill="#EAB839"/>
<rect x="229" y="941.7" width="10" height="39.8" fill="#E24D42"/>
<rect x="229" y="930.7" width="10" height="11.1" fill="#1F78C1"/>
<rect x="244" y="1042.1" width="10" height="52.9" fill="#7EB26D"/>
<rect x="244" y="990.4" width="10" height="51.8" fill="#EAB839"/>
<rect x="244" y="952.8" width="10" height="37.5" fill="#E24D42"/>
<rect x="244" y="943.2" width="10" height="9.7" fill="#1F78C1"/>
<rect x="259" y="1044.7" width="10" height="50.3" fill="#7EB26D"/>
<rect x="259" y="995.8" width="10" height="48.9" fill="#EAB839"/>
<rect x="259" y="953.7" width="10" height="42.1" fill="#E24D42"/>
<rect x="259" y="939.5" width="10" height="14.2" fill="#1F78C1"/>
<rect x="274" y="1041.3" width="10" height="53.7" fill="#7EB26D"/>
<rect x="274" y="988.7" width="10" height="52.6" fill="#EAB839"/>
<rect x="274" y="946.3" width="10" height="42.4" fill="#E24D42"/>
<rect x="274" y="934.1" width="10" height="12.2" fill="#1F78C1"/>
<rect x="289" y="1040.7" width="10" height="54.3" fill="#7EB26D"/>
<rect x="289" y="987.5" width="10" height="53.2" fill="#EAB839"/>
<rect x="289" y="948.0" width="10" height="39.5" fill="#E24D42"/>
<rect x="289" y="936.1" width="10" height="11.9" fill="#1F78C1"/>
<rect x="304" y="1037.3" width="10" height="57.7" fill="#7EB26D"/>
<rect x="304" y="980.7" width="10" height="56.6" fill="#EAB839"/>
<rect x="304" y="940.9" width="10" height="39.8" fill="#E24D42"/>
<rect x="304" y="928.1" width="10" height="12.8" fill="#1F78C1"/>
<rect x="319" y="1038.7" width="10" height="56.3" fill="#7EB26D"/>
<rect x="319" y="983.6" width="10" height="55.2" fill="#EAB839"/>
<rect x="319" y="906.8" width="10" height="76.8" fill="#E24D42"/>
<rect x="319" y="894.2" width="10" height="12.5" fill="#1F78C1"/>
<rect x="334" y="1036.4" width="10" height="58.6" fill="#7EB26D"/>
<rect x="334" y="979.6" width="10" height="56.9" fill="#EAB839"/>
<rect x="334" y="892.8" width="10" height="86.7" fill="#E24D42"/>
<rect x="334" y="878.3" width="10" height="14.5" fill="#1F78C1"/>
<rect x="349" y="1035.3" width="10" height="59.7" fill="#7EB26D"/>
<rect x="349" y="976.7" width="10" height="58.6" fill="#EAB839"/>
<rect x="349" y="966.5" width="10" height="10.2" fill="#6ED0E0"/>
<rect x="349" y="879.2" width="10" height="87.3" fill="#E24D42"/>
<rect x="349" y="866.9" width="10" height="12.2" fill="#1F78C1"/>
<rect x="364" y="1040.4" width="10" height="54.6" fill="#7EB26D"/>
<rect x="364" y="987.5" width="10" height="52.9" fill="#EAB839"/>
<rect x="364" y="932.1" width="10" height="55.5" fill="#E24D42"/>
<rect x="364" y="918.1" width="10" height="13.9" fill="#1F78C1"/>
<rect x="379" y="1043.6" width="10" height="51.4" fill="#7EB26D"/>
<rect x="379" y="993.5" width="10" height="50.1" fill="#EAB839"/>
<rect x="379" y="954.8" width="10" height="38.7" fill="#E24D42"/>
<rect x="379" y="944.3" width="10" height="10.5" fill="#1F78C1"/>
<rect x="394" y="1043.8" width="10" height="51.2" fill="#7EB26D"/>
<rect x="394" y="993.5" width="10" height="50.3" fill="#EAB839"/>
<rect x="394" y="952.6" width="10" height="41.0" fill="#E24D42"/>
<rect x="394" y="939.5" width="10" height="13.1" fill="#1F78C1"/>
<rect x="409" y="1045.3" width="10" height="49.7" fill="#7EB26D"/>
<rect x="409" y="997.5" width="10" height="47.8" fill="#EAB839"/>
<rect x="409" y="956.5" width="10" height="41.0" fill="#E24D42"/>
<rect x="409" y="944.0" width="10" height="12.5" fill="#1F78C1"/>
<rect x="424" y="1042.4" width="10" height="52.6" fill="#7EB26D"/>
<rect x="424" y="991.5" width="10" height="50.9" fill="#EAB839"/>
<rect x="424" y="952.6" width="10" height="39.0" fill="#E24D42"/>
<rect x="424" y="941.2" width="10" height="11.4" fill="#1F78C1"/>
<rect x="439" y="1042.1" width="10" height="52.9" fill="#7EB26D"/>
<rect x="439" y="990.7" width="10" height="51.5" fill="#EAB839"/>
<rect x="439" y="948.9" width="10" height="41.8" fill="#E24D42"/>
<rect x="439" y="934.6" width="10" height="14.2" fill="#1F78C1"/>
<rect x="454" y="1042.1" width="10" height="52.9" fill="#7EB26D"/>
<rect x="454" y="990.4" width="10" height="51.8" fill="#EAB839"/>
<rect x="454" y="946.6" width="10" height="43.8" fill="#E24D42"/>
<rect x="454" y="933.2" width="10" height="13.4" fill="#1F78C1"/>
<rect x="469" y="1039.9" width="10" height="55.1" fill="#7EB26D"/>
<rect x="469" y="985.8" width="10" height="54.0" fill="#EAB839"/>
<rect x="469" y="942.9" width="10" height="42.9" fill="#E24D42"/>
<rect x="469" y="928.1" width="10" height="14.8" fill="#1F78C1"/>
<rect x="484" y="1043.3" width="10" height="51.7" fill="#7EB26D"/>
<rect x="484" y="992.7" width="10" height="50.6" fill="#EAB839"/>
<rect x="484" y="953.1" width="10" height="39.5" fill="#E24D42"/>
<rect x="484" y="940.6" width="10" height="12.5" fill="#1F78C1"/>
<rect x="499" y="1041.3" width="10" height="53.7" fill="#7EB26D"/>
<rect x="499" y="988.4" width="10" height="52.9" fill="#EAB839"/>
<rect x="499" y="924.7" width="10" height="63.7" fill="#E24D42"/>
<rect x="499" y="912.4" width="10" height="12.2" fill="#1F78C1"/>
<rect x="514" y="1039.3" width="10" height="55.7" fill="#7EB26D"/>
<rect x="514" y="984.7" width="10" height="54.6" fill="#EAB839"/>
<rect x="514" y="903.9" width="10" height="80.8" fill="#E24D42"/>
<rect x="514" y="891.1" width="10" height="12.8" fill="#1F78C1"/>
<rect x="529" y="1027.3" width="10" height="67.7" fill="#7EB26D"/>
<rect x="529" y="960.5" width="10" height="66.8" fill="#EAB839"/>
<rect x="529" y="950.0" width="10" height="10.5" fill="#6ED0E0"/>
<rect x="529" y="765.7" width="10" height="184.3" fill="#E24D42"/>
<rect x="529" y="752.6" width="10" height="13.1" fill="#1F78C1"/>
<rect x="544" y="1044.1" width="10" height="50.9" fill="#7EB26D"/>
<rect x="544" y="994.6" width="10" height="49.5" fill="#EAB839"/>
<rect x="544" y="956.0" width="10" height="38.7" fill="#E24D42"/>
<rect x="544" y="944.9" width="10" height="11.1" fill="#1F78C1"/>
<rect x="559" y="1044.7" width="10" height="50.3" fill="#7EB26D"/>
<rect x="559" y="995.8" width="10" height="48.9" fill="#EAB839"/>
<rect x="559" y="957.1" width="10" height="38.7" fill="#E24D42"/>
<rect x="559" y="946.3" width="10" height="10.8" fill="#1F78C1"/>
<rect x="574" y="1045.0" width="10" height="50.0" fill="#7EB26D"/>
<rect x="574" y="996.3" width="10" height="48.6" fill="#EAB839"/>
<rect x="574" y="955.1" width="10" height="41.2" fill="#E24D42"/>
<rect x="574" y="942.9" width="10" height="12.2" fill="#1F78C1"/>
<rect x="589" y="1042.7" width="10" height="52.3" fill="#7EB26D"/>
<rect x="589" y="991.8" width="10" height="50.9" fill="#EAB839"/>
<rect x="589" y="950.3" width="10" height="41.5" fill="#E24D42"/>
<rect x="589" y="938.3" width="10" height="11.9" fill="#1F78C1"/>
<rect x="604" y="1045.0" width="10" height="50.0" fill="#7EB26D"/>
<rect x="604" y="996.3" width="10" height="48.6" fill="#EAB839"/>
<rect x="604" y="956.0" width="10" height="40.4" fill="#E24D42"/>
<rect x="604" y="944.0" width="10" height="11.9" fill="#1F78C1"/>
<rect x="619" y="1042.7" width="10" height="52.3" fill="#7EB26D"/>
<rect x="619" y="991.8" width="10" height="50.9" fill="#EAB839"/>
<rect x="619" y="951.7" width="10" height="40.1" fill="#E24D42"/>
<rect x="619" y="940.0" width="10" height="11.7" fill="#1F78C1"/>
<rect x="634" y="1041.9" width="10" height="53.1" fill="#7EB26D"/>
<rect x="634" y="989.8" width="10" height="52.0" fill="#EAB839"/>
<rect x="634" y="949.1" width="10" height="40.7" fill="#E24D42"/>
<rect x="634" y="938.9" width="10" height="10.2" fill="#1F78C1"/>
<rect x="649" y="1041.3" width="10" height="53.7" fill="#7EB26D"/>
<rect x="649" y="988.7" width="10" height="52.6" fill="#EAB839"/>
<rect x="649" y="950.6" width="10" height="38.1" fill="#E24D42"/>
<rect x="649" y="940.6" width="10" height="10.0" fill="#1F78C1"/>
<rect x="664" y="1039.6" width="10" height="55.4" fill="#7EB26D"/>
<rect x="664" y="985.5" width="10" height="54.0" fill="#EAB839"/>
<rect x="664" y="948.3" width="10" height="37.3" fill="#E24D42"/>
<rect x="664" y="938.0" width="10" height="10.2" fill="#1F78C1"/>
<rect x="679" y="1040.4" width="10" height="54.6" fill="#7EB26D"/>
<rect x="679" y="987.5" width="10" height="52.9" fill="#EAB839"/>
<rect x="679" y="927.5" width="10" height="60.0" fill="#E24D42"/>
<rect x="679" y="915.3" width="10" height="12.2" fill="#1F78C1"/>
<rect x="694" y="1038.2" width="10" height="56.8" fill="#7EB26D"/>
<rect x="694" y="982.4" width="10" height="55.7" fill="#EAB839"/>
<rect x="694" y="911.3" width="10" height="71.1" fill="#E24D42"/>
<rect x="694" y="897.9" width="10" height="13.4" fill="#1F78C1"/>
<rect x="709" y="1043.6" width="10" height="51.4" fill="#7EB26D"/>
<rect x="709" y="993.5" width="10" height="50.1" fill="#EAB839"/>
<rect x="709" y="983.6" width="10" height="10.0" fill="#6ED0E0"/>
<rect x="709" y="944.6" width="10" height="39.0" fill="#E24D42"/>
<rect x="709" y="933.5" width="10" height="11.1" fill="#1F78C1"/>
<rect x="724" y="1043.6" width="10" height="51.4" fill="#7EB26D"/>
<rect x="724" y="993.5" width="10" height="50.1" fill="#EAB839"/>
<rect x="724" y="953.7" width="10" height="39.8" fill="#E24D42"/>
<rect x="724" y="942.0" width="10" height="11.7" fill="#1F78C1"/>
<rect x="739" y="1043.6" width="10" height="51.4" fill="#7EB26D"/>
<rect x="739" y="992.7" width="10" height="50.9" fill="#EAB839"/>
<rect x="739" y="953.4" width="10" height="39.2" fill="#E24D42"/>
<rect x="739" y="943.2" width="10" height="10.2" fill="#1F78C1"/>
<rect x="754" y="1043.3" width="10" height="51.7" fill="#7EB26D"/>
<rect x="754" y="992.7" width="10" height="50.6" fill="#EAB839"/>
<rect x="754" y="946.6" width="10" height="46.1" fill="#E24D42"/>
<rect x="754" y="936.1" width="10" height="10.5" fill="#1F78C1"/>
<rect x="769" y="1044.4" width="10" height="50.6" fill="#7EB26D"/>
<rect x="769" y="994.9" width="10" height="49.5" fill="#EAB839"/>
<rect x="769" y="954.8" width="10" height="40.1" fill="#E24D42"/>
<rect x="769" y="943.2" width="10" height="11.7" fill="#1F78C1"/>
<rect x="784" y="1039.9" width="10" height="55.1" fill="#7EB26D"/>
<rect x="784" y="985.8" width="10" height="54.0" fill="#EAB839"/>
<rect x="784" y="911.3" width="10" height="74.5" fill="#E24D42"/>
<rect x="784" y="899.7" width="10" height="11.7" fill="#1F78C1"/>
<rect x="799" y="1041.3" width="10" height="53.7" fill="#7EB26D"/>
<rect x="799" y="988.7" width="10" height="52.6" fill="#EAB839"/>
<rect x="799" y="943.4" width="10" height="45.2" fill="#E24D42"/>
<rect x="799" y="930.9" width="10" height="12.5" fill="#1F78C1"/>
<rect x="814" y="1043.6" width="10" height="51.4" fill="#7EB26D"/>
<rect x="814" y="993.5" width="10" height="50.1" fill="#EAB839"/>
<rect x="814" y="944.3" width="10" height="49.2" fill="#E24D42"/>
<rect x="814" y="930.9" width="10" height="13.4" fill="#1F78C1"/>
<rect x="829" y="1029.3" width="10" height="65.7" fill="#7EB26D"/>
<rect x="829" y="965.1" width="10" height="64.3" fill="#EAB839"/>
<rect x="829" y="836.5" width="10" height="128.6" fill="#E24D42"/>
<rect x="829" y="821.2" width="10" height="15.4" fill="#1F78C1"/>
<rect x="844" y="1037.9" width="10" height="57.1" fill="#7EB26D"/>
<rect x="844" y="981.6" width="10" height="56.3" fill="#EAB839"/>
<rect x="844" y="918.1" width="10" height="63.4" fill="#E24D42"/>
<rect x="844" y="903.6" width="10" height="14.5" fill="#1F78C1"/>
<rect x="859" y="1035.3" width="10" height="59.7" fill="#7EB26D"/>
<rect x="859" y="976.4" width="10" height="58.9" fill="#EAB839"/>
<rect x="859" y="902.5" width="10" height="73.9" fill="#E24D42"/>
<rect x="859" y="890.0" width="10" height="12.5" fill="#1F78C1"/>
<rect x="874" y="1030.8" width="10" height="64.2" fill="#7EB26D"/>
<rect x="874" y="967.6" width="10" height="63.1" fill="#EAB839"/>
<rect x="874" y="862.7" width="10" height="104.9" fill="#E24D42"/>
<rect x="874" y="849.0" width="10" height="13.7" fill="#1F78C1"/>
<rect x="889" y="1023.9" width="10" height="71.1" fill="#7EB26D"/>
<rect x="889" y="954.0" width="10" height="70.0" fill="#EAB839"/>
<rect x="889" y="943.7" width="10" height="10.2" fill="#6ED0E0"/>
<rect x="889" y="778.8" width="10" height="165.0" fill="#E24D42"/>
<rect x="889" y="762.9" width="10" height="15.9" fill="#1F78C1"/>
<rect x="904" y="1040.1" width="10" height="54.9" fill="#7EB26D"/>
<rect x="904" y="986.7" width="10" height="53.5" fill="#EAB839"/>
<rect x="904" y="946.0" width="10" height="40.7" fill="#E24D42"/>
<rect x="904" y="932.6" width="10" height="13.4" fill="#1F78C1"/>
<rect x="919" y="1043.8" width="10" height="51.2" fill="#7EB26D"/>
<rect x="919" y="993.8" width="10" height="50.1" fill="#EAB839"/>
<rect x="919" y="953.7" width="10" height="40.1" fill="#E24D42"/>
<rect x="919" y="940.9" width="10" height="12.8" fill="#1F78C1"/>
<rect x="934" y="1043.3" width="10" height="51.7" fill="#7EB26D"/>
<rect x="934" y="992.7" width="10" height="50.6" fill="#EAB839"/>
<rect x="934" y="951.7" width="10" height="41.0" fill="#E24D42"/>
<rect x="934" y="939.5" width="10" height="12.2" fill="#1F78C1"/>
<rect x="949" y="1041.3" width="10" height="53.7" fill="#7EB26D"/>
<rect x="949" y="988.1" width="10" height="53.2" fill="#EAB839"/>
<rect x="949" y="948.9" width="10" height="39.2" fill="#E24D42"/>
<rect x="949" y="938.0" width="10" height="10.8" fill="#1F78C1"/>
<rect x="964" y="1042.4" width="10" height="52.6" fill="#7EB26D"/>
<rect x="964" y="991.8" width="10" height="50.6" fill="#EAB839"/>
<rect x="964" y="950.6" width="10" height="41.2" fill="#E24D42"/>
<rect x="964" y="938.0" width="10" height="12.5" fill="#1F78C1"/>
<rect x="979" y="1044.4" width="10" height="50.6" fill="#7EB26D"/>
<rect x="979" y="994.9" width="10" height="49.5" fill="#EAB839"/>
<rect x="979" y="956.5" width="10" height="38.4" fill="#E24D42"/>
<rect x="979" y="946.0" width="10" height="10.5" fill="#1F78C1"/>
<rect x="994" y="1044.4" width="10" height="50.6" fill="#7EB26D"/>
<rect x="994" y="994.6" width="10" height="49.8" fill="#EAB839"/>
<rect x="994" y="952.0" width="10" height="42.7" fill="#E24D42"/>
<rect x="994" y="940.0" width="10" height="11.9" fill="#1F78C1"/>
<rect x="1009" y="1043.6" width="10" height="51.4" fill="#7EB26D"/>
<rect x="1009" y="993.2" width="10" height="50.3" fill="#EAB839"/>
<rect x="1009" y="952.6" width="10" height="40.7" fill="#E24D42"/>
<rect x="1009" y="939.2" width="10" height="13.4" fill="#1F78C1"/>
<rect x="1024" y="1038.2" width="10" height="56.8" fill="#7EB26D"/>
<rect x="1024" y="981.8" width="10" height="56.3" fill="#EAB839"/>
<rect x="1024" y="941.7" width="10" height="40.1" fill="#E24D42"/>
<rect x="1024" y="928.7" width="10" height="13.1" fill="#1F78C1"/>
<rect x="1039" y="1040.4" width="10" height="54.6" fill="#7EB26D"/>
<rect x="1039" y="987.0" width="10" height="53.5" fill="#EAB839"/>
<rect x="1039" y="946.0" width="10" height="41.0" fill="#E24D42"/>
<rect x="1039" y="933.2" width="10" height="12.8" fill="#1F78C1"/>
<rect x="1054" y="1040.4" width="10" height="54.6" fill="#7EB26D"/>
<rect x="1054" y="987.0" width="10" height="53.5" fill="#EAB839"/>
<rect x="1054" y="946.6" width="10" height="40.4" fill="#E24D42"/>
<rect x="1054" y="934.6" width="10" height="11.9" fill="#1F78C1"/>
<rect x="1069" y="1037.9" width="10" height="57.1" fill="#7EB26D"/>
<rect x="1069" y="981.8" width="10" height="56.0" fill="#EAB839"/>
<rect x="1069" y="971.9" width="10" height="10.0" fill="#6ED0E0"/>
<rect x="1069" y="894.5" width="10" height="77.4" fill="#E24D42"/>
<rect x="1069" y="882.3" width="10" height="12.2" fill="#1F78C1"/>
<rect x="1084" y="1045.0" width="10" height="50.0" fill="#7EB26D"/>
<rect x="1084" y="995.8" width="10" height="49.2" fill="#EAB839"/>
<rect x="1084" y="948.9" width="10" height="46.9" fill="#E24D42"/>
<rect x="1084" y="936.1" width="10" height="12.8" fill="#1F78C1"/>
<rect x="1099" y="1039.3" width="10" height="55.7" fill="#7EB26D"/>
<rect x="1099" y="985.5" width="10" height="53.8" fill="#EAB839"/>
<rect x="1099" y="921.8" width="10" height="63.7" fill="#E24D42"/>
<rect x="1099" y="909.0" width="10" height="12.8" fill="#1F78C1"/>
<rect x="1114" y="1037.0" width="10" height="58.0" fill="#7EB26D"/>
<rect x="1114" y="980.1" width="10" height="56.9" fill="#EAB839"/>
<rect x="1114" y="896.0" width="10" height="84.2" fill="#E24D42"/>
<rect x="1114" y="882.9" width="10" height="13.1" fill="#1F78C1"/>
<rect x="1129" y="1040.1" width="10" height="54.9" fill="#7EB26D"/>
<rect x="1129" y="987.5" width="10" height="52.6" fill="#EAB839"/>
<rect x="1129" y="944.6" width="10" height="42.9" fill="#E24D42"/>
<rect x="1129" y="932.1" width="10" height="12.5" fill="#1F78C1"/>
<rect x="1144" y="1040.4" width="10" height="54.6" fill="#7EB26D"/>
<rect x="1144" y="987.5" width="10" height="52.9" fill="#EAB839"/>
<rect x="1144" y="946.6" width="10" height="41.0" fill="#E24D42"/>
<rect x="1144" y="934.1" width="10" height="12.5" fill="#1F78C1"/>
<rect x="1159" y="1041.3" width="10" height="53.7" fill="#7EB26D"/>
<rect x="1159" y="988.1" width="10" height="53.2" fill="#EAB839"/>
<rect x="1159" y="941.7" width="10" height="46.4" fill="#E24D42"/>
<rect x="1159" y="925.8" width="10" height="15.9" fill="#1F78C1"/>
</g>
<rect x="92.1" y="587.8" width="25.8" height="7.3" rx="2" fill="#7EB26D"/>
<rect x="938" y="587.8" width="25.8" height="7.3" rx="2" fill="#7EB26D"/>
<rect x="1309" y="587.8" width="25.8" height="7.3" rx="2" fill="#EAB839"/>
<rect x="1679" y="587.8" width="25.8" height="7.3" rx="2" fill="#6ED0E0"/>
<rect x="2050" y="587.8" width="25.8" height="7.3" rx="2" fill="#EF843C"/>
<rect x="1200.9" y="735.8" width="25.8" height="7.3" rx="2" fill="#7EB26D"/>
<rect x="1200.9" y="777.8" width="25.8" height="7.3" rx="2" fill="#EAB839"/>
<rect x="1200.9" y="819.8" width="25.8" height="7.3" rx="2" fill="#6ED0E0"/>
<rect x="1200.9" y="861.8" width="25.8" height="7.3" rx="2" fill="#EF843C"/>
<rect x="1200.9" y="903.8" width="25.8" height="7.3" rx="2" fill="#E24D42"/>
<rect x="1200.9" y="945.8" width="25.8" height="7.3" rx="2" fill="#1F78C1"/>
<path d="M1864.59 1101.35A273.6 273.6 0 1 1 2385.01 1101.35L2382.54 1100.54A271 271 0 1 0 1867.06 1100.54Z" fill="#181616" fill-opacity="1"/>
<path d="M1866.68 1100.67A271.4 271.4 0 1 1 2382.92 1100.67L2311.68 1077.52A196.5 196.5 0 1 0 1937.92 1077.52Z" fill="#262626" fill-opacity="1"/>
<path d="M1864.78 1101.29A273.4 273.4 0 0 1 1852.08 997.58L1857.46 997.96A268 268 0 0 0 1869.92 1099.62Z" fill="#1d1b1b" fill-opacity="1"/>
<path d="M1869.35 1099.80A268.6 268.6 0 0 1 1856.86 997.91L1927.79 1002.91A197.5 197.5 0 0 0 1936.97 1077.83Z" fill="#32ab2d" fill-opacity="1"/>
<path d="M1852.99 1105.12A285.8 285.8 0 0 1 2124.80 731.00L2124.80 743.60A273.2 273.2 0 0 0 1864.97 1101.22Z" fill="#32ab2d" fill-opacity="1"/>
<path d="M2124.80 731.00A285.8 285.8 0 0 1 2383.40 895.11L2372.00 900.48A273.2 273.2 0 0 0 2124.80 743.60Z" fill="#d97b29" fill-opacity="1"/>
<path d="M2383.40 895.11A285.8 285.8 0 0 1 2396.61 1105.12L2384.63 1101.22A273.2 273.2 0 0 0 2372.00 900.48Z" fill="#e23636" fill-opacity="1"/>
</svg>
<div id="txt">
<div class="t" style="top:35.83px;font-size:36px;left:245.50px;letter-spacing:-0.23px;">Getting Started with Grafana-Zabbix</div>
<div class="t" style="top:40.84px;font-size:25px;left:2035.50px;">Zoom Out</div>
<div class="t" style="top:40.60px;font-size:28px;left:2271.00px;">Last 6 hours</div>
<div class="t" style="top:144.50px;font-size:28px;left:-166.00px;width:1200px;text-align:center;font-weight:bold;-webkit-text-stroke:1px;">Panel Title</div>
<div class="t" style="top:144.50px;font-size:28px;left:1103.00px;width:1200px;text-align:center;font-weight:bold;-webkit-text-stroke:1px;">Panel Title</div>
<div class="t" style="top:668.50px;font-size:28px;left:257.00px;width:1200px;text-align:center;font-weight:bold;-webkit-text-stroke:1px;">Panel Title</div>
<div class="t" style="top:668.50px;font-size:28px;left:1526.00px;width:1200px;text-align:center;font-weight:bold;-webkit-text-stroke:1px;">CPU user time</div>
<div class="t" style="top:186.08px;font-size:24px;right:2467.90px;letter-spacing:-0.4px;">0.50</div>
<div class="t" style="top:250.08px;font-size:24px;right:2467.90px;letter-spacing:-0.4px;">0.40</div>
<div class="t" style="top:314.08px;font-size:24px;right:2467.90px;letter-spacing:-0.4px;">0.30</div>
<div class="t" style="top:378.08px;font-size:24px;right:2467.90px;letter-spacing:-0.4px;">0.20</div>
<div class="t" style="top:442.08px;font-size:24px;right:2467.90px;letter-spacing:-0.4px;">0.10</div>
<div class="t" style="top:508.08px;font-size:24px;right:2467.90px;letter-spacing:-0.4px;">0</div>
<div class="t" style="top:534.08px;font-size:24px;left:-306.70px;width:1200px;text-align:center;letter-spacing:-0.6px;">10:00</div>
<div class="t" style="top:534.08px;font-size:24px;left:-76.70px;width:1200px;text-align:center;letter-spacing:-0.6px;">12:00</div>
<div class="t" style="top:534.08px;font-size:24px;left:153.30px;width:1200px;text-align:center;letter-spacing:-0.6px;">14:00</div>
<div class="t" style="top:577.68px;font-size:24px;left:125.00px;letter-spacing:-0.12px;">Processor load (15 min average per core)</div>
<div class="t" style="top:186.08px;font-size:24px;right:1629.00px;letter-spacing:-0.4px;">125</div>
<div class="t" style="top:250.08px;font-size:24px;right:1629.00px;letter-spacing:-0.4px;">100</div>
<div class="t" style="top:314.08px;font-size:24px;right:1629.00px;letter-spacing:-0.4px;">75</div>
<div class="t" style="top:378.08px;font-size:24px;right:1629.00px;letter-spacing:-0.4px;">50</div>
<div class="t" style="top:442.08px;font-size:24px;right:1629.00px;letter-spacing:-0.4px;">25</div>
<div class="t" style="top:508.08px;font-size:24px;right:1629.00px;letter-spacing:-0.4px;">0</div>
<div class="t" style="top:534.08px;font-size:24px;left:379.30px;width:1200px;text-align:center;letter-spacing:-0.6px;">08:30</div>
<div class="t" style="top:534.08px;font-size:24px;left:507.30px;width:1200px;text-align:center;letter-spacing:-0.6px;">09:00</div>
<div class="t" style="top:534.08px;font-size:24px;left:637.30px;width:1200px;text-align:center;letter-spacing:-0.6px;">09:30</div>
<div class="t" style="top:534.08px;font-size:24px;left:765.30px;width:1200px;text-align:center;letter-spacing:-0.6px;">10:00</div>
<div class="t" style="top:534.08px;font-size:24px;left:893.30px;width:1200px;text-align:center;letter-spacing:-0.6px;">10:30</div>
<div class="t" style="top:534.08px;font-size:24px;left:1023.30px;width:1200px;text-align:center;letter-spacing:-0.6px;">11:00</div>
<div class="t" style="top:534.08px;font-size:24px;left:1151.30px;width:1200px;text-align:center;letter-spacing:-0.6px;">11:30</div>
<div class="t" style="top:534.08px;font-size:24px;left:1281.30px;width:1200px;text-align:center;letter-spacing:-0.6px;">12:00</div>
<div class="t" style="top:534.08px;font-size:24px;left:1409.30px;width:1200px;text-align:center;letter-spacing:-0.6px;">12:30</div>
<div class="t" style="top:534.08px;font-size:24px;left:1537.30px;width:1200px;text-align:center;letter-spacing:-0.6px;">13:00</div>
<div class="t" style="top:534.08px;font-size:24px;left:1667.30px;width:1200px;text-align:center;letter-spacing:-0.6px;">13:30</div>
<div class="t" style="top:534.08px;font-size:24px;left:1795.30px;width:1200px;text-align:center;letter-spacing:-0.6px;">14:00</div>
<div class="t" style="top:577.68px;font-size:24px;left:971.00px;">backend01: CPU system time</div>
<div class="t" style="top:577.68px;font-size:24px;left:1342.00px;">backend02: CPU system time</div>
<div class="t" style="top:577.68px;font-size:24px;left:1712.00px;">backend03: CPU system time</div>
<div class="t" style="top:577.68px;font-size:24px;left:2083.00px;">backend04: CPU system time</div>
<div class="t" style="top:710.08px;font-size:24px;right:2487.90px;letter-spacing:-0.4px;">20</div>
<div class="t" style="top:802.08px;font-size:24px;right:2487.90px;letter-spacing:-0.4px;">15</div>
<div class="t" style="top:896.08px;font-size:24px;right:2487.90px;letter-spacing:-0.4px;">10</div>
<div class="t" style="top:990.08px;font-size:24px;right:2487.90px;letter-spacing:-0.4px;">5</div>
<div class="t" style="top:1084.08px;font-size:24px;right:2487.90px;letter-spacing:-0.4px;">0</div>
<div class="t" style="top:1109.68px;font-size:24px;left:-400.70px;width:1200px;text-align:center;letter-spacing:-0.6px;">09:00</div>
<div class="t" style="top:1109.68px;font-size:24px;left:-220.70px;width:1200px;text-align:center;letter-spacing:-0.6px;">10:00</div>
<div class="t" style="top:1109.68px;font-size:24px;left:-40.70px;width:1200px;text-align:center;letter-spacing:-0.6px;">11:00</div>
<div class="t" style="top:1109.68px;font-size:24px;left:139.30px;width:1200px;text-align:center;letter-spacing:-0.6px;">12:00</div>
<div class="t" style="top:1109.68px;font-size:24px;left:319.30px;width:1200px;text-align:center;letter-spacing:-0.6px;">13:00</div>
<div class="t" style="top:1109.68px;font-size:24px;left:499.30px;width:1200px;text-align:center;letter-spacing:-0.6px;">14:00</div>
<div class="t" style="top:723.58px;font-size:24px;left:1240.70px;letter-spacing:0.08px;">MySQL begin operations per second</div>
<div class="t" style="top:765.58px;font-size:24px;left:1240.70px;letter-spacing:0.08px;">MySQL commit operations per second</div>
<div class="t" style="top:807.58px;font-size:24px;left:1240.70px;letter-spacing:0.08px;">MySQL delete operations per second</div>
<div class="t" style="top:849.58px;font-size:24px;left:1240.70px;letter-spacing:0.08px;">MySQL rollback operations per second</div>
<div class="t" style="top:891.58px;font-size:24px;left:1240.70px;letter-spacing:0.08px;">MySQL select operations per second</div>
<div class="t" style="top:933.58px;font-size:24px;left:1240.70px;letter-spacing:0.08px;">MySQL update operations per second</div>
<div class="t" style="top:998.35px;font-size:72px;left:1523.00px;width:1200px;text-align:center;font-weight:bold;-webkit-text-stroke:1px;">10%</div>
<div class="btn"></div>
<svg class="gfx" width="2560" height="1600" viewBox="0 0 2560 1600"><path fill="#fff" transform="matrix(0.01420 0 0 -0.01385 2371.00 1204.50)" d="M1408 800v-192q0 -40 -28 -68t-68 -28h-416v-416q0 -40 -28 -68t-68 -28h-192q-40 0 -68 28t-28 68v416h-416q-40 0 -68 28t-28 68v192q0 40 28 68t68 28h416v416q0 40 28 68t68 28h192q40 0 68 -28t28 -68v-416h416q40 0 68 -28t28 -68z"/></svg>
<div class="t" style="top:1184.68px;font-size:24px;left:2396.00px;color:#fff;">ADD ROW</div>
</div>
</body></html>
